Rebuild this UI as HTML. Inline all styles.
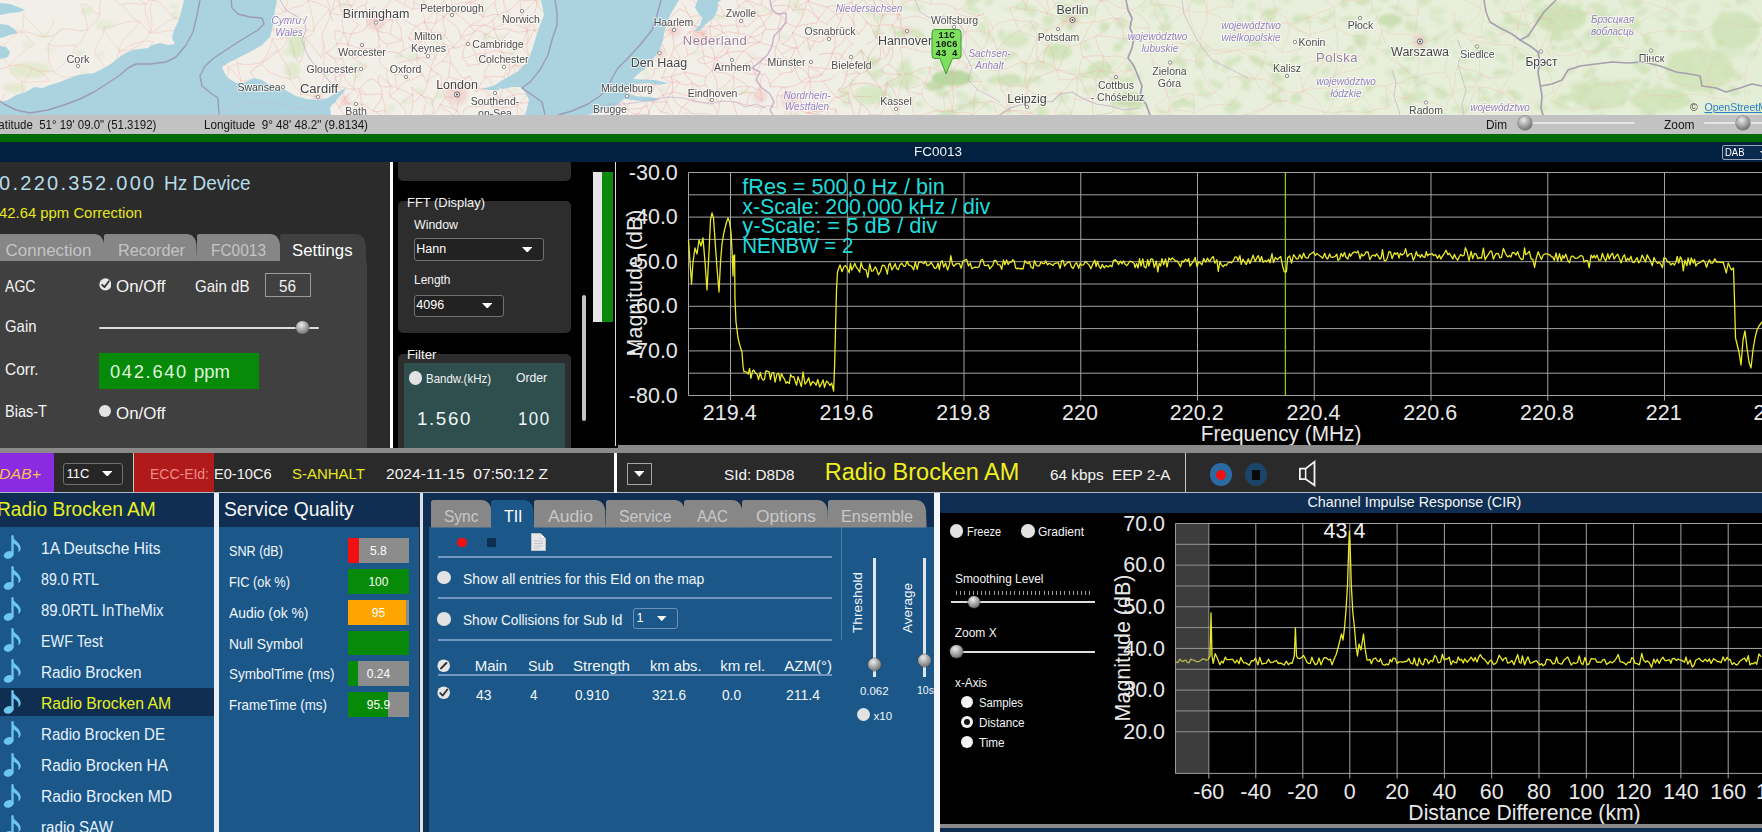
<!DOCTYPE html>
<html lang="en"><head><meta charset="utf-8"><title>DAB receiver</title>
<style>
html,body{margin:0;padding:0}
body{width:1762px;height:832px;overflow:hidden;background:#2b2b2b;position:relative;font-family:"Liberation Sans",sans-serif}
.b{position:absolute;display:block}
.t{position:absolute;white-space:pre;line-height:1;transform-origin:0 50%;font-family:"Liberation Sans",sans-serif}
svg text{white-space:pre}
</style></head>
<body>
<svg class="b" style="left:0;top:0" width="1762" height="115" viewBox="0 0 1762 115">
<defs><filter id="bl" x="-20%" y="-20%" width="140%" height="140%"><feGaussianBlur stdDeviation="5"/></filter><filter id="bl2" x="-20%" y="-20%" width="140%" height="140%"><feGaussianBlur stdDeviation="1.6"/></filter><linearGradient id="gr" x1="0" x2="1" y1="0" y2="0"><stop offset="0" stop-color="#e9efdc" stop-opacity="0"/><stop offset="0.44" stop-color="#e9efdc" stop-opacity="0.05"/><stop offset="0.56" stop-color="#e9efdc" stop-opacity="0.8"/><stop offset="1" stop-color="#e4eed6" stop-opacity="1"/></linearGradient></defs>
<rect width="1762" height="115" fill="#f2efe9"/>
<rect width="1762" height="115" fill="url(#gr)"/>
<g filter="url(#bl2)"><ellipse cx="907" cy="61" rx="2.9" ry="3.7" fill="#cfe2b9" opacity="0.37" transform="rotate(-5 907 61)"/><ellipse cx="904" cy="7" rx="7.9" ry="2.3" fill="#cfe2b9" opacity="0.46" transform="rotate(10 904 7)"/><ellipse cx="1714" cy="66" rx="8.8" ry="2.0" fill="#cfe2b9" opacity="0.78" transform="rotate(-17 1714 66)"/><ellipse cx="973" cy="10" rx="7.8" ry="2.5" fill="#cfe2b9" opacity="0.64" transform="rotate(11 973 10)"/><ellipse cx="1183" cy="63" rx="2.9" ry="2.6" fill="#cfe2b9" opacity="0.69" transform="rotate(-6 1183 63)"/><ellipse cx="1130" cy="67" rx="4.4" ry="4.7" fill="#cfe2b9" opacity="0.70" transform="rotate(-20 1130 67)"/><ellipse cx="980" cy="56" rx="6.8" ry="4.6" fill="#cfe2b9" opacity="0.64" transform="rotate(30 980 56)"/><ellipse cx="1129" cy="81" rx="6.3" ry="3.5" fill="#cfe2b9" opacity="0.77" transform="rotate(36 1129 81)"/><ellipse cx="1277" cy="77" rx="7.1" ry="4.2" fill="#cfe2b9" opacity="0.85" transform="rotate(26 1277 77)"/><ellipse cx="861" cy="52" rx="3.3" ry="2.0" fill="#cfe2b9" opacity="0.73" transform="rotate(-30 861 52)"/><ellipse cx="1654" cy="96" rx="4.3" ry="3.3" fill="#cfe2b9" opacity="0.53" transform="rotate(31 1654 96)"/><ellipse cx="1723" cy="14" rx="4.0" ry="2.7" fill="#cfe2b9" opacity="0.59" transform="rotate(7 1723 14)"/><ellipse cx="1082" cy="-4" rx="4.9" ry="3.9" fill="#cfe2b9" opacity="0.83" transform="rotate(15 1082 -4)"/><ellipse cx="1315" cy="71" rx="2.9" ry="5.1" fill="#cfe2b9" opacity="0.74" transform="rotate(30 1315 71)"/><ellipse cx="1576" cy="44" rx="3.2" ry="4.1" fill="#cfe2b9" opacity="0.38" transform="rotate(-35 1576 44)"/><ellipse cx="1032" cy="16" rx="2.8" ry="1.8" fill="#cfe2b9" opacity="0.43" transform="rotate(-32 1032 16)"/><ellipse cx="1406" cy="14" rx="4.8" ry="3.1" fill="#cfe2b9" opacity="0.41" transform="rotate(28 1406 14)"/><ellipse cx="1756" cy="53" rx="3.1" ry="2.2" fill="#cfe2b9" opacity="0.52" transform="rotate(-19 1756 53)"/><ellipse cx="1604" cy="16" rx="8.7" ry="3.8" fill="#cfe2b9" opacity="0.42" transform="rotate(3 1604 16)"/><ellipse cx="1636" cy="81" rx="4.9" ry="2.4" fill="#cfe2b9" opacity="0.74" transform="rotate(3 1636 81)"/><ellipse cx="1558" cy="36" rx="7.8" ry="5.4" fill="#cfe2b9" opacity="0.78" transform="rotate(24 1558 36)"/><ellipse cx="1595" cy="86" rx="5.9" ry="3.1" fill="#cfe2b9" opacity="0.36" transform="rotate(-38 1595 86)"/><ellipse cx="1722" cy="51" rx="8.9" ry="5.3" fill="#cfe2b9" opacity="0.53" transform="rotate(-22 1722 51)"/><ellipse cx="1049" cy="20" rx="6.6" ry="5.1" fill="#cfe2b9" opacity="0.77" transform="rotate(-2 1049 20)"/><ellipse cx="1442" cy="94" rx="6.8" ry="5.2" fill="#cfe2b9" opacity="0.74" transform="rotate(20 1442 94)"/><ellipse cx="1508" cy="17" rx="3.5" ry="5.1" fill="#cfe2b9" opacity="0.75" transform="rotate(-28 1508 17)"/><ellipse cx="1602" cy="116" rx="4.8" ry="3.8" fill="#cfe2b9" opacity="0.42" transform="rotate(-39 1602 116)"/><ellipse cx="1735" cy="75" rx="8.6" ry="3.4" fill="#cfe2b9" opacity="0.79" transform="rotate(26 1735 75)"/><ellipse cx="1035" cy="27" rx="4.1" ry="4.0" fill="#cfe2b9" opacity="0.48" transform="rotate(-6 1035 27)"/><ellipse cx="961" cy="107" rx="5.5" ry="4.0" fill="#cfe2b9" opacity="0.80" transform="rotate(-6 961 107)"/><ellipse cx="1686" cy="57" rx="5.9" ry="1.9" fill="#cfe2b9" opacity="0.57" transform="rotate(-25 1686 57)"/><ellipse cx="844" cy="93" rx="5.6" ry="4.5" fill="#cfe2b9" opacity="0.63" transform="rotate(-14 844 93)"/><ellipse cx="938" cy="64" rx="4.3" ry="4.7" fill="#cfe2b9" opacity="0.60" transform="rotate(5 938 64)"/><ellipse cx="1541" cy="107" rx="6.5" ry="3.7" fill="#cfe2b9" opacity="0.61" transform="rotate(15 1541 107)"/><ellipse cx="1257" cy="61" rx="8.6" ry="4.4" fill="#cfe2b9" opacity="0.79" transform="rotate(35 1257 61)"/><ellipse cx="1614" cy="13" rx="5.4" ry="2.1" fill="#cfe2b9" opacity="0.47" transform="rotate(-34 1614 13)"/><ellipse cx="1042" cy="112" rx="5.7" ry="5.5" fill="#cfe2b9" opacity="0.77" transform="rotate(-27 1042 112)"/><ellipse cx="1238" cy="59" rx="3.8" ry="3.0" fill="#cfe2b9" opacity="0.71" transform="rotate(-38 1238 59)"/><ellipse cx="1351" cy="50" rx="4.7" ry="4.1" fill="#cfe2b9" opacity="0.61" transform="rotate(-35 1351 50)"/><ellipse cx="1748" cy="92" rx="3.2" ry="2.8" fill="#cfe2b9" opacity="0.37" transform="rotate(22 1748 92)"/><ellipse cx="1089" cy="12" rx="8.4" ry="4.8" fill="#cfe2b9" opacity="0.48" transform="rotate(-28 1089 12)"/><ellipse cx="1687" cy="66" rx="3.1" ry="2.0" fill="#cfe2b9" opacity="0.69" transform="rotate(-6 1687 66)"/><ellipse cx="1579" cy="6" rx="2.9" ry="5.0" fill="#cfe2b9" opacity="0.58" transform="rotate(-13 1579 6)"/><ellipse cx="1350" cy="109" rx="3.3" ry="3.7" fill="#cfe2b9" opacity="0.47" transform="rotate(-31 1350 109)"/><ellipse cx="989" cy="2" rx="4.5" ry="2.9" fill="#cfe2b9" opacity="0.73" transform="rotate(-17 989 2)"/><ellipse cx="1301" cy="18" rx="2.6" ry="2.7" fill="#cfe2b9" opacity="0.36" transform="rotate(19 1301 18)"/><ellipse cx="1348" cy="19" rx="8.6" ry="2.2" fill="#cfe2b9" opacity="0.76" transform="rotate(-5 1348 19)"/><ellipse cx="1296" cy="98" rx="5.8" ry="4.3" fill="#cfe2b9" opacity="0.84" transform="rotate(-13 1296 98)"/><ellipse cx="1607" cy="82" rx="5.1" ry="3.1" fill="#cfe2b9" opacity="0.38" transform="rotate(-30 1607 82)"/><ellipse cx="905" cy="86" rx="3.6" ry="2.1" fill="#cfe2b9" opacity="0.77" transform="rotate(30 905 86)"/><ellipse cx="1458" cy="30" rx="4.4" ry="3.5" fill="#cfe2b9" opacity="0.43" transform="rotate(-4 1458 30)"/><ellipse cx="1125" cy="40" rx="5.0" ry="3.6" fill="#cfe2b9" opacity="0.60" transform="rotate(-24 1125 40)"/><ellipse cx="1305" cy="-3" rx="3.1" ry="3.3" fill="#cfe2b9" opacity="0.37" transform="rotate(-38 1305 -3)"/><ellipse cx="1121" cy="24" rx="5.9" ry="4.6" fill="#cfe2b9" opacity="0.68" transform="rotate(17 1121 24)"/><ellipse cx="1651" cy="44" rx="8.9" ry="2.4" fill="#cfe2b9" opacity="0.71" transform="rotate(11 1651 44)"/><ellipse cx="1418" cy="86" rx="3.4" ry="3.7" fill="#cfe2b9" opacity="0.60" transform="rotate(27 1418 86)"/><ellipse cx="1582" cy="97" rx="8.3" ry="4.3" fill="#cfe2b9" opacity="0.70" transform="rotate(-22 1582 97)"/><ellipse cx="869" cy="12" rx="3.2" ry="4.9" fill="#cfe2b9" opacity="0.63" transform="rotate(10 869 12)"/><ellipse cx="1417" cy="79" rx="2.5" ry="4.8" fill="#cfe2b9" opacity="0.72" transform="rotate(0 1417 79)"/><ellipse cx="1333" cy="76" rx="7.3" ry="2.7" fill="#cfe2b9" opacity="0.39" transform="rotate(-19 1333 76)"/><ellipse cx="1512" cy="21" rx="8.8" ry="3.6" fill="#cfe2b9" opacity="0.54" transform="rotate(-2 1512 21)"/><ellipse cx="1470" cy="90" rx="6.7" ry="2.1" fill="#cfe2b9" opacity="0.42" transform="rotate(-20 1470 90)"/><ellipse cx="1525" cy="33" rx="2.6" ry="2.0" fill="#cfe2b9" opacity="0.48" transform="rotate(14 1525 33)"/><ellipse cx="1478" cy="78" rx="5.9" ry="3.5" fill="#cfe2b9" opacity="0.58" transform="rotate(-31 1478 78)"/><ellipse cx="1664" cy="20" rx="8.6" ry="1.9" fill="#cfe2b9" opacity="0.58" transform="rotate(26 1664 20)"/><ellipse cx="1733" cy="51" rx="3.9" ry="5.3" fill="#cfe2b9" opacity="0.46" transform="rotate(7 1733 51)"/><ellipse cx="962" cy="96" rx="8.3" ry="4.4" fill="#cfe2b9" opacity="0.47" transform="rotate(32 962 96)"/><ellipse cx="1288" cy="-1" rx="5.7" ry="3.5" fill="#cfe2b9" opacity="0.50" transform="rotate(-29 1288 -1)"/><ellipse cx="1671" cy="31" rx="5.1" ry="5.5" fill="#cfe2b9" opacity="0.64" transform="rotate(-11 1671 31)"/><ellipse cx="1235" cy="30" rx="3.2" ry="4.9" fill="#cfe2b9" opacity="0.49" transform="rotate(35 1235 30)"/><ellipse cx="1070" cy="28" rx="3.7" ry="3.2" fill="#cfe2b9" opacity="0.83" transform="rotate(31 1070 28)"/><ellipse cx="1589" cy="73" rx="8.6" ry="3.8" fill="#cfe2b9" opacity="0.71" transform="rotate(-36 1589 73)"/><ellipse cx="1515" cy="51" rx="6.7" ry="2.9" fill="#cfe2b9" opacity="0.37" transform="rotate(34 1515 51)"/><ellipse cx="957" cy="54" rx="4.4" ry="4.5" fill="#cfe2b9" opacity="0.84" transform="rotate(-19 957 54)"/><ellipse cx="1445" cy="33" rx="5.1" ry="2.4" fill="#cfe2b9" opacity="0.43" transform="rotate(-23 1445 33)"/><ellipse cx="1675" cy="57" rx="8.4" ry="5.5" fill="#cfe2b9" opacity="0.57" transform="rotate(-29 1675 57)"/><ellipse cx="1017" cy="7" rx="3.1" ry="2.7" fill="#cfe2b9" opacity="0.48" transform="rotate(6 1017 7)"/><ellipse cx="1658" cy="87" rx="5.2" ry="3.7" fill="#cfe2b9" opacity="0.54" transform="rotate(-13 1658 87)"/><ellipse cx="1636" cy="22" rx="4.1" ry="3.3" fill="#cfe2b9" opacity="0.57" transform="rotate(36 1636 22)"/><ellipse cx="1622" cy="102" rx="2.7" ry="4.4" fill="#cfe2b9" opacity="0.80" transform="rotate(-2 1622 102)"/><ellipse cx="1381" cy="-4" rx="8.5" ry="4.9" fill="#cfe2b9" opacity="0.78" transform="rotate(38 1381 -4)"/><ellipse cx="1069" cy="9" rx="5.9" ry="4.3" fill="#cfe2b9" opacity="0.82" transform="rotate(18 1069 9)"/><ellipse cx="1437" cy="89" rx="6.1" ry="1.9" fill="#cfe2b9" opacity="0.74" transform="rotate(-21 1437 89)"/><ellipse cx="1688" cy="75" rx="3.3" ry="2.7" fill="#cfe2b9" opacity="0.67" transform="rotate(16 1688 75)"/><ellipse cx="1377" cy="43" rx="6.4" ry="1.8" fill="#cfe2b9" opacity="0.50" transform="rotate(-3 1377 43)"/><ellipse cx="1724" cy="75" rx="5.6" ry="2.7" fill="#cfe2b9" opacity="0.47" transform="rotate(37 1724 75)"/><ellipse cx="1490" cy="34" rx="5.7" ry="4.3" fill="#cfe2b9" opacity="0.56" transform="rotate(-19 1490 34)"/><ellipse cx="1455" cy="109" rx="2.7" ry="3.1" fill="#cfe2b9" opacity="0.56" transform="rotate(15 1455 109)"/><ellipse cx="1127" cy="96" rx="3.9" ry="4.6" fill="#cfe2b9" opacity="0.50" transform="rotate(36 1127 96)"/><ellipse cx="1297" cy="19" rx="5.2" ry="4.3" fill="#cfe2b9" opacity="0.82" transform="rotate(-28 1297 19)"/><ellipse cx="971" cy="2" rx="5.1" ry="5.1" fill="#cfe2b9" opacity="0.79" transform="rotate(19 971 2)"/><ellipse cx="1760" cy="110" rx="3.7" ry="5.3" fill="#cfe2b9" opacity="0.72" transform="rotate(-37 1760 110)"/><ellipse cx="1453" cy="42" rx="4.7" ry="2.4" fill="#cfe2b9" opacity="0.35" transform="rotate(-18 1453 42)"/><ellipse cx="1164" cy="113" rx="8.8" ry="2.6" fill="#cfe2b9" opacity="0.53" transform="rotate(26 1164 113)"/><ellipse cx="1598" cy="49" rx="5.6" ry="3.2" fill="#cfe2b9" opacity="0.81" transform="rotate(-25 1598 49)"/><ellipse cx="1176" cy="105" rx="5.2" ry="4.8" fill="#cfe2b9" opacity="0.73" transform="rotate(-37 1176 105)"/><ellipse cx="1409" cy="28" rx="4.6" ry="2.8" fill="#cfe2b9" opacity="0.35" transform="rotate(20 1409 28)"/><ellipse cx="1685" cy="73" rx="2.7" ry="2.7" fill="#cfe2b9" opacity="0.59" transform="rotate(37 1685 73)"/><ellipse cx="1720" cy="43" rx="5.3" ry="3.6" fill="#cfe2b9" opacity="0.81" transform="rotate(-25 1720 43)"/><ellipse cx="1580" cy="86" rx="7.5" ry="4.0" fill="#cfe2b9" opacity="0.51" transform="rotate(-14 1580 86)"/><ellipse cx="1174" cy="91" rx="3.8" ry="4.6" fill="#cfe2b9" opacity="0.47" transform="rotate(-35 1174 91)"/><ellipse cx="871" cy="63" rx="8.9" ry="5.1" fill="#cfe2b9" opacity="0.84" transform="rotate(-19 871 63)"/><ellipse cx="918" cy="8" rx="7.1" ry="3.5" fill="#cfe2b9" opacity="0.47" transform="rotate(-7 918 8)"/><ellipse cx="1412" cy="78" rx="8.0" ry="4.3" fill="#cfe2b9" opacity="0.41" transform="rotate(27 1412 78)"/><ellipse cx="1111" cy="65" rx="7.3" ry="2.5" fill="#cfe2b9" opacity="0.47" transform="rotate(-20 1111 65)"/><ellipse cx="1442" cy="117" rx="5.6" ry="4.8" fill="#cfe2b9" opacity="0.77" transform="rotate(33 1442 117)"/><ellipse cx="877" cy="32" rx="3.7" ry="5.4" fill="#cfe2b9" opacity="0.64" transform="rotate(34 877 32)"/><ellipse cx="1183" cy="102" rx="4.2" ry="4.7" fill="#cfe2b9" opacity="0.82" transform="rotate(-32 1183 102)"/><ellipse cx="1390" cy="72" rx="4.9" ry="2.3" fill="#cfe2b9" opacity="0.45" transform="rotate(-20 1390 72)"/><ellipse cx="1393" cy="76" rx="2.6" ry="3.0" fill="#cfe2b9" opacity="0.69" transform="rotate(-25 1393 76)"/><ellipse cx="1345" cy="4" rx="5.1" ry="3.8" fill="#cfe2b9" opacity="0.67" transform="rotate(-33 1345 4)"/><ellipse cx="991" cy="81" rx="4.3" ry="2.9" fill="#cfe2b9" opacity="0.83" transform="rotate(-15 991 81)"/><ellipse cx="1362" cy="40" rx="8.1" ry="5.5" fill="#cfe2b9" opacity="0.53" transform="rotate(-24 1362 40)"/><ellipse cx="1511" cy="21" rx="8.4" ry="3.4" fill="#cfe2b9" opacity="0.76" transform="rotate(-8 1511 21)"/><ellipse cx="1654" cy="52" rx="2.6" ry="3.8" fill="#cfe2b9" opacity="0.67" transform="rotate(33 1654 52)"/><ellipse cx="922" cy="72" rx="5.8" ry="2.3" fill="#cfe2b9" opacity="0.49" transform="rotate(2 922 72)"/><ellipse cx="1693" cy="9" rx="7.7" ry="5.4" fill="#cfe2b9" opacity="0.45" transform="rotate(-30 1693 9)"/><ellipse cx="1710" cy="115" rx="2.8" ry="5.2" fill="#cfe2b9" opacity="0.54" transform="rotate(32 1710 115)"/><ellipse cx="1412" cy="97" rx="7.6" ry="2.6" fill="#cfe2b9" opacity="0.55" transform="rotate(28 1412 97)"/><ellipse cx="1605" cy="18" rx="5.1" ry="3.7" fill="#cfe2b9" opacity="0.54" transform="rotate(-30 1605 18)"/><ellipse cx="875" cy="98" rx="6.4" ry="3.8" fill="#cfe2b9" opacity="0.66" transform="rotate(-16 875 98)"/><ellipse cx="1227" cy="67" rx="6.8" ry="3.5" fill="#cfe2b9" opacity="0.57" transform="rotate(-38 1227 67)"/><ellipse cx="1411" cy="56" rx="7.5" ry="4.7" fill="#cfe2b9" opacity="0.58" transform="rotate(-26 1411 56)"/><ellipse cx="1276" cy="9" rx="5.3" ry="2.1" fill="#cfe2b9" opacity="0.57" transform="rotate(1 1276 9)"/><ellipse cx="878" cy="74" rx="7.3" ry="4.7" fill="#cfe2b9" opacity="0.61" transform="rotate(-36 878 74)"/><ellipse cx="1515" cy="95" rx="8.9" ry="3.6" fill="#cfe2b9" opacity="0.83" transform="rotate(33 1515 95)"/><ellipse cx="986" cy="105" rx="7.8" ry="2.3" fill="#cfe2b9" opacity="0.60" transform="rotate(34 986 105)"/><ellipse cx="1032" cy="28" rx="4.6" ry="1.9" fill="#cfe2b9" opacity="0.44" transform="rotate(-27 1032 28)"/><ellipse cx="1703" cy="79" rx="3.6" ry="4.7" fill="#cfe2b9" opacity="0.41" transform="rotate(2 1703 79)"/><ellipse cx="1204" cy="93" rx="8.9" ry="3.9" fill="#cfe2b9" opacity="0.53" transform="rotate(21 1204 93)"/><ellipse cx="885" cy="96" rx="6.7" ry="5.4" fill="#cfe2b9" opacity="0.64" transform="rotate(13 885 96)"/><ellipse cx="1128" cy="-4" rx="3.5" ry="4.1" fill="#cfe2b9" opacity="0.57" transform="rotate(1 1128 -4)"/><ellipse cx="1666" cy="12" rx="6.7" ry="1.9" fill="#cfe2b9" opacity="0.35" transform="rotate(-12 1666 12)"/><ellipse cx="938" cy="40" rx="6.3" ry="4.0" fill="#cfe2b9" opacity="0.45" transform="rotate(10 938 40)"/><ellipse cx="1065" cy="14" rx="6.6" ry="5.0" fill="#cfe2b9" opacity="0.74" transform="rotate(-8 1065 14)"/><ellipse cx="1358" cy="39" rx="5.4" ry="5.3" fill="#cfe2b9" opacity="0.72" transform="rotate(-20 1358 39)"/><ellipse cx="1673" cy="1" rx="5.1" ry="2.7" fill="#cfe2b9" opacity="0.38" transform="rotate(22 1673 1)"/><ellipse cx="1001" cy="34" rx="2.8" ry="5.1" fill="#cfe2b9" opacity="0.74" transform="rotate(17 1001 34)"/><ellipse cx="1269" cy="86" rx="4.0" ry="2.2" fill="#cfe2b9" opacity="0.47" transform="rotate(-37 1269 86)"/><ellipse cx="1619" cy="83" rx="6.1" ry="3.4" fill="#cfe2b9" opacity="0.74" transform="rotate(2 1619 83)"/><ellipse cx="1040" cy="103" rx="4.2" ry="2.7" fill="#cfe2b9" opacity="0.72" transform="rotate(36 1040 103)"/><ellipse cx="1528" cy="36" rx="4.6" ry="2.7" fill="#cfe2b9" opacity="0.80" transform="rotate(10 1528 36)"/><ellipse cx="1273" cy="98" rx="8.1" ry="3.4" fill="#cfe2b9" opacity="0.71" transform="rotate(6 1273 98)"/><ellipse cx="1124" cy="22" rx="3.0" ry="5.2" fill="#cfe2b9" opacity="0.42" transform="rotate(-38 1124 22)"/><ellipse cx="938" cy="109" rx="3.4" ry="1.9" fill="#cfe2b9" opacity="0.37" transform="rotate(15 938 109)"/><ellipse cx="1424" cy="81" rx="2.9" ry="4.0" fill="#cfe2b9" opacity="0.53" transform="rotate(25 1424 81)"/><ellipse cx="1596" cy="105" rx="8.1" ry="5.2" fill="#cfe2b9" opacity="0.82" transform="rotate(-31 1596 105)"/><ellipse cx="1030" cy="10" rx="8.0" ry="4.8" fill="#cfe2b9" opacity="0.67" transform="rotate(26 1030 10)"/><ellipse cx="1422" cy="31" rx="3.1" ry="4.6" fill="#cfe2b9" opacity="0.45" transform="rotate(-14 1422 31)"/><ellipse cx="1231" cy="-1" rx="4.3" ry="4.4" fill="#cfe2b9" opacity="0.53" transform="rotate(-14 1231 -1)"/><ellipse cx="1729" cy="57" rx="6.5" ry="1.9" fill="#cfe2b9" opacity="0.56" transform="rotate(-5 1729 57)"/><ellipse cx="1553" cy="38" rx="6.0" ry="2.6" fill="#cfe2b9" opacity="0.78" transform="rotate(-33 1553 38)"/><ellipse cx="1596" cy="17" rx="3.8" ry="4.6" fill="#cfe2b9" opacity="0.84" transform="rotate(-40 1596 17)"/><ellipse cx="1010" cy="56" rx="7.9" ry="2.8" fill="#cfe2b9" opacity="0.82" transform="rotate(-17 1010 56)"/><ellipse cx="1038" cy="81" rx="3.2" ry="4.2" fill="#cfe2b9" opacity="0.39" transform="rotate(23 1038 81)"/><ellipse cx="1483" cy="92" rx="4.8" ry="3.3" fill="#cfe2b9" opacity="0.55" transform="rotate(31 1483 92)"/><ellipse cx="919" cy="104" rx="3.8" ry="2.8" fill="#cfe2b9" opacity="0.80" transform="rotate(0 919 104)"/><ellipse cx="1190" cy="104" rx="5.5" ry="3.8" fill="#cfe2b9" opacity="0.73" transform="rotate(20 1190 104)"/><ellipse cx="1436" cy="39" rx="3.5" ry="4.9" fill="#cfe2b9" opacity="0.68" transform="rotate(19 1436 39)"/><ellipse cx="1374" cy="11" rx="8.3" ry="2.7" fill="#cfe2b9" opacity="0.45" transform="rotate(-16 1374 11)"/><ellipse cx="1488" cy="99" rx="3.5" ry="2.7" fill="#cfe2b9" opacity="0.51" transform="rotate(2 1488 99)"/><ellipse cx="988" cy="36" rx="8.8" ry="4.5" fill="#cfe2b9" opacity="0.40" transform="rotate(37 988 36)"/><ellipse cx="1573" cy="85" rx="3.8" ry="4.2" fill="#cfe2b9" opacity="0.40" transform="rotate(-23 1573 85)"/><ellipse cx="1198" cy="0" rx="7.6" ry="4.4" fill="#cfe2b9" opacity="0.60" transform="rotate(11 1198 0)"/><ellipse cx="1267" cy="13" rx="5.1" ry="4.5" fill="#cfe2b9" opacity="0.80" transform="rotate(-6 1267 13)"/><ellipse cx="1369" cy="87" rx="4.0" ry="4.5" fill="#cfe2b9" opacity="0.79" transform="rotate(22 1369 87)"/><ellipse cx="1485" cy="100" rx="6.7" ry="3.5" fill="#cfe2b9" opacity="0.51" transform="rotate(10 1485 100)"/><ellipse cx="1498" cy="73" rx="5.3" ry="3.5" fill="#cfe2b9" opacity="0.66" transform="rotate(-7 1498 73)"/><ellipse cx="1463" cy="109" rx="6.8" ry="4.7" fill="#cfe2b9" opacity="0.54" transform="rotate(-1 1463 109)"/><ellipse cx="1739" cy="1" rx="3.5" ry="4.7" fill="#cfe2b9" opacity="0.82" transform="rotate(2 1739 1)"/><ellipse cx="1501" cy="58" rx="7.9" ry="3.7" fill="#cfe2b9" opacity="0.56" transform="rotate(36 1501 58)"/><ellipse cx="1034" cy="79" rx="7.5" ry="2.3" fill="#cfe2b9" opacity="0.84" transform="rotate(-12 1034 79)"/><ellipse cx="892" cy="29" rx="2.6" ry="3.3" fill="#cfe2b9" opacity="0.56" transform="rotate(16 892 29)"/><ellipse cx="1165" cy="28" rx="7.3" ry="5.3" fill="#cfe2b9" opacity="0.61" transform="rotate(-22 1165 28)"/><ellipse cx="1579" cy="44" rx="3.3" ry="4.7" fill="#cfe2b9" opacity="0.75" transform="rotate(11 1579 44)"/><ellipse cx="1273" cy="65" rx="8.8" ry="3.1" fill="#cfe2b9" opacity="0.67" transform="rotate(25 1273 65)"/><ellipse cx="1593" cy="53" rx="6.1" ry="2.3" fill="#cfe2b9" opacity="0.77" transform="rotate(-12 1593 53)"/><ellipse cx="1624" cy="29" rx="4.1" ry="3.4" fill="#cfe2b9" opacity="0.44" transform="rotate(-40 1624 29)"/><ellipse cx="1505" cy="30" rx="4.5" ry="3.6" fill="#cfe2b9" opacity="0.56" transform="rotate(11 1505 30)"/><ellipse cx="1628" cy="3" rx="8.4" ry="4.7" fill="#cfe2b9" opacity="0.42" transform="rotate(27 1628 3)"/><ellipse cx="1424" cy="-2" rx="8.7" ry="4.2" fill="#cfe2b9" opacity="0.48" transform="rotate(-32 1424 -2)"/><ellipse cx="1570" cy="16" rx="6.5" ry="4.7" fill="#cfe2b9" opacity="0.68" transform="rotate(32 1570 16)"/><ellipse cx="1567" cy="98" rx="7.0" ry="3.8" fill="#cfe2b9" opacity="0.72" transform="rotate(-5 1567 98)"/><ellipse cx="1654" cy="64" rx="4.0" ry="2.3" fill="#cfe2b9" opacity="0.60" transform="rotate(-35 1654 64)"/><ellipse cx="1271" cy="14" rx="5.7" ry="3.8" fill="#cfe2b9" opacity="0.78" transform="rotate(-39 1271 14)"/><ellipse cx="1615" cy="53" rx="6.8" ry="4.9" fill="#cfe2b9" opacity="0.54" transform="rotate(-6 1615 53)"/><ellipse cx="1726" cy="5" rx="6.6" ry="1.9" fill="#cfe2b9" opacity="0.65" transform="rotate(15 1726 5)"/><ellipse cx="1699" cy="36" rx="5.8" ry="3.6" fill="#cfe2b9" opacity="0.80" transform="rotate(-37 1699 36)"/><ellipse cx="1502" cy="72" rx="8.1" ry="3.2" fill="#cfe2b9" opacity="0.59" transform="rotate(2 1502 72)"/><ellipse cx="1550" cy="22" rx="5.2" ry="3.8" fill="#cfe2b9" opacity="0.76" transform="rotate(-17 1550 22)"/><ellipse cx="1603" cy="45" rx="4.3" ry="3.7" fill="#cfe2b9" opacity="0.84" transform="rotate(12 1603 45)"/><ellipse cx="1570" cy="36" rx="4.4" ry="4.0" fill="#cfe2b9" opacity="0.67" transform="rotate(23 1570 36)"/><ellipse cx="1343" cy="2" rx="2.5" ry="2.5" fill="#cfe2b9" opacity="0.81" transform="rotate(9 1343 2)"/><ellipse cx="1404" cy="71" rx="7.0" ry="4.0" fill="#cfe2b9" opacity="0.69" transform="rotate(-23 1404 71)"/><ellipse cx="1455" cy="52" rx="3.2" ry="2.5" fill="#cfe2b9" opacity="0.37" transform="rotate(22 1455 52)"/><ellipse cx="1683" cy="76" rx="7.8" ry="4.7" fill="#cfe2b9" opacity="0.63" transform="rotate(-19 1683 76)"/><ellipse cx="1118" cy="47" rx="5.3" ry="4.2" fill="#cfe2b9" opacity="0.82" transform="rotate(-36 1118 47)"/><ellipse cx="1363" cy="1" rx="7.8" ry="3.9" fill="#cfe2b9" opacity="0.81" transform="rotate(-4 1363 1)"/><ellipse cx="1705" cy="116" rx="5.2" ry="2.2" fill="#cfe2b9" opacity="0.67" transform="rotate(-23 1705 116)"/><ellipse cx="980" cy="-2" rx="6.9" ry="2.3" fill="#cfe2b9" opacity="0.83" transform="rotate(-33 980 -2)"/><ellipse cx="1642" cy="12" rx="7.2" ry="2.7" fill="#cfe2b9" opacity="0.72" transform="rotate(-25 1642 12)"/><ellipse cx="1629" cy="85" rx="6.6" ry="4.4" fill="#cfe2b9" opacity="0.58" transform="rotate(35 1629 85)"/><ellipse cx="1594" cy="6" rx="7.2" ry="2.4" fill="#cfe2b9" opacity="0.78" transform="rotate(-1 1594 6)"/><ellipse cx="1245" cy="79" rx="7.7" ry="3.1" fill="#cfe2b9" opacity="0.67" transform="rotate(10 1245 79)"/><ellipse cx="1711" cy="92" rx="4.4" ry="2.0" fill="#cfe2b9" opacity="0.84" transform="rotate(16 1711 92)"/><ellipse cx="1603" cy="37" rx="8.9" ry="4.9" fill="#cfe2b9" opacity="0.65" transform="rotate(-15 1603 37)"/><ellipse cx="1235" cy="104" rx="7.0" ry="4.0" fill="#cfe2b9" opacity="0.80" transform="rotate(25 1235 104)"/><ellipse cx="1101" cy="-4" rx="5.2" ry="4.0" fill="#cfe2b9" opacity="0.76" transform="rotate(31 1101 -4)"/><ellipse cx="1640" cy="66" rx="8.0" ry="4.8" fill="#cfe2b9" opacity="0.69" transform="rotate(33 1640 66)"/><ellipse cx="1160" cy="6" rx="7.7" ry="2.5" fill="#cfe2b9" opacity="0.73" transform="rotate(35 1160 6)"/><ellipse cx="1269" cy="21" rx="7.4" ry="4.7" fill="#cfe2b9" opacity="0.58" transform="rotate(-33 1269 21)"/><ellipse cx="1584" cy="90" rx="6.3" ry="5.1" fill="#cfe2b9" opacity="0.79" transform="rotate(2 1584 90)"/><ellipse cx="1279" cy="68" rx="3.8" ry="2.5" fill="#cfe2b9" opacity="0.70" transform="rotate(-11 1279 68)"/><ellipse cx="1360" cy="45" rx="3.5" ry="2.0" fill="#cfe2b9" opacity="0.85" transform="rotate(-10 1360 45)"/><ellipse cx="984" cy="69" rx="5.9" ry="1.9" fill="#cfe2b9" opacity="0.37" transform="rotate(39 984 69)"/><ellipse cx="1639" cy="55" rx="4.2" ry="4.7" fill="#cfe2b9" opacity="0.56" transform="rotate(36 1639 55)"/><ellipse cx="1074" cy="1" rx="3.7" ry="2.1" fill="#cfe2b9" opacity="0.38" transform="rotate(5 1074 1)"/><ellipse cx="1643" cy="52" rx="8.4" ry="2.0" fill="#cfe2b9" opacity="0.65" transform="rotate(-8 1643 52)"/><ellipse cx="951" cy="113" rx="6.2" ry="4.2" fill="#cfe2b9" opacity="0.83" transform="rotate(14 951 113)"/><ellipse cx="1202" cy="51" rx="8.8" ry="5.5" fill="#cfe2b9" opacity="0.46" transform="rotate(-37 1202 51)"/><ellipse cx="1674" cy="98" rx="7.6" ry="4.4" fill="#cfe2b9" opacity="0.67" transform="rotate(39 1674 98)"/><ellipse cx="1706" cy="79" rx="6.3" ry="4.6" fill="#cfe2b9" opacity="0.40" transform="rotate(-14 1706 79)"/><ellipse cx="1077" cy="11" rx="3.6" ry="2.7" fill="#cfe2b9" opacity="0.42" transform="rotate(14 1077 11)"/><ellipse cx="852" cy="84" rx="2.7" ry="5.2" fill="#cfe2b9" opacity="0.46" transform="rotate(35 852 84)"/><ellipse cx="1639" cy="104" rx="5.4" ry="2.2" fill="#cfe2b9" opacity="0.81" transform="rotate(27 1639 104)"/><ellipse cx="1419" cy="51" rx="7.8" ry="3.6" fill="#cfe2b9" opacity="0.66" transform="rotate(-29 1419 51)"/><ellipse cx="1086" cy="46" rx="4.3" ry="4.9" fill="#cfe2b9" opacity="0.52" transform="rotate(-27 1086 46)"/><ellipse cx="945" cy="115" rx="8.3" ry="4.3" fill="#cfe2b9" opacity="0.46" transform="rotate(-2 945 115)"/><ellipse cx="1104" cy="27" rx="4.9" ry="5.5" fill="#cfe2b9" opacity="0.85" transform="rotate(34 1104 27)"/><ellipse cx="893" cy="85" rx="8.9" ry="1.9" fill="#cfe2b9" opacity="0.75" transform="rotate(-13 893 85)"/><ellipse cx="1326" cy="19" rx="8.4" ry="2.6" fill="#cfe2b9" opacity="0.64" transform="rotate(-29 1326 19)"/><ellipse cx="1021" cy="6" rx="6.5" ry="3.6" fill="#cfe2b9" opacity="0.49" transform="rotate(-24 1021 6)"/><ellipse cx="1405" cy="82" rx="6.3" ry="2.5" fill="#cfe2b9" opacity="0.38" transform="rotate(19 1405 82)"/><ellipse cx="1216" cy="84" rx="7.8" ry="3.0" fill="#cfe2b9" opacity="0.77" transform="rotate(29 1216 84)"/><ellipse cx="1279" cy="102" rx="3.7" ry="4.9" fill="#cfe2b9" opacity="0.53" transform="rotate(-27 1279 102)"/><ellipse cx="1182" cy="69" rx="5.9" ry="3.4" fill="#cfe2b9" opacity="0.61" transform="rotate(-30 1182 69)"/><ellipse cx="1499" cy="96" rx="4.6" ry="4.4" fill="#cfe2b9" opacity="0.54" transform="rotate(20 1499 96)"/><ellipse cx="1296" cy="59" rx="6.0" ry="1.9" fill="#cfe2b9" opacity="0.83" transform="rotate(-22 1296 59)"/><ellipse cx="1008" cy="9" rx="7.8" ry="1.9" fill="#cfe2b9" opacity="0.40" transform="rotate(16 1008 9)"/><ellipse cx="1372" cy="60" rx="3.2" ry="5.0" fill="#cfe2b9" opacity="0.71" transform="rotate(-36 1372 60)"/><ellipse cx="953" cy="56" rx="4.3" ry="2.3" fill="#cfe2b9" opacity="0.55" transform="rotate(-29 953 56)"/><ellipse cx="1386" cy="101" rx="6.2" ry="4.6" fill="#cfe2b9" opacity="0.43" transform="rotate(26 1386 101)"/><ellipse cx="1704" cy="43" rx="8.0" ry="3.7" fill="#cfe2b9" opacity="0.55" transform="rotate(35 1704 43)"/><ellipse cx="1556" cy="37" rx="4.7" ry="3.4" fill="#cfe2b9" opacity="0.84" transform="rotate(24 1556 37)"/><ellipse cx="1682" cy="95" rx="2.8" ry="3.7" fill="#cfe2b9" opacity="0.83" transform="rotate(35 1682 95)"/><ellipse cx="1176" cy="61" rx="5.3" ry="3.7" fill="#cfe2b9" opacity="0.36" transform="rotate(-29 1176 61)"/><ellipse cx="1734" cy="91" rx="6.6" ry="4.8" fill="#cfe2b9" opacity="0.79" transform="rotate(31 1734 91)"/><ellipse cx="872" cy="74" rx="6.9" ry="2.8" fill="#cfe2b9" opacity="0.62" transform="rotate(34 872 74)"/><ellipse cx="1413" cy="27" rx="5.3" ry="5.3" fill="#cfe2b9" opacity="0.49" transform="rotate(-16 1413 27)"/><ellipse cx="1437" cy="11" rx="8.7" ry="3.7" fill="#cfe2b9" opacity="0.48" transform="rotate(-3 1437 11)"/><ellipse cx="1332" cy="14" rx="3.4" ry="2.9" fill="#cfe2b9" opacity="0.55" transform="rotate(-17 1332 14)"/><ellipse cx="1064" cy="7" rx="8.0" ry="4.1" fill="#cfe2b9" opacity="0.64" transform="rotate(12 1064 7)"/><ellipse cx="1025" cy="83" rx="6.1" ry="4.1" fill="#cfe2b9" opacity="0.58" transform="rotate(-15 1025 83)"/><ellipse cx="1063" cy="23" rx="5.0" ry="4.0" fill="#cfe2b9" opacity="0.36" transform="rotate(-12 1063 23)"/><ellipse cx="1635" cy="25" rx="5.7" ry="2.9" fill="#cfe2b9" opacity="0.84" transform="rotate(-16 1635 25)"/><ellipse cx="1552" cy="15" rx="8.2" ry="3.4" fill="#cfe2b9" opacity="0.38" transform="rotate(-9 1552 15)"/><ellipse cx="1246" cy="86" rx="4.0" ry="5.3" fill="#cfe2b9" opacity="0.72" transform="rotate(-28 1246 86)"/><ellipse cx="1408" cy="100" rx="5.9" ry="4.5" fill="#cfe2b9" opacity="0.72" transform="rotate(21 1408 100)"/><ellipse cx="1278" cy="92" rx="8.4" ry="2.3" fill="#cfe2b9" opacity="0.79" transform="rotate(-40 1278 92)"/><ellipse cx="1546" cy="67" rx="8.8" ry="3.9" fill="#cfe2b9" opacity="0.56" transform="rotate(23 1546 67)"/><ellipse cx="1645" cy="70" rx="5.4" ry="3.5" fill="#cfe2b9" opacity="0.71" transform="rotate(-17 1645 70)"/><ellipse cx="1200" cy="64" rx="4.6" ry="4.7" fill="#cfe2b9" opacity="0.77" transform="rotate(-0 1200 64)"/><ellipse cx="1249" cy="18" rx="3.4" ry="3.9" fill="#cfe2b9" opacity="0.64" transform="rotate(-33 1249 18)"/><ellipse cx="1688" cy="36" rx="7.9" ry="5.3" fill="#cfe2b9" opacity="0.45" transform="rotate(-6 1688 36)"/><ellipse cx="1680" cy="-3" rx="6.2" ry="3.6" fill="#cfe2b9" opacity="0.81" transform="rotate(22 1680 -3)"/><ellipse cx="1336" cy="118" rx="5.9" ry="4.3" fill="#cfe2b9" opacity="0.54" transform="rotate(-11 1336 118)"/><ellipse cx="1464" cy="60" rx="4.9" ry="3.3" fill="#cfe2b9" opacity="0.63" transform="rotate(6 1464 60)"/><ellipse cx="1651" cy="114" rx="5.4" ry="4.1" fill="#cfe2b9" opacity="0.85" transform="rotate(-13 1651 114)"/><ellipse cx="1329" cy="96" rx="4.6" ry="5.4" fill="#cfe2b9" opacity="0.76" transform="rotate(1 1329 96)"/><ellipse cx="1597" cy="117" rx="5.2" ry="2.4" fill="#cfe2b9" opacity="0.49" transform="rotate(1 1597 117)"/><ellipse cx="1306" cy="19" rx="6.6" ry="4.0" fill="#cfe2b9" opacity="0.53" transform="rotate(39 1306 19)"/><ellipse cx="1427" cy="1" rx="7.6" ry="2.9" fill="#cfe2b9" opacity="0.70" transform="rotate(-40 1427 1)"/><ellipse cx="1121" cy="99" rx="6.8" ry="2.5" fill="#cfe2b9" opacity="0.60" transform="rotate(4 1121 99)"/><ellipse cx="1085" cy="75" rx="9.0" ry="3.9" fill="#cfe2b9" opacity="0.56" transform="rotate(-30 1085 75)"/><ellipse cx="985" cy="89" rx="3.2" ry="2.4" fill="#cfe2b9" opacity="0.61" transform="rotate(26 985 89)"/><ellipse cx="1405" cy="94" rx="2.6" ry="4.7" fill="#cfe2b9" opacity="0.51" transform="rotate(17 1405 94)"/><ellipse cx="1166" cy="17" rx="3.1" ry="5.1" fill="#cfe2b9" opacity="0.64" transform="rotate(-12 1166 17)"/><ellipse cx="1255" cy="43" rx="8.3" ry="4.0" fill="#cfe2b9" opacity="0.83" transform="rotate(-5 1255 43)"/><ellipse cx="1412" cy="26" rx="8.6" ry="5.0" fill="#cfe2b9" opacity="0.51" transform="rotate(32 1412 26)"/><ellipse cx="1592" cy="33" rx="8.7" ry="3.6" fill="#cfe2b9" opacity="0.82" transform="rotate(-21 1592 33)"/><ellipse cx="1199" cy="84" rx="4.5" ry="5.0" fill="#cfe2b9" opacity="0.59" transform="rotate(23 1199 84)"/><ellipse cx="1064" cy="17" rx="3.7" ry="5.4" fill="#cfe2b9" opacity="0.50" transform="rotate(5 1064 17)"/><ellipse cx="946" cy="61" rx="5.1" ry="2.0" fill="#cfe2b9" opacity="0.41" transform="rotate(26 946 61)"/><ellipse cx="1164" cy="26" rx="4.3" ry="2.7" fill="#cfe2b9" opacity="0.37" transform="rotate(13 1164 26)"/><ellipse cx="1582" cy="15" rx="7.2" ry="3.2" fill="#cfe2b9" opacity="0.83" transform="rotate(-23 1582 15)"/><ellipse cx="1717" cy="58" rx="5.4" ry="2.3" fill="#cfe2b9" opacity="0.70" transform="rotate(-19 1717 58)"/><ellipse cx="1669" cy="68" rx="4.1" ry="4.1" fill="#cfe2b9" opacity="0.46" transform="rotate(30 1669 68)"/><ellipse cx="1089" cy="90" rx="6.8" ry="3.9" fill="#cfe2b9" opacity="0.51" transform="rotate(-9 1089 90)"/><ellipse cx="1136" cy="77" rx="6.2" ry="3.1" fill="#cfe2b9" opacity="0.60" transform="rotate(-16 1136 77)"/><ellipse cx="901" cy="34" rx="3.3" ry="4.5" fill="#cfe2b9" opacity="0.49" transform="rotate(-8 901 34)"/><ellipse cx="1678" cy="91" rx="8.1" ry="2.3" fill="#cfe2b9" opacity="0.49" transform="rotate(-38 1678 91)"/><ellipse cx="1467" cy="77" rx="5.2" ry="4.2" fill="#cfe2b9" opacity="0.70" transform="rotate(-20 1467 77)"/><ellipse cx="1621" cy="39" rx="3.7" ry="2.2" fill="#cfe2b9" opacity="0.81" transform="rotate(19 1621 39)"/><ellipse cx="1497" cy="1" rx="3.6" ry="2.5" fill="#cfe2b9" opacity="0.50" transform="rotate(-10 1497 1)"/><ellipse cx="1501" cy="27" rx="6.9" ry="3.1" fill="#cfe2b9" opacity="0.35" transform="rotate(27 1501 27)"/><ellipse cx="1556" cy="31" rx="8.1" ry="4.0" fill="#cfe2b9" opacity="0.37" transform="rotate(-20 1556 31)"/><ellipse cx="943" cy="93" rx="8.4" ry="4.6" fill="#cfe2b9" opacity="0.39" transform="rotate(16 943 93)"/><ellipse cx="1231" cy="109" rx="7.3" ry="4.9" fill="#cfe2b9" opacity="0.66" transform="rotate(-4 1231 109)"/><ellipse cx="890" cy="81" rx="5.8" ry="5.2" fill="#cfe2b9" opacity="0.41" transform="rotate(21 890 81)"/><ellipse cx="1428" cy="62" rx="2.9" ry="3.1" fill="#cfe2b9" opacity="0.56" transform="rotate(-24 1428 62)"/><ellipse cx="1458" cy="25" rx="5.8" ry="3.4" fill="#cfe2b9" opacity="0.82" transform="rotate(-12 1458 25)"/><ellipse cx="1116" cy="104" rx="6.2" ry="3.0" fill="#cfe2b9" opacity="0.76" transform="rotate(4 1116 104)"/><ellipse cx="1541" cy="17" rx="6.4" ry="3.5" fill="#cfe2b9" opacity="0.73" transform="rotate(26 1541 17)"/><ellipse cx="946" cy="31" rx="3.8" ry="2.0" fill="#cfe2b9" opacity="0.49" transform="rotate(-24 946 31)"/><ellipse cx="1487" cy="51" rx="4.6" ry="3.5" fill="#cfe2b9" opacity="0.53" transform="rotate(-27 1487 51)"/><ellipse cx="1532" cy="6" rx="8.9" ry="3.9" fill="#cfe2b9" opacity="0.40" transform="rotate(-1 1532 6)"/><ellipse cx="1240" cy="19" rx="2.6" ry="5.2" fill="#cfe2b9" opacity="0.67" transform="rotate(10 1240 19)"/><ellipse cx="1702" cy="76" rx="4.1" ry="2.3" fill="#cfe2b9" opacity="0.36" transform="rotate(22 1702 76)"/><ellipse cx="1614" cy="32" rx="6.6" ry="4.9" fill="#cfe2b9" opacity="0.81" transform="rotate(-27 1614 32)"/><ellipse cx="1563" cy="97" rx="4.6" ry="2.5" fill="#cfe2b9" opacity="0.76" transform="rotate(-14 1563 97)"/><ellipse cx="1180" cy="63" rx="7.9" ry="2.7" fill="#cfe2b9" opacity="0.37" transform="rotate(5 1180 63)"/><ellipse cx="1419" cy="96" rx="8.4" ry="5.3" fill="#cfe2b9" opacity="0.60" transform="rotate(-0 1419 96)"/><ellipse cx="914" cy="80" rx="5.4" ry="5.4" fill="#cfe2b9" opacity="0.39" transform="rotate(-37 914 80)"/><ellipse cx="1566" cy="48" rx="6.8" ry="3.7" fill="#cfe2b9" opacity="0.56" transform="rotate(-13 1566 48)"/><ellipse cx="1673" cy="16" rx="5.4" ry="3.9" fill="#cfe2b9" opacity="0.52" transform="rotate(-24 1673 16)"/><ellipse cx="918" cy="35" rx="8.8" ry="5.2" fill="#cfe2b9" opacity="0.78" transform="rotate(38 918 35)"/><ellipse cx="1727" cy="72" rx="2.9" ry="4.3" fill="#cfe2b9" opacity="0.65" transform="rotate(-16 1727 72)"/><ellipse cx="1367" cy="112" rx="6.7" ry="2.9" fill="#cfe2b9" opacity="0.52" transform="rotate(31 1367 112)"/><ellipse cx="1252" cy="6" rx="4.9" ry="3.9" fill="#cfe2b9" opacity="0.56" transform="rotate(2 1252 6)"/><ellipse cx="1361" cy="44" rx="3.7" ry="5.1" fill="#cfe2b9" opacity="0.62" transform="rotate(-31 1361 44)"/><ellipse cx="1635" cy="27" rx="6.0" ry="2.7" fill="#cfe2b9" opacity="0.59" transform="rotate(4 1635 27)"/><ellipse cx="1049" cy="66" rx="5.8" ry="4.0" fill="#cfe2b9" opacity="0.39" transform="rotate(-7 1049 66)"/><ellipse cx="1348" cy="83" rx="3.2" ry="5.5" fill="#cfe2b9" opacity="0.71" transform="rotate(-32 1348 83)"/><ellipse cx="1605" cy="44" rx="8.7" ry="3.9" fill="#cfe2b9" opacity="0.74" transform="rotate(-29 1605 44)"/><ellipse cx="1556" cy="3" rx="4.9" ry="1.9" fill="#cfe2b9" opacity="0.65" transform="rotate(-23 1556 3)"/><ellipse cx="1117" cy="82" rx="8.3" ry="4.1" fill="#cfe2b9" opacity="0.79" transform="rotate(5 1117 82)"/><ellipse cx="1686" cy="102" rx="7.3" ry="3.1" fill="#cfe2b9" opacity="0.73" transform="rotate(14 1686 102)"/><ellipse cx="1601" cy="11" rx="7.3" ry="5.3" fill="#cfe2b9" opacity="0.71" transform="rotate(-37 1601 11)"/><ellipse cx="1397" cy="8" rx="7.7" ry="2.2" fill="#cfe2b9" opacity="0.81" transform="rotate(14 1397 8)"/><ellipse cx="1075" cy="20" rx="7.9" ry="4.0" fill="#cfe2b9" opacity="0.41" transform="rotate(-38 1075 20)"/><ellipse cx="942" cy="94" rx="6.1" ry="2.9" fill="#cfe2b9" opacity="0.69" transform="rotate(-10 942 94)"/><ellipse cx="973" cy="103" rx="7.0" ry="4.8" fill="#cfe2b9" opacity="0.82" transform="rotate(-39 973 103)"/><ellipse cx="1156" cy="14" rx="8.2" ry="4.8" fill="#cfe2b9" opacity="0.37" transform="rotate(-25 1156 14)"/><ellipse cx="1594" cy="79" rx="5.6" ry="2.4" fill="#cfe2b9" opacity="0.77" transform="rotate(-9 1594 79)"/><ellipse cx="1645" cy="71" rx="4.6" ry="2.6" fill="#cfe2b9" opacity="0.80" transform="rotate(7 1645 71)"/><ellipse cx="880" cy="17" rx="5.5" ry="3.9" fill="#cfe2b9" opacity="0.54" transform="rotate(-12 880 17)"/><ellipse cx="846" cy="67" rx="2.6" ry="3.5" fill="#cfe2b9" opacity="0.84" transform="rotate(-36 846 67)"/><ellipse cx="974" cy="78" rx="4.3" ry="3.7" fill="#cfe2b9" opacity="0.48" transform="rotate(6 974 78)"/><ellipse cx="1644" cy="90" rx="6.6" ry="3.1" fill="#cfe2b9" opacity="0.49" transform="rotate(24 1644 90)"/><ellipse cx="1645" cy="111" rx="4.5" ry="4.6" fill="#cfe2b9" opacity="0.72" transform="rotate(1 1645 111)"/><ellipse cx="1426" cy="39" rx="5.1" ry="2.0" fill="#cfe2b9" opacity="0.52" transform="rotate(-14 1426 39)"/><ellipse cx="1751" cy="55" rx="4.1" ry="2.7" fill="#cfe2b9" opacity="0.52" transform="rotate(-29 1751 55)"/><ellipse cx="847" cy="102" rx="5.4" ry="3.9" fill="#cfe2b9" opacity="0.50" transform="rotate(-26 847 102)"/><ellipse cx="901" cy="33" rx="7.2" ry="3.8" fill="#cfe2b9" opacity="0.82" transform="rotate(-13 901 33)"/><ellipse cx="1689" cy="67" rx="3.7" ry="3.9" fill="#cfe2b9" opacity="0.84" transform="rotate(-11 1689 67)"/><ellipse cx="1554" cy="48" rx="2.9" ry="3.6" fill="#cfe2b9" opacity="0.80" transform="rotate(-18 1554 48)"/><ellipse cx="1077" cy="-1" rx="4.2" ry="4.4" fill="#cfe2b9" opacity="0.46" transform="rotate(-8 1077 -1)"/><ellipse cx="1438" cy="20" rx="8.8" ry="4.0" fill="#cfe2b9" opacity="0.39" transform="rotate(25 1438 20)"/><ellipse cx="1647" cy="38" rx="3.7" ry="3.8" fill="#cfe2b9" opacity="0.79" transform="rotate(11 1647 38)"/><ellipse cx="1691" cy="22" rx="7.4" ry="4.2" fill="#cfe2b9" opacity="0.55" transform="rotate(14 1691 22)"/><ellipse cx="1151" cy="3" rx="2.8" ry="4.1" fill="#cfe2b9" opacity="0.52" transform="rotate(-0 1151 3)"/><ellipse cx="1391" cy="27" rx="2.6" ry="5.2" fill="#cfe2b9" opacity="0.63" transform="rotate(39 1391 27)"/><ellipse cx="1143" cy="7" rx="3.4" ry="4.6" fill="#cfe2b9" opacity="0.39" transform="rotate(25 1143 7)"/><ellipse cx="1230" cy="62" rx="6.1" ry="4.2" fill="#cfe2b9" opacity="0.65" transform="rotate(-14 1230 62)"/><ellipse cx="1523" cy="27" rx="7.5" ry="4.7" fill="#cfe2b9" opacity="0.50" transform="rotate(22 1523 27)"/><ellipse cx="1741" cy="51" rx="5.9" ry="5.3" fill="#cfe2b9" opacity="0.42" transform="rotate(-39 1741 51)"/><ellipse cx="1174" cy="117" rx="7.4" ry="2.1" fill="#cfe2b9" opacity="0.36" transform="rotate(-29 1174 117)"/><ellipse cx="1008" cy="111" rx="3.5" ry="2.5" fill="#cfe2b9" opacity="0.72" transform="rotate(34 1008 111)"/><ellipse cx="1064" cy="116" rx="6.6" ry="3.1" fill="#cfe2b9" opacity="0.75" transform="rotate(-3 1064 116)"/><ellipse cx="1139" cy="106" rx="7.3" ry="2.0" fill="#cfe2b9" opacity="0.67" transform="rotate(-8 1139 106)"/><ellipse cx="1637" cy="3" rx="5.2" ry="5.2" fill="#cfe2b9" opacity="0.82" transform="rotate(10 1637 3)"/><ellipse cx="1047" cy="27" rx="5.3" ry="2.7" fill="#cfe2b9" opacity="0.45" transform="rotate(21 1047 27)"/><ellipse cx="1040" cy="65" rx="8.1" ry="5.0" fill="#cfe2b9" opacity="0.48" transform="rotate(20 1040 65)"/><ellipse cx="1599" cy="30" rx="5.7" ry="5.1" fill="#cfe2b9" opacity="0.43" transform="rotate(15 1599 30)"/><ellipse cx="1391" cy="51" rx="8.2" ry="2.6" fill="#cfe2b9" opacity="0.79" transform="rotate(-11 1391 51)"/><ellipse cx="1559" cy="101" rx="8.1" ry="5.5" fill="#cfe2b9" opacity="0.50" transform="rotate(-38 1559 101)"/><ellipse cx="943" cy="115" rx="8.4" ry="2.4" fill="#cfe2b9" opacity="0.72" transform="rotate(-32 943 115)"/><ellipse cx="996" cy="79" rx="4.7" ry="5.2" fill="#cfe2b9" opacity="0.71" transform="rotate(31 996 79)"/><ellipse cx="1743" cy="0" rx="7.6" ry="4.4" fill="#cfe2b9" opacity="0.37" transform="rotate(0 1743 0)"/><ellipse cx="1054" cy="49" rx="2.6" ry="5.5" fill="#cfe2b9" opacity="0.51" transform="rotate(30 1054 49)"/><ellipse cx="951" cy="55" rx="5.3" ry="2.5" fill="#cfe2b9" opacity="0.69" transform="rotate(-28 951 55)"/><ellipse cx="1521" cy="57" rx="4.8" ry="3.6" fill="#cfe2b9" opacity="0.81" transform="rotate(-12 1521 57)"/><ellipse cx="1514" cy="29" rx="4.2" ry="2.1" fill="#cfe2b9" opacity="0.37" transform="rotate(1 1514 29)"/><ellipse cx="1216" cy="64" rx="2.6" ry="4.3" fill="#cfe2b9" opacity="0.68" transform="rotate(4 1216 64)"/><ellipse cx="1646" cy="84" rx="4.6" ry="3.4" fill="#cfe2b9" opacity="0.84" transform="rotate(-9 1646 84)"/><ellipse cx="1195" cy="46" rx="9.0" ry="1.8" fill="#cfe2b9" opacity="0.65" transform="rotate(34 1195 46)"/><ellipse cx="1075" cy="71" rx="4.1" ry="2.5" fill="#cfe2b9" opacity="0.41" transform="rotate(27 1075 71)"/><ellipse cx="1563" cy="107" rx="7.0" ry="3.0" fill="#cfe2b9" opacity="0.67" transform="rotate(4 1563 107)"/><ellipse cx="1131" cy="115" rx="7.4" ry="5.0" fill="#cfe2b9" opacity="0.61" transform="rotate(7 1131 115)"/><ellipse cx="1757" cy="25" rx="7.3" ry="3.2" fill="#cfe2b9" opacity="0.71" transform="rotate(-9 1757 25)"/><ellipse cx="1325" cy="71" rx="4.6" ry="4.1" fill="#cfe2b9" opacity="0.62" transform="rotate(-22 1325 71)"/><ellipse cx="1276" cy="84" rx="5.6" ry="2.6" fill="#cfe2b9" opacity="0.42" transform="rotate(34 1276 84)"/><ellipse cx="1328" cy="60" rx="7.8" ry="2.7" fill="#cfe2b9" opacity="0.44" transform="rotate(26 1328 60)"/><ellipse cx="1664" cy="102" rx="5.0" ry="4.9" fill="#cfe2b9" opacity="0.76" transform="rotate(-30 1664 102)"/><ellipse cx="982" cy="27" rx="4.8" ry="4.8" fill="#cfe2b9" opacity="0.61" transform="rotate(-4 982 27)"/><ellipse cx="1481" cy="51" rx="7.7" ry="4.6" fill="#cfe2b9" opacity="0.42" transform="rotate(14 1481 51)"/><ellipse cx="1178" cy="60" rx="4.9" ry="3.1" fill="#cfe2b9" opacity="0.54" transform="rotate(-39 1178 60)"/><ellipse cx="1025" cy="66" rx="3.7" ry="4.5" fill="#cfe2b9" opacity="0.49" transform="rotate(-14 1025 66)"/><ellipse cx="1063" cy="98" rx="6.6" ry="5.0" fill="#cfe2b9" opacity="0.45" transform="rotate(-6 1063 98)"/><ellipse cx="1571" cy="71" rx="2.8" ry="3.4" fill="#cfe2b9" opacity="0.53" transform="rotate(17 1571 71)"/><ellipse cx="1588" cy="39" rx="6.3" ry="5.2" fill="#cfe2b9" opacity="0.45" transform="rotate(38 1588 39)"/><ellipse cx="1496" cy="41" rx="4.6" ry="2.1" fill="#cfe2b9" opacity="0.73" transform="rotate(-10 1496 41)"/><ellipse cx="1538" cy="-1" rx="5.5" ry="3.5" fill="#cfe2b9" opacity="0.77" transform="rotate(-7 1538 -1)"/><ellipse cx="407" cy="102" rx="4.5" ry="2.7" fill="#dbe8c6" opacity="0.6"/><ellipse cx="440" cy="95" rx="5.5" ry="3.4" fill="#dbe8c6" opacity="0.6"/><ellipse cx="345" cy="5" rx="5.6" ry="2.9" fill="#dbe8c6" opacity="0.6"/><ellipse cx="662" cy="89" rx="3.0" ry="2.1" fill="#dbe8c6" opacity="0.6"/><ellipse cx="66" cy="94" rx="3.0" ry="1.7" fill="#dbe8c6" opacity="0.6"/><ellipse cx="648" cy="65" rx="2.7" ry="3.2" fill="#dbe8c6" opacity="0.6"/><ellipse cx="612" cy="56" rx="2.7" ry="3.2" fill="#dbe8c6" opacity="0.6"/><ellipse cx="359" cy="67" rx="7.0" ry="3.5" fill="#dbe8c6" opacity="0.6"/><ellipse cx="750" cy="17" rx="4.0" ry="2.8" fill="#dbe8c6" opacity="0.6"/><ellipse cx="5" cy="114" rx="3.7" ry="2.2" fill="#dbe8c6" opacity="0.6"/><ellipse cx="269" cy="29" rx="6.4" ry="2.9" fill="#dbe8c6" opacity="0.6"/><ellipse cx="439" cy="48" rx="2.7" ry="2.3" fill="#dbe8c6" opacity="0.6"/><ellipse cx="745" cy="92" rx="6.4" ry="2.1" fill="#dbe8c6" opacity="0.6"/><ellipse cx="174" cy="6" rx="4.9" ry="2.4" fill="#dbe8c6" opacity="0.6"/><ellipse cx="399" cy="56" rx="5.1" ry="2.4" fill="#dbe8c6" opacity="0.6"/><ellipse cx="689" cy="23" rx="6.6" ry="2.9" fill="#dbe8c6" opacity="0.6"/><ellipse cx="44" cy="36" rx="4.9" ry="2.5" fill="#dbe8c6" opacity="0.6"/><ellipse cx="486" cy="37" rx="3.7" ry="3.5" fill="#dbe8c6" opacity="0.6"/><ellipse cx="251" cy="82" rx="6.1" ry="3.0" fill="#dbe8c6" opacity="0.6"/><ellipse cx="391" cy="108" rx="4.5" ry="3.7" fill="#dbe8c6" opacity="0.6"/><ellipse cx="50" cy="50" rx="5.4" ry="1.6" fill="#dbe8c6" opacity="0.6"/><ellipse cx="742" cy="8" rx="5.2" ry="2.0" fill="#dbe8c6" opacity="0.6"/><ellipse cx="793" cy="65" rx="6.1" ry="2.7" fill="#dbe8c6" opacity="0.6"/><ellipse cx="580" cy="78" rx="3.8" ry="2.0" fill="#dbe8c6" opacity="0.6"/><ellipse cx="721" cy="17" rx="6.6" ry="2.0" fill="#dbe8c6" opacity="0.6"/><ellipse cx="87" cy="11" rx="6.0" ry="3.9" fill="#dbe8c6" opacity="0.6"/><ellipse cx="357" cy="76" rx="3.7" ry="3.8" fill="#dbe8c6" opacity="0.6"/><ellipse cx="590" cy="18" rx="2.8" ry="3.2" fill="#dbe8c6" opacity="0.6"/><ellipse cx="36" cy="96" rx="3.8" ry="2.1" fill="#dbe8c6" opacity="0.6"/><ellipse cx="501" cy="37" rx="5.0" ry="1.9" fill="#dbe8c6" opacity="0.6"/><ellipse cx="784" cy="37" rx="6.3" ry="1.9" fill="#dbe8c6" opacity="0.6"/><ellipse cx="687" cy="113" rx="4.3" ry="1.6" fill="#dbe8c6" opacity="0.6"/><ellipse cx="327" cy="74" rx="3.5" ry="2.9" fill="#dbe8c6" opacity="0.6"/><ellipse cx="80" cy="53" rx="5.8" ry="2.6" fill="#dbe8c6" opacity="0.6"/><ellipse cx="584" cy="13" rx="6.2" ry="1.8" fill="#dbe8c6" opacity="0.6"/><ellipse cx="794" cy="115" rx="6.7" ry="2.8" fill="#dbe8c6" opacity="0.6"/><ellipse cx="250" cy="40" rx="5.9" ry="2.7" fill="#dbe8c6" opacity="0.6"/><ellipse cx="800" cy="11" rx="4.7" ry="3.7" fill="#dbe8c6" opacity="0.6"/><ellipse cx="514" cy="62" rx="2.9" ry="1.8" fill="#dbe8c6" opacity="0.6"/><ellipse cx="233" cy="103" rx="6.3" ry="2.1" fill="#dbe8c6" opacity="0.6"/><ellipse cx="795" cy="4" rx="5.2" ry="3.9" fill="#dbe8c6" opacity="0.6"/><ellipse cx="296" cy="109" rx="5.5" ry="1.6" fill="#dbe8c6" opacity="0.6"/><ellipse cx="286" cy="52" rx="3.6" ry="3.4" fill="#dbe8c6" opacity="0.6"/><ellipse cx="154" cy="91" rx="3.8" ry="1.7" fill="#dbe8c6" opacity="0.6"/><ellipse cx="481" cy="11" rx="5.0" ry="3.5" fill="#dbe8c6" opacity="0.6"/><ellipse cx="512" cy="53" rx="2.7" ry="2.8" fill="#dbe8c6" opacity="0.6"/><ellipse cx="84" cy="74" rx="3.1" ry="2.9" fill="#dbe8c6" opacity="0.6"/><ellipse cx="303" cy="43" rx="5.5" ry="1.9" fill="#dbe8c6" opacity="0.6"/><ellipse cx="146" cy="108" rx="4.0" ry="3.6" fill="#dbe8c6" opacity="0.6"/><ellipse cx="751" cy="55" rx="3.2" ry="1.7" fill="#dbe8c6" opacity="0.6"/><ellipse cx="756" cy="13" rx="4.7" ry="2.8" fill="#dbe8c6" opacity="0.6"/><ellipse cx="101" cy="54" rx="3.2" ry="2.8" fill="#dbe8c6" opacity="0.6"/><ellipse cx="436" cy="42" rx="3.4" ry="2.5" fill="#dbe8c6" opacity="0.6"/><ellipse cx="175" cy="15" rx="3.6" ry="3.7" fill="#dbe8c6" opacity="0.6"/><ellipse cx="432" cy="102" rx="2.6" ry="3.9" fill="#dbe8c6" opacity="0.6"/><ellipse cx="420" cy="91" rx="5.1" ry="3.2" fill="#dbe8c6" opacity="0.6"/><ellipse cx="197" cy="86" rx="3.2" ry="2.2" fill="#dbe8c6" opacity="0.6"/><ellipse cx="27" cy="45" rx="4.8" ry="2.2" fill="#dbe8c6" opacity="0.6"/><ellipse cx="766" cy="10" rx="5.1" ry="2.1" fill="#dbe8c6" opacity="0.6"/><ellipse cx="512" cy="90" rx="5.7" ry="1.7" fill="#dbe8c6" opacity="0.6"/><ellipse cx="211" cy="69" rx="6.9" ry="1.6" fill="#dbe8c6" opacity="0.6"/><ellipse cx="532" cy="80" rx="6.2" ry="2.4" fill="#dbe8c6" opacity="0.6"/><ellipse cx="697" cy="53" rx="6.6" ry="1.5" fill="#dbe8c6" opacity="0.6"/><ellipse cx="809" cy="47" rx="4.3" ry="1.7" fill="#dbe8c6" opacity="0.6"/><ellipse cx="211" cy="84" rx="5.6" ry="1.9" fill="#dbe8c6" opacity="0.6"/><ellipse cx="296" cy="16" rx="3.4" ry="2.0" fill="#dbe8c6" opacity="0.6"/><ellipse cx="285" cy="112" rx="7.0" ry="3.5" fill="#dbe8c6" opacity="0.6"/><ellipse cx="413" cy="57" rx="6.0" ry="3.8" fill="#dbe8c6" opacity="0.6"/><ellipse cx="646" cy="73" rx="3.4" ry="3.1" fill="#dbe8c6" opacity="0.6"/><ellipse cx="727" cy="90" rx="2.9" ry="3.3" fill="#dbe8c6" opacity="0.6"/><ellipse cx="952" cy="78" rx="20" ry="8" fill="#b4d59b" opacity="0.9"/><ellipse cx="935" cy="86" rx="10" ry="5" fill="#b9d8a0" opacity="0.8"/><ellipse cx="1010" cy="80" rx="12" ry="6" fill="#c4dcab" opacity="0.7"/><ellipse cx="1058" cy="52" rx="14" ry="8" fill="#c9dfb0" opacity="0.7"/><ellipse cx="1100" cy="70" rx="12" ry="9" fill="#c9dfb0" opacity="0.7"/><ellipse cx="1130" cy="100" rx="14" ry="8" fill="#c4dcab" opacity="0.8"/><ellipse cx="1700" cy="70" rx="34" ry="22" fill="#cfe3b6" opacity="0.75"/><ellipse cx="1735" cy="30" rx="24" ry="18" fill="#cbe0b0" opacity="0.7"/><ellipse cx="1560" cy="18" rx="26" ry="14" fill="#c8dfae" opacity="0.75"/><ellipse cx="1600" cy="95" rx="30" ry="14" fill="#cfe3b6" opacity="0.7"/><ellipse cx="1660" cy="100" rx="30" ry="12" fill="#cde2b4" opacity="0.7"/><ellipse cx="1390" cy="20" rx="12" ry="6" fill="#c2dba8" opacity="0.8"/><ellipse cx="296" cy="45" rx="8" ry="13" fill="#d5e5bd" opacity="0.8"/><ellipse cx="292" cy="70" rx="8" ry="8" fill="#d9e7c3" opacity="0.7"/><ellipse cx="30" cy="70" rx="20" ry="8" fill="#e0e9c9" opacity="0.8"/><ellipse cx="15" cy="88" rx="12" ry="5" fill="#e0e9c9" opacity="0.8"/><ellipse cx="105" cy="25" rx="10" ry="5" fill="#e3ebcf" opacity="0.8"/><ellipse cx="1015" cy="40" rx="14" ry="8" fill="#d2e4bb" opacity="0.7"/><ellipse cx="870" cy="95" rx="16" ry="10" fill="#d3e5bd" opacity="0.75"/><ellipse cx="905" cy="75" rx="8" ry="14" fill="#cfe2b7" opacity="0.7"/></g>
<path d="M335,-4C336,-6 336,-10 339,-12M335,-4C335,0 340,1 340,5M335,-4C335,3 333,8 330,13M339,-12C346,-12 353,-9 359,-6M339,-12C340,-6 338,-0 340,5M339,-12C346,-8 345,2 352,6M359,-6C364,-6 366,-10 371,-10M359,-6C355,-3 355,3 352,6M371,-10C375,-9 378,-5 383,-7M371,-10C368,-5 368,1 365,5M383,-7C387,-8 392,-10 396,-11M396,-11C400,-11 403,-10 407,-9M396,-11C393,-8 396,-4 393,-1M407,-9C402,-8 400,-1 393,-1M407,-9C407,-4 407,0 404,5M407,-9C409,-5 414,-2 414,3M423,-3C423,1 427,3 427,7M423,-3C423,1 425,5 423,8M438,-8C441,-10 443,-10 446,-10M446,-10C450,-10 453,-10 455,-13M446,-10C445,-5 445,1 441,6M446,-10C451,-6 452,-0 452,6M455,-13C462,-14 467,-12 473,-10M473,-10C474,-5 470,-2 470,2M485,-4C480,-1 476,1 470,2M485,-4C484,-0 482,3 480,7M499,-7C498,-4 497,-1 495,2M523,-12C524,-8 523,-4 520,-1M523,-12C527,-7 531,-3 536,0M538,-3C542,-4 545,1 549,1M340,5C344,3 348,5 352,6M340,5C336,7 333,10 330,13M340,5C340,9 341,12 344,14M352,6C350,10 348,12 344,14M365,5C361,5 358,8 354,10M365,5C367,9 367,14 369,17M374,7C372,10 372,15 369,17M374,7C372,11 376,15 374,19M393,-1C397,1 401,2 404,5M393,-1C388,0 388,7 383,9M404,5C407,6 410,7 412,10M414,3C414,5 414,8 412,10M414,3C418,3 420,6 423,8M427,7C432,5 436,4 441,6M427,7C426,7 425,8 423,8M427,7C430,8 432,11 436,11M441,6C439,8 436,8 436,11M441,6C444,8 441,14 444,17M452,6C458,3 464,2 470,2M452,6C448,9 448,14 444,17M452,6C454,8 454,11 456,13M470,2C474,4 478,3 480,7M470,2C465,5 461,10 456,13M470,2C472,5 473,9 476,10M480,7C478,7 477,8 476,10M480,7C482,10 480,14 483,17M495,2C490,6 485,10 483,17M495,2C495,7 497,11 498,15M503,1C508,-2 514,-4 520,-1M503,1C504,5 506,8 507,11M520,-1C525,3 531,-1 536,0M520,-1C517,4 513,9 507,11M520,-1C521,4 519,10 522,15M536,0C540,3 544,1 549,1M536,0C530,4 527,10 522,15M536,0C538,6 534,12 534,17M536,0C537,6 542,10 546,15M562,4C559,11 552,12 546,15M562,4C563,10 560,15 558,20M330,13C335,14 340,16 344,14M330,13C330,16 333,18 332,21M344,14C347,11 351,10 354,10M344,14C346,17 350,17 353,20M344,14C341,20 343,26 344,33M354,10C358,14 365,14 369,17M369,17C365,20 369,26 365,29M383,9C387,13 395,10 398,15M398,15C398,17 397,19 397,22M398,15C404,18 408,24 416,26M412,10C416,7 420,9 423,8M423,8C421,13 426,17 424,22M436,11C438,14 440,16 444,17M436,11C430,12 430,20 424,22M436,11C438,15 437,19 436,23M444,17C447,13 452,14 456,13M444,17C442,19 438,20 436,23M444,17C448,20 452,23 456,26M444,17C441,23 447,28 445,35M456,13C463,12 470,10 476,10M456,13C461,17 466,21 470,26M476,10C477,14 480,15 483,17M483,17C488,17 493,13 498,15M483,17C481,22 474,22 470,26M498,15C501,13 504,12 507,11M498,15C496,17 495,19 492,20M498,15C500,18 503,21 507,21M507,11C511,15 510,20 515,23M522,15C519,17 516,19 515,23M522,15C522,21 526,25 527,31M534,17C534,18 535,19 535,20M534,17C532,22 527,25 527,31M546,15C546,17 544,20 545,22M353,20C355,22 357,23 359,25M359,25C356,28 353,30 351,34M374,19C381,22 387,18 393,20M374,19C371,22 368,25 365,29M374,19C375,23 374,27 377,30M393,20C386,20 382,26 377,30M393,20C392,25 390,30 391,35M397,22C402,27 401,33 402,40M416,26C419,26 421,22 424,22M416,26C412,29 412,35 408,38M416,26C421,29 421,36 424,40M424,22C428,24 432,22 436,23M424,22C428,27 428,33 425,38M424,22C425,26 431,28 431,33M436,23C434,26 431,29 431,33M456,26C459,29 459,33 461,37M470,26C475,24 479,27 483,25M470,26C466,28 464,33 461,37M470,26C472,28 473,30 475,31M483,25C487,25 490,24 492,20M483,25C481,28 477,28 475,31M483,25C487,27 491,26 494,29M492,20C493,23 495,26 494,29M507,21C510,22 512,22 515,23M507,21C504,26 498,25 494,29M515,23C518,27 524,26 527,31M535,20C538,21 543,19 545,22M535,20C531,22 531,28 527,31M535,20C535,23 533,27 534,30M545,22C550,23 553,19 558,20M545,22C542,25 539,30 534,30M558,20C553,22 550,26 548,31M335,31C338,30 341,32 344,33M335,31C334,36 336,40 337,44M344,33C347,32 349,35 351,34M344,33C342,37 341,41 337,44M344,33C345,37 348,41 348,45M351,34C356,32 361,33 365,29M351,34C351,38 348,41 348,45M377,30C381,34 387,31 391,35M377,30C381,35 377,41 380,46M377,30C378,37 381,42 388,44M391,35C395,36 398,40 402,40M408,38C410,40 413,41 414,44M408,38C413,40 419,41 424,40M425,38C425,39 424,39 424,40M431,33C436,32 440,31 445,35M445,35C443,37 442,40 443,43M445,35C446,40 453,42 454,48M461,37C466,35 471,35 475,31M461,37C461,42 454,43 454,48M461,37C463,39 466,39 468,42M475,31C479,30 482,32 485,34M475,31C473,35 469,38 468,42M485,34C489,34 491,31 494,29M485,34C486,37 483,40 484,43M485,34C490,38 497,38 502,42M494,29C500,31 506,27 511,30M494,29C496,34 497,39 502,42M511,30C516,33 522,32 527,31M511,30C507,33 504,37 502,42M527,31C529,30 532,31 534,30M527,31C526,36 524,41 522,46M527,31C529,35 528,39 527,44M534,30C539,31 544,32 548,31M534,30C531,35 530,40 527,44M534,30C539,33 538,41 544,44M337,44C341,43 344,43 348,45M337,44C333,47 331,52 326,52M337,44C337,49 338,54 342,59M348,45C352,44 355,49 360,48M348,45C347,50 346,55 342,59M348,45C350,49 352,53 352,57M360,48C366,48 374,50 380,46M360,48C357,51 354,54 352,57M380,46C379,49 381,51 381,54M388,44C393,43 398,42 402,40M388,44C387,49 385,52 381,54M402,40C405,43 402,47 404,51M414,44C417,43 421,42 424,40M414,44C411,48 407,47 404,51M424,40C418,44 416,51 417,58M424,40C425,48 435,51 435,59M443,43C446,46 451,45 454,48M443,43C439,47 437,53 435,59M443,43C444,46 449,46 449,50M454,48C459,49 463,44 468,42M454,48C452,48 450,49 449,50M468,42C463,46 464,52 462,57M468,42C471,45 474,49 475,54M484,43C485,44 487,45 488,46M484,43C483,47 486,50 485,54M488,46C492,43 498,46 502,42M488,46C493,46 498,47 502,52M502,42C508,48 515,44 522,46M522,46C523,45 525,44 527,44M522,46C519,49 515,51 512,54M522,46C523,50 528,53 529,57M527,44C526,49 529,53 529,57M544,44C546,49 544,53 542,58M326,52C330,58 335,59 342,59M326,52C329,56 335,57 336,62M342,59C345,63 344,67 344,72M352,57C357,57 362,58 366,55M352,57C356,61 361,64 367,66M366,55C371,53 376,57 381,54M381,54C386,50 392,52 398,53M381,54C381,57 380,59 379,61M398,53C400,54 401,50 404,51M398,53C401,57 407,57 410,61M417,58C423,55 429,61 435,59M417,58C415,60 412,60 410,61M417,58C423,60 428,64 431,70M417,58C417,64 420,69 423,75M435,59C433,62 431,65 431,70M449,50C448,54 446,59 442,61M449,50C449,54 450,58 451,62M462,57C467,59 471,56 475,54M462,57C463,61 468,62 468,67M475,54C478,55 481,53 485,54M475,54C477,58 477,62 479,65M485,54C490,51 496,50 502,52M485,54C482,57 481,62 479,65M485,54C487,57 488,61 489,65M502,52C505,53 509,53 512,54M502,52C500,59 491,58 489,65M502,52C507,56 509,62 510,67M529,57C534,59 538,55 542,58M529,57C526,62 519,62 515,65M529,57C531,59 531,62 534,62M542,58C543,61 545,63 548,64M549,52C551,57 556,60 560,64M336,62C337,68 334,73 335,78M349,67C351,69 354,68 355,71M367,66C364,70 360,71 355,71M379,61C381,64 384,67 387,70M387,70C391,70 391,74 395,74M387,70C386,76 387,81 391,86M398,64C402,61 406,61 410,61M410,61C414,66 416,72 423,75M431,70C435,67 437,63 442,61M431,70C434,71 436,73 439,74M431,70C428,74 429,79 427,83M442,61C445,62 448,63 451,62M451,62C450,67 448,72 449,77M451,62C454,68 459,73 463,79M468,67C471,64 475,65 479,65M489,65C486,69 484,72 485,77M510,67C512,67 513,66 515,65M510,67C507,70 505,73 504,77M510,67C509,70 510,73 507,75M515,65C521,67 528,67 534,62M515,65C511,67 511,73 507,75M515,65C520,69 525,72 527,79M515,65C515,71 513,78 517,83M534,62C539,62 544,61 548,64M534,62C533,69 527,73 527,79M548,64C552,64 556,64 560,64M548,64C543,67 540,72 539,78M548,64C548,70 547,74 546,80M335,78C338,76 342,75 344,72M335,78C337,80 337,84 339,87M335,78C334,84 336,90 333,95M344,72C348,70 352,72 355,71M344,72C341,76 340,81 339,87M344,72C343,80 350,84 354,89M355,71C357,77 353,83 354,89M370,79C365,81 364,87 359,89M370,79C373,79 376,80 378,83M379,75C378,78 378,80 378,83M379,75C383,79 388,82 391,86M395,74C400,74 406,76 410,80M395,74C395,79 396,84 398,89M410,80C415,80 418,75 423,75M410,80C405,81 401,84 398,89M423,75C425,78 425,81 427,83M439,74C434,75 429,78 427,83M439,74C442,77 442,81 441,85M449,77C445,78 445,84 441,85M449,77C453,80 458,78 462,81M463,79C465,79 468,76 470,76M470,76C468,78 465,79 462,81M470,76C472,82 475,87 477,92M485,77C491,77 497,76 504,77M485,77C484,81 479,84 479,89M485,77C490,79 492,84 494,88M504,77C505,80 505,84 505,87M507,75C509,79 512,82 517,83M527,79C531,79 535,79 539,78M527,79C526,84 531,87 528,92M539,78C537,81 534,79 532,81M339,87C344,86 348,90 354,89M339,87C341,90 344,94 345,99M354,89C355,90 357,88 359,89M354,89C352,94 346,95 345,99M354,89C355,91 357,92 360,92M359,89C360,90 360,91 360,92M359,89C362,90 364,92 366,95M378,83C382,87 386,88 391,86M378,83C380,86 383,90 382,94M391,86C394,86 396,88 398,89M391,86C390,90 389,93 390,97M398,89C397,92 392,92 390,97M398,89C404,89 407,94 413,95M411,87C412,89 413,92 413,95M411,87C415,88 416,94 421,95M427,83C427,88 425,92 421,95M441,85C444,88 448,87 451,90M441,85C436,89 439,96 433,100M441,85C442,89 445,93 445,97M451,90C454,91 457,94 460,96M462,81C461,86 459,91 460,96M462,81C465,87 472,88 477,92M479,89C484,88 489,89 494,88M479,89C478,90 478,91 477,92M479,89C483,90 487,91 489,94M494,88C498,89 502,88 505,87M494,88C495,92 497,96 500,99M505,87C502,90 500,94 500,99M505,87C508,90 511,93 514,95M532,81C530,84 531,89 528,92M540,88C545,85 550,88 554,88M540,88C542,94 549,94 551,99M554,88C553,92 553,96 551,99M554,88C554,95 553,103 557,110M333,95C335,100 337,104 339,108M345,99C343,102 340,104 339,108M345,99C345,101 347,102 348,104M360,92C361,94 364,94 366,95M360,92C358,98 354,102 348,104M360,92C362,96 360,100 362,104M366,95C371,94 376,94 382,94M382,94C382,101 376,105 373,111M382,94C381,99 386,104 385,110M390,97C394,98 398,101 400,105M413,95C408,98 403,100 400,105M413,95C412,97 413,100 413,102M421,95C425,98 430,97 433,100M421,95C419,98 417,101 413,102M421,95C425,96 425,100 427,103M433,100C430,104 436,109 433,114M445,97C450,97 455,98 460,96M445,97C445,101 442,102 440,104M445,97C450,101 452,108 457,111M460,96C459,101 457,106 457,111M489,94C492,97 496,98 500,99M489,94C487,97 484,101 484,105M500,99C505,99 509,96 514,95M514,95C518,92 524,96 528,92M514,95C512,101 509,106 502,108M514,95C515,98 515,102 517,105M528,92C532,92 535,95 539,95M528,92C525,97 523,102 517,105M539,95C544,95 548,96 551,99M539,95C537,97 538,102 534,104M539,95C544,98 547,102 548,108M339,108C342,106 344,103 348,104M339,108C342,111 343,115 347,117M348,104C352,105 357,103 362,104M348,104C348,108 346,112 347,117M362,104C367,104 369,110 373,111M362,104C358,109 352,113 347,117M362,104C359,109 362,116 358,121M362,104C364,109 368,114 371,119M373,111C377,112 381,112 385,110M373,111C379,112 382,118 386,121M385,110C385,113 386,117 386,121M385,110C388,114 394,116 398,122M400,105C405,108 407,113 406,118M413,102C413,109 411,114 406,118M427,103C423,106 425,112 423,115M440,104C445,108 453,106 457,111M440,104C439,109 437,112 433,114M440,104C441,111 450,109 452,115M457,111C456,113 454,115 452,115M457,111C460,114 459,117 460,121M466,108C471,104 478,109 484,105M466,108C462,111 463,117 460,121M484,105C482,107 483,110 482,112M489,104C492,108 498,106 502,108M489,104C494,106 494,112 498,115M502,108C508,108 513,107 517,105M502,108C500,110 499,113 498,115M502,108C507,113 512,116 516,121M517,105C523,102 529,102 534,104M517,105C516,110 520,116 516,121M517,105C521,108 522,114 528,116M534,104C539,105 543,108 548,108M534,104C530,107 531,113 528,116M534,104C537,107 538,110 538,114M548,108C550,109 553,110 557,110M548,108C551,109 551,114 554,116M328,121C334,117 341,118 347,117M371,119C377,117 381,120 386,121M386,121C390,119 393,123 398,122M398,122C401,121 404,121 406,118M406,118C412,119 417,118 423,115M423,115C426,116 429,113 433,114M460,121C463,122 467,120 470,121M470,121C473,117 479,116 482,112M482,112C488,112 492,114 498,115M538,114C544,112 549,115 554,116" fill="none" stroke="#f0a8a0" stroke-width="0.65" opacity="0.62"/><path d="M211,-7C217,-2 223,4 230,8M211,-7C211,1 210,9 212,17M233,-6C241,-10 250,-10 257,-15M233,-6C233,-1 228,2 230,8M233,-6C238,-3 244,-3 247,3M257,-15C260,-10 267,-9 268,-3M257,-15C268,-12 280,-20 291,-12M268,-3C276,-4 283,-11 291,-12M268,-3C276,-1 278,8 285,12M291,-12C290,-4 286,4 285,12M291,-12C298,-9 303,-4 308,1M323,-8C317,-6 313,-1 308,1M323,-8C323,-2 331,2 329,9M230,8C236,8 241,3 247,3M230,8C223,8 219,16 212,17M230,8C234,13 236,19 241,24M230,8C232,16 232,25 231,34M247,3C242,9 246,18 241,24M267,14C273,14 280,15 285,12M267,14C259,20 251,25 241,24M267,14C266,20 259,23 258,30M285,12C292,6 302,8 308,1M308,1C316,1 323,5 329,9M308,1C312,11 313,21 314,31M329,9C325,17 315,21 314,31M329,9C334,21 319,29 323,41M212,17C215,26 221,32 231,34M241,24C241,28 241,32 239,36M258,30C265,26 272,31 278,30M258,30C251,29 247,37 239,36M293,29C301,25 307,32 314,31M293,29C292,32 288,34 287,37M293,29C298,31 299,37 305,38M314,31C312,34 309,37 305,38M231,34C233,36 237,35 239,36M231,34C226,43 217,51 216,62M231,34C229,44 230,54 238,63M272,39C277,39 282,40 287,37M272,39C271,48 267,57 260,63M272,39C274,43 276,47 278,51M287,37C287,43 283,48 278,51M287,37C296,43 291,57 300,63M305,38C304,47 304,55 300,63M305,38C312,43 315,52 321,57M323,41C323,47 324,52 321,57M323,41C327,50 323,58 324,67M216,62C221,62 225,64 228,68M216,62C213,72 210,82 212,92M238,63C245,66 253,64 260,63M238,63C235,65 231,66 228,68M238,63C237,69 240,75 241,81M260,63C266,60 273,57 278,51M260,63C257,67 254,70 250,73M278,51C270,53 265,59 262,65M278,51C282,60 291,68 290,79M228,68C235,70 236,77 241,81M228,68C231,79 221,87 222,98M250,73C253,68 256,66 262,65M250,73C254,74 253,79 257,81M262,65C269,74 280,77 290,79M290,79C294,80 295,76 299,77M290,79C292,86 300,88 301,95M299,77C301,83 300,89 301,95M324,67C325,78 321,87 315,96M241,81C246,80 251,80 257,81M241,81C235,87 231,95 222,98M241,81C239,88 245,91 247,97M257,81C252,85 248,90 247,97M278,85C272,91 265,96 260,103M301,95C306,93 310,97 315,96M301,95C300,100 298,105 298,110M315,96C311,102 306,107 298,110M315,96C319,100 322,105 322,111M260,103C270,105 278,101 287,99M287,99C293,100 294,106 298,110M298,110C306,107 314,109 322,111" fill="none" stroke="#f0b4a8" stroke-width="0.7" opacity="0.6"/><path d="M-15,-15C-6,-16 3,-20 12,-14M-15,-15C-11,-4 -3,2 7,6M-15,-15C-4,-2 -6,12 -9,27M12,-14C19,-15 23,-8 30,-10M30,-10C42,1 57,-7 70,-3M70,-3C75,-10 82,-12 91,-13M91,-13C103,-11 116,-10 128,-15M111,-12C117,-12 122,-13 128,-15M111,-12C102,-5 98,3 100,14M111,-12C111,-4 115,2 122,5M128,-15C130,-5 138,-1 146,4M153,-0C164,-6 176,0 188,-2M153,-0C150,0 147,1 146,4M153,-0C165,0 166,17 178,18M153,-0C146,10 156,22 150,33M7,6C0,11 -2,21 -9,27M23,14C22,20 26,26 21,32M23,14C29,22 38,29 45,37M54,18C54,25 49,31 45,37M81,4C90,3 92,14 100,14M81,4C83,12 87,20 88,29M100,14C98,21 92,24 88,29M122,5C130,1 138,5 146,4M122,5C128,10 131,19 140,22M146,4C142,14 152,22 150,33M178,18C166,19 160,29 150,33M-9,27C0,33 12,26 21,32M-9,27C-6,33 -1,39 1,47M-9,27C-16,42 -11,57 -5,71M21,32C30,31 37,36 45,37M21,32C13,35 8,42 1,47M21,32C27,34 29,42 35,44M45,37C52,36 58,35 62,29M62,29C71,27 79,34 88,29M62,29C55,31 54,40 48,44M88,29C84,35 83,42 76,46M104,27C116,28 127,18 140,22M104,27C105,37 94,44 95,54M104,27C105,37 115,42 119,51M140,22C144,25 146,30 150,33M140,22C134,33 120,37 119,51M150,33C159,34 168,29 178,31M150,33C143,45 133,51 119,51M1,47C-2,55 -3,63 -5,71M1,47C0,55 4,60 9,66M35,44C25,50 16,56 9,66M48,44C58,49 67,43 76,46M48,44C49,54 47,64 54,72M76,46C72,57 63,65 54,72M95,54C103,61 105,72 114,77M119,51C130,47 140,38 153,42M119,51C117,59 114,68 114,77M119,51C122,55 120,61 125,65M153,42C148,55 130,52 125,65M162,45C171,54 180,63 180,77M-5,71C-1,67 5,70 9,66M9,66C17,64 25,65 32,68M9,66C11,73 17,78 22,82M32,68C38,74 47,69 54,72M32,68C31,74 28,79 22,82M32,68C39,71 46,74 49,81M54,72C66,83 80,72 93,77M114,77C114,79 113,80 114,82M125,65C139,68 154,65 166,74M125,65C138,67 146,75 151,85M166,74C162,78 155,80 151,85M180,77C176,79 171,80 166,81M180,77C179,89 194,95 191,107M4,94C4,99 -1,101 -1,106M22,82C31,83 40,81 49,81M22,82C22,90 23,97 30,101M72,96C82,94 90,88 95,79M72,96C70,99 67,99 65,101M95,79C101,81 107,84 114,82M95,79C95,92 82,97 78,107M95,79C93,93 99,105 105,116M114,82C126,90 138,86 151,85M114,82C106,92 102,103 105,116M166,81C165,89 159,97 163,106M166,81C179,85 180,100 191,107M-1,106C2,104 6,102 9,99M-1,106C9,100 19,97 30,101M30,101C42,108 53,106 65,101M65,101C68,105 73,106 78,107M105,116C114,116 118,106 127,108M127,108C139,113 151,110 163,106" fill="none" stroke="#f2b9a8" stroke-width="0.7" opacity="0.6"/><path d="M586,-6C586,-3 588,-1 590,1M601,-4C605,-4 609,-6 613,-4M601,-4C598,-0 594,1 590,1M601,-4C603,-1 604,1 608,2M601,-4C599,2 603,7 603,13M619,-8C618,-5 616,-1 616,2M619,-8C624,-7 629,-5 633,-2M641,-7C645,-9 649,-11 654,-12M641,-7C638,-6 636,-3 633,-2M654,-12C652,-9 649,-6 648,-2M663,-11C668,-11 672,-11 676,-7M663,-11C670,-12 677,-10 684,-11M663,-11C660,-5 666,-0 665,5M676,-7C671,-4 668,0 665,5M700,-4C705,-9 712,-9 718,-11M700,-4C699,1 703,3 705,7M700,-4C708,-5 713,1 719,5M718,-11C722,-11 727,-9 731,-12M731,-12C735,-12 738,-14 742,-12M731,-12C732,-5 737,0 739,7M742,-12C750,-13 757,-13 764,-11M742,-12C743,-7 743,-3 746,1M749,-4C753,-9 759,-8 764,-11M764,-11C765,-5 761,-0 761,5M785,-4C787,-5 789,-5 791,-3M785,-4C792,-4 799,-9 806,-6M785,-4C779,-2 774,1 770,5M791,-3C790,-0 789,3 789,6M806,-6C809,-4 813,-4 816,-4M806,-6C801,-3 797,1 795,7M806,-6C808,-4 809,-2 808,1M816,-4C822,-7 828,-6 834,-3M816,-4C813,-3 811,-1 808,1M857,-11C860,-14 864,-14 867,-12M857,-11C856,-7 854,-3 852,1M867,-12C866,-9 865,-4 863,-1M867,-12C869,-8 872,-5 873,-1M882,-7C878,-7 875,-5 873,-1M882,-7C884,-1 888,4 892,7M892,-6C894,-2 892,3 892,7M892,-6C892,2 893,9 900,15M590,1C588,4 584,6 582,8M608,2C607,6 605,10 603,13M616,2C620,-3 627,-1 633,-2M616,2C613,4 613,9 610,10M616,2C621,5 622,11 625,16M633,-2C631,4 624,9 625,16M633,-2C635,2 633,8 637,12M648,-2C651,2 656,2 659,6M648,-2C646,4 641,7 637,12M648,-2C647,4 650,11 646,17M659,6C661,7 663,5 665,5M659,6C657,12 651,15 646,17M665,5C664,9 661,11 658,13M665,5C664,11 661,18 665,24M681,3C687,6 686,14 691,17M691,-2C694,3 699,6 705,7M705,7C710,9 714,7 719,5M705,7C704,10 704,13 703,16M719,5C716,8 714,10 711,12M719,5C722,8 722,13 725,16M739,7C740,4 743,3 746,1M739,7C735,11 728,11 725,16M746,1C752,-1 755,6 761,5M746,1C753,4 756,10 759,16M761,5C765,6 768,10 772,12M770,5C776,7 783,4 789,6M770,5C773,8 774,14 780,15M789,6C788,11 782,11 780,15M789,6C791,7 792,9 793,11M795,7C801,8 803,1 808,1M795,7C795,8 793,9 793,11M808,1C815,3 820,6 827,7M808,1C806,3 806,7 805,9M808,1C811,7 813,13 818,18M827,7C830,7 833,4 837,7M827,7C824,11 823,16 818,18M827,7C830,9 833,12 837,14M837,7C842,5 848,4 852,1M852,1C851,5 845,6 845,11M852,1C853,4 852,7 854,11M863,-1C866,-1 870,1 873,-1M863,-1C860,3 855,6 854,11M863,-1C868,4 870,11 874,16M873,-1C881,-1 886,4 892,7M873,-1C877,5 875,11 874,16M873,-1C873,6 881,9 883,16M892,7C888,9 885,12 883,16M892,7C894,11 897,13 900,15M582,8C588,11 596,9 603,13M582,8C583,16 590,20 593,26M603,13C605,11 607,10 610,10M603,13C606,17 605,21 603,25M610,10C614,15 621,11 625,16M610,10C614,14 612,19 615,23M625,16C629,15 632,12 637,12M625,16C629,17 630,23 633,25M625,16C628,20 625,25 625,29M646,17C641,19 636,20 633,25M646,17C643,20 644,24 641,28M646,17C651,17 653,23 658,24M646,17C643,21 646,26 646,30M658,13C660,17 659,20 658,24M679,9C685,10 688,14 691,17M679,9C675,14 669,18 665,24M691,17C695,15 699,16 703,16M691,17C692,20 692,24 695,26M703,16C706,14 708,13 711,12M703,16C699,18 698,23 695,26M711,12C715,15 719,17 725,16M711,12C713,17 712,22 710,26M711,12C712,18 718,20 720,25M739,12C745,16 753,14 759,16M739,12C737,17 735,21 737,26M739,12C744,16 741,23 746,27M759,16C763,16 768,15 772,12M759,16C755,20 751,24 746,27M759,16C762,18 762,23 764,25M772,12C774,15 778,13 780,15M772,12C771,18 764,19 764,25M780,15C782,20 779,24 778,28M780,15C784,16 784,21 787,23M793,11C797,8 801,10 805,9M805,9C811,10 813,16 818,18M805,9C802,15 802,22 796,27M818,18C818,19 818,21 817,23M818,18C819,22 824,22 827,25M837,14C839,13 843,14 845,11M837,14C833,17 828,20 827,25M837,14C837,17 839,18 841,20M845,11C848,9 851,12 854,11M845,11C844,14 841,16 841,20M845,11C848,15 852,19 854,24M854,11C854,15 853,20 854,24M854,11C860,13 864,17 866,22M874,16C873,21 879,22 879,26M883,16C888,12 894,15 900,15M883,16C880,18 882,23 879,26M900,15C897,18 896,23 892,25M900,15C903,19 899,24 901,29M593,26C597,27 600,25 603,25M593,26C589,26 585,29 580,30M603,25C602,29 598,31 597,35M603,25C605,28 607,32 608,35M615,23C618,26 621,28 625,29M633,25C630,25 628,28 625,29M641,28C642,29 644,30 646,30M658,24C660,25 662,24 665,24M658,24C658,27 661,28 661,30M665,24C670,21 675,26 680,25M680,25C685,26 690,26 695,26M680,25C678,27 674,26 673,29M695,26C700,28 705,27 710,26M695,26C693,28 692,31 689,32M695,26C700,27 700,32 703,34M710,26C713,27 717,25 720,25M710,26C708,30 705,31 703,34M710,26C710,30 710,34 712,38M710,26C714,29 720,28 723,33M720,25C725,28 732,23 737,26M720,25C723,27 721,30 723,33M737,26C740,26 743,26 746,27M737,26C737,29 739,30 739,33M764,25C758,28 753,31 750,37M764,25C766,26 765,28 766,29M778,28C774,31 770,29 766,29M778,28C779,28 780,28 781,30M778,28C782,35 778,41 776,47M787,23C790,25 793,25 796,27M787,23C784,24 782,27 781,30M796,27C803,24 810,24 817,23M796,27C796,29 794,30 793,32M841,20C838,25 836,30 835,35M854,24C852,27 848,29 844,30M854,24C855,28 856,31 859,34M866,22C870,24 874,27 879,26M866,22C866,28 861,30 859,34M866,22C872,26 874,32 876,38M879,26C883,24 887,25 892,25M879,26C880,31 876,34 876,38M892,25C894,28 898,26 901,29M892,25C896,31 896,36 893,42M580,30C585,34 592,33 597,35M580,30C578,39 583,46 585,53M597,35C601,37 605,34 608,35M597,35C593,37 593,43 588,45M597,35C601,36 603,39 606,40M608,35C613,30 620,33 625,29M608,35C608,37 606,38 606,40M625,29C629,31 633,28 637,31M625,29C627,37 620,41 619,48M637,31C634,35 632,39 629,43M637,31C640,34 641,38 641,42M646,30C651,27 656,31 661,30M646,30C645,34 645,39 641,42M646,30C648,37 657,37 661,43M661,30C665,29 669,32 673,29M661,30C662,35 663,39 661,43M673,29C671,36 663,36 661,43M673,29C672,35 674,42 674,48M689,32C694,31 698,32 703,34M689,32C686,35 685,39 683,42M689,32C692,36 695,42 700,44M703,34C706,35 709,37 712,38M703,34C703,38 702,41 700,44M703,34C705,37 705,40 708,42M712,38C716,35 720,35 723,33M712,38C711,40 709,41 708,42M723,33C728,30 734,34 739,33M723,33C728,35 729,41 732,44M739,33C742,35 747,33 750,37M739,33C738,37 735,41 732,44M750,37C757,37 762,34 766,29M750,37C747,39 747,43 744,45M750,37C754,38 756,41 760,42M766,29C762,32 763,38 760,42M781,30C779,35 778,40 782,44M793,32C797,36 802,37 807,38M793,32C791,37 787,42 782,44M793,32C792,38 797,43 797,48M807,38C812,37 817,34 822,33M807,38C804,42 801,46 797,48M807,38C809,40 812,41 815,41M807,38C808,42 809,47 810,51M822,33C826,36 831,36 835,35M822,33C820,36 817,38 815,41M822,33C821,36 824,38 823,41M835,35C837,32 841,32 844,30M835,35C832,38 826,36 823,41M835,35C834,41 837,47 832,53M844,30C849,29 853,36 859,34M844,30C845,34 846,38 843,42M844,30C844,37 848,40 853,44M876,38C878,35 881,33 885,32M876,38C873,42 868,42 866,45M876,38C877,38 879,39 880,40M588,45C593,42 600,42 606,40M588,45C589,48 587,50 585,53M588,45C592,47 595,50 596,55M606,40C610,42 613,48 619,48M606,40C600,44 598,49 596,55M606,40C608,44 610,49 611,53M619,48C623,47 626,46 629,43M619,48C622,49 625,51 626,55M619,48C621,52 623,57 621,62M629,43C633,41 637,41 641,42M629,43C631,46 630,49 632,52M641,42C647,46 655,39 661,43M641,42C637,45 634,48 632,52M641,42C641,49 646,53 650,59M661,43C659,50 654,53 650,59M661,43C665,46 664,51 667,55M674,48C677,46 680,44 683,42M674,48C673,51 672,54 671,57M674,48C678,52 679,57 682,61M683,42C689,43 695,40 700,44M683,42C685,46 688,50 688,55M700,44C703,45 705,41 708,42M700,44C697,49 695,54 688,55M700,44C703,47 703,52 704,56M708,42C714,42 720,45 726,44M708,42C712,47 714,52 715,58M726,44C724,50 719,54 715,58M726,44C728,47 726,50 727,53M732,44C730,47 728,49 727,53M744,45C749,41 755,43 760,42M760,42C765,45 771,45 776,47M760,42C754,44 749,47 744,51M776,47C778,50 780,52 782,54M776,47C774,53 777,59 774,65M782,44C787,46 792,48 797,48M797,48C791,47 787,52 782,54M797,48C793,50 794,55 791,57M797,48C799,56 804,61 809,66M815,41C818,42 821,42 823,41M815,41C814,45 811,47 810,51M843,42C840,46 834,47 832,53M853,44C848,46 845,51 842,55M880,40C876,46 871,51 868,58M880,40C885,44 881,52 887,56M880,40C879,47 883,55 878,61M893,42C888,46 890,52 887,56M893,42C891,47 894,52 892,57M585,53C583,60 587,66 587,72M596,55C601,53 606,53 611,53M596,55C599,60 598,65 596,70M596,55C599,58 602,61 606,60M596,55C595,61 592,67 587,72M611,53C616,54 617,59 621,62M626,55C628,53 631,54 632,52M626,55C625,58 622,59 621,62M626,55C626,61 631,64 632,69M632,52C629,58 633,64 632,69M632,52C638,54 639,61 646,61M650,59C656,60 661,63 666,66M671,57C668,59 668,63 666,66M671,57C675,57 678,60 682,61M688,55C686,57 684,60 682,61M704,56C708,56 711,59 715,58M704,56C702,57 700,60 697,60M704,56C703,58 704,61 705,64M715,58C719,58 723,56 727,53M715,58C712,61 709,63 705,64M715,58C716,59 717,60 717,60M715,58C713,63 714,67 712,71M727,53C733,51 739,52 744,51M727,53C723,54 721,58 717,60M727,53C732,56 730,64 735,67M744,51C748,53 749,56 752,58M744,51C739,55 735,60 735,67M752,58C756,57 759,59 763,58M752,58C752,59 752,60 751,61M752,58C755,60 758,60 760,63M763,58C761,59 760,61 760,63M763,58C766,62 772,60 774,65M782,54C783,59 789,59 791,64M791,57C791,61 792,64 795,67M819,55C823,53 828,54 832,53M832,53C835,53 839,54 842,55M832,53C832,59 828,63 826,69M832,53C836,56 837,61 839,66M842,55C840,59 838,62 839,66M842,55C842,60 848,61 849,65M861,50C863,53 865,56 868,58M861,50C857,55 852,59 849,65M861,50C864,56 864,61 862,67M868,58C868,62 862,63 862,67M868,58C868,62 869,66 867,71M887,56C885,59 880,58 878,61M892,57C891,59 890,62 888,64M596,70C599,66 602,63 606,60M596,70C593,70 590,71 587,72M596,70C598,74 604,74 607,77M606,60C610,66 614,69 620,71M621,62C625,64 629,65 632,69M621,62C620,65 621,68 620,71M632,69C635,64 639,61 646,61M632,69C634,70 636,72 638,73M646,61C641,63 642,70 638,73M654,69C659,69 662,66 666,66M654,69C654,71 655,73 654,75M666,66C671,65 677,65 682,61M666,66C666,70 664,74 661,78M682,61C678,66 674,71 671,77M682,61C685,64 685,68 685,72M697,60C699,62 701,64 705,64M705,64C707,66 710,69 712,71M717,60C722,65 729,66 735,67M717,60C713,63 714,68 712,71M735,67C741,66 746,64 751,61M735,67C736,71 733,73 733,77M735,67C739,67 741,71 744,72M751,61C755,65 752,70 755,74M760,63C765,65 769,65 774,65M760,63C761,68 756,70 755,74M774,65C780,68 785,62 791,64M774,65C776,68 780,70 781,74M791,64C792,65 794,66 795,67M791,64C791,66 791,69 792,72M795,67C795,69 793,70 792,72M795,67C802,67 806,71 809,77M795,67C796,72 798,78 802,82M809,66C814,69 820,67 826,69M809,66C808,70 808,73 809,77M809,66C812,71 819,69 822,75M826,69C831,70 835,69 839,66M826,69C824,70 823,73 822,75M839,66C842,66 846,66 849,65M839,66C842,69 845,71 846,76M849,65C846,68 849,73 846,76M849,65C851,70 857,71 860,74M862,67C864,68 866,69 867,71M878,61C872,62 869,66 867,71M888,64C885,65 882,67 881,71M888,64C894,66 896,72 901,75M600,77C602,76 605,77 607,77M600,77C599,79 596,80 594,81M600,77C602,81 605,84 604,89M607,77C612,76 615,72 620,71M607,77C606,81 604,85 604,89M607,77C610,80 615,83 619,85M620,71C625,73 625,80 630,82M638,73C634,74 632,78 630,82M654,75C650,80 644,78 640,82M661,78C665,77 668,77 671,77M661,78C666,78 668,83 673,82M671,77C675,74 681,75 685,72M671,77C672,79 672,81 673,82M671,77C674,80 678,80 680,83M685,72C692,74 699,75 706,77M685,72C685,77 691,79 692,83M706,77C707,74 710,73 712,71M706,77C705,80 704,82 706,85M712,71C719,73 727,72 733,77M712,71C715,77 718,83 717,90M733,77C729,83 724,87 717,90M733,77C735,81 733,86 733,90M733,77C738,80 745,82 749,87M744,72C748,74 751,75 755,74M755,74C758,75 761,74 764,74M755,74C757,79 760,84 760,90M764,74C760,78 760,84 760,90M764,74C769,77 769,82 770,87M781,74C785,72 788,73 792,72M781,74C778,78 771,81 770,87M809,77C814,79 818,77 822,75M809,77C807,79 803,79 802,82M809,77C809,78 810,79 810,81M822,75C817,74 812,76 810,81M835,75C832,80 827,80 823,81M846,76C851,74 855,72 860,74M846,76C845,82 843,87 838,90M860,74C862,72 865,72 867,71M860,74C856,76 853,80 850,84M867,71C872,76 876,81 880,88M881,71C887,76 894,73 901,75M901,75C897,79 891,80 887,83M594,81C598,82 601,86 604,89M594,81C592,87 585,92 587,100M594,81C597,85 599,90 599,95M604,89C608,86 614,86 619,85M604,89C602,91 600,93 599,95M604,89C606,94 606,99 608,104M619,85C622,82 626,83 630,82M619,85C619,87 617,89 616,91M630,82C634,81 637,83 640,82M630,82C633,84 634,88 636,92M640,82C645,84 650,86 655,84M640,82C639,85 637,88 636,92M655,84C655,90 649,94 650,101M655,84C657,88 662,90 663,95M673,82C676,82 678,82 680,83M673,82C667,84 669,92 663,95M673,82C672,85 673,89 672,92M680,83C684,85 688,86 692,83M680,83C677,85 675,89 672,92M692,83C696,87 701,86 706,85M692,83C693,88 692,92 693,96M692,83C698,84 700,92 706,92M706,85C708,88 709,91 712,92M717,90C717,95 715,100 719,104M733,90C738,86 744,86 749,87M749,87C753,86 756,90 760,90M749,87C746,90 743,94 739,95M760,90C761,94 762,97 762,101M770,87C775,86 780,87 784,87M784,87C791,87 797,86 802,82M784,87C780,89 778,92 777,96M784,87C786,91 790,93 792,96M802,82C804,82 807,83 810,81M810,81C814,83 818,81 823,81M810,81C805,84 804,89 802,94M810,81C809,87 813,91 815,96M823,81C827,87 831,92 836,97M838,90C842,88 847,89 850,84M838,90C841,92 845,93 849,93M850,84C855,85 859,83 864,83M850,84C849,88 853,92 853,96M864,83C870,84 875,84 880,88M880,88C882,85 886,86 887,83M880,88C882,91 882,94 883,97M887,83C888,88 885,93 883,97M887,83C894,87 894,95 899,100M887,83C884,90 884,96 888,102M587,100C587,103 589,104 590,106M599,95C595,98 592,101 590,106M616,91C615,97 611,100 608,104M620,99C624,95 630,93 636,92M620,99C617,100 617,103 614,105M620,99C624,101 625,105 626,109M636,92C632,97 630,103 626,109M636,92C640,95 646,98 647,105M650,101C651,101 652,102 653,102M663,95C666,95 669,94 672,92M663,95C659,96 657,101 653,102M663,95C664,98 665,100 667,102M672,92C679,92 686,97 693,96M672,92C671,95 666,98 667,102M672,92C672,99 676,104 682,107M693,96C691,101 686,104 682,107M693,96C692,98 693,100 693,102M706,92C702,95 695,96 693,102M706,92C709,95 707,99 710,102M712,92C711,95 709,98 710,102M727,92C723,95 721,100 719,104M727,92C730,95 729,100 733,102M739,95C742,91 748,94 752,92M752,92C756,94 758,98 762,101M752,92C750,96 746,99 747,105M777,96C782,96 787,95 792,96M777,96C775,100 779,104 777,108M792,96C793,101 792,104 789,107M802,94C800,99 802,105 799,110M815,96C819,101 826,102 828,108M815,96C813,102 813,109 807,113M836,97C841,98 845,95 849,93M836,97C832,100 829,103 828,108M836,97C841,98 844,104 850,103M849,93C848,97 849,100 850,103M853,96C859,98 865,95 871,97M853,96C855,99 859,100 860,103M883,97C879,100 880,106 875,108M883,97C885,98 887,100 888,102M899,100C896,103 892,102 888,102M899,100C901,105 899,110 898,115M590,106C595,101 602,108 608,104M590,106C587,109 589,114 588,117M590,106C591,108 592,110 593,112M608,104C610,104 612,103 614,105M608,104C602,105 597,107 593,112M608,104C608,108 605,111 607,115M614,105C619,104 623,106 626,109M626,109C633,109 641,110 647,105M626,109C627,113 628,117 628,121M626,109C630,111 633,115 638,114M647,105C642,107 641,111 638,114M647,105C647,108 650,112 649,115M653,102C658,102 662,102 667,102M653,102C652,107 648,110 649,115M653,102C656,105 659,109 661,112M667,102C665,106 663,109 661,112M667,102C669,109 674,114 677,120M682,107C679,111 680,116 677,120M682,107C685,109 689,109 691,113M693,102C699,102 705,104 710,102M710,102C715,106 717,110 717,116M719,104C719,108 719,113 717,116M733,102C738,102 742,104 747,105M733,102C734,107 736,111 737,115M747,105C752,105 757,108 763,107M763,107C768,104 773,107 777,108M763,107C761,110 760,113 758,116M789,107C792,109 795,109 799,110M789,107C785,111 785,117 783,121M789,107C792,111 790,117 793,121M799,110C796,113 793,117 793,121M799,110C801,111 804,112 807,113M814,111C819,112 824,112 828,108M814,111C812,113 809,112 807,113M814,111C817,112 820,114 822,116M828,108C830,110 833,109 836,109M828,108C828,113 827,117 828,122M836,109C835,115 831,118 828,122M836,109C836,113 838,115 840,118M850,103C853,109 853,116 858,121M860,103C862,109 857,115 858,121M860,103C865,106 868,109 870,114M888,102C886,106 882,109 882,114M888,102C891,107 892,113 898,115M588,117C589,115 591,113 593,112M588,117C594,119 601,115 607,115M607,115C615,116 621,117 628,121M628,121C630,117 634,115 638,114M628,121C635,119 642,118 649,115M638,114C642,115 646,114 649,115M661,112C668,112 672,116 677,120M691,113C695,115 699,113 702,114M702,114C708,112 712,117 717,116M717,116C722,117 727,120 732,120M732,120C733,117 736,117 737,115M737,115C744,119 751,116 758,116M758,116C761,115 764,116 766,116M807,113C812,113 817,114 822,116M807,113C815,112 819,122 828,122M828,122C831,118 837,122 840,118M840,118C847,116 852,117 858,121M858,121C862,118 867,118 870,114M870,114C874,115 878,116 882,114" fill="none" stroke="#f0a4a0" stroke-width="0.65" opacity="0.66"/><path d="M904,-3C908,-9 912,-12 919,-11M904,-3C900,3 903,12 897,18M919,-11C924,-12 927,-7 931,-6M919,-11C914,-6 907,-3 904,3M931,-6C939,-3 948,-9 957,-4M931,-6C929,-2 933,1 930,4M974,-4C972,2 964,3 962,9M992,-4C1000,-4 1008,-10 1017,-9M1017,-9C1019,-2 1027,2 1026,10M1034,-5C1038,-8 1043,-4 1048,-7M1034,-5C1028,-2 1025,3 1026,10M1034,-5C1035,3 1046,5 1047,14M1048,-7C1056,-15 1065,-15 1075,-11M1048,-7C1044,-0 1051,7 1047,14M1048,-7C1051,-4 1054,-0 1055,5M1075,-11C1083,-12 1087,-3 1094,-5M1075,-11C1068,-6 1061,-1 1055,5M1075,-11C1079,-7 1082,-2 1082,4M1094,-5C1090,-2 1085,-1 1082,4M1094,-5C1095,-2 1098,-0 1101,1M1114,-10C1118,-10 1119,-6 1122,-4M1122,-4C1132,-3 1142,-3 1151,-9M1122,-4C1114,-5 1107,-4 1101,1M1122,-4C1121,0 1122,4 1124,8M1151,-9C1147,-1 1141,7 1132,10M904,3C913,-3 922,1 930,4M904,3C901,8 898,12 897,18M930,4C939,4 947,3 954,8M954,8C957,10 959,9 962,9M954,8C956,10 956,14 960,15M962,9C967,14 974,15 980,15M983,13C983,15 982,15 980,15M983,13C985,19 992,22 993,28M1010,7C1016,6 1020,10 1026,10M1010,7C1010,13 1013,16 1016,20M1026,10C1033,10 1040,10 1047,14M1047,14C1048,10 1053,9 1055,5M1047,14C1054,13 1058,20 1065,21M1055,5C1064,9 1073,6 1082,4M1101,1C1110,-2 1115,9 1124,8M1101,1C1094,6 1096,15 1094,21M1101,1C1108,6 1109,14 1116,19M1124,8C1127,9 1130,7 1132,10M1132,10C1125,10 1123,18 1116,19M1132,10C1139,15 1148,18 1149,28M897,18C905,21 911,14 919,17M897,18C906,24 900,37 909,42M919,17C926,18 931,22 934,28M934,28C940,31 942,37 947,41M960,15C967,16 973,19 980,15M960,15C950,21 949,31 947,41M960,15C960,21 962,27 965,32M980,15C972,18 970,26 965,32M980,15C986,20 990,26 989,34M993,28C999,22 1007,20 1016,20M993,28C993,31 990,32 989,34M1016,20C1021,22 1026,21 1031,21M1016,20C1015,24 1018,27 1019,31M1031,21C1038,22 1040,30 1047,30M1031,21C1028,25 1023,27 1019,31M1031,21C1032,27 1038,32 1037,39M1047,30C1053,28 1059,25 1065,21M1047,30C1044,34 1040,35 1037,39M1047,30C1046,35 1046,41 1049,46M1065,21C1074,18 1084,27 1094,21M1065,21C1063,26 1062,30 1059,34M1094,21C1101,24 1108,16 1116,19M1094,21C1087,28 1086,37 1080,44M1116,19C1124,18 1130,22 1135,28M1116,19C1109,24 1105,33 1096,36M1116,19C1123,24 1123,32 1124,39M1135,28C1140,27 1145,29 1149,28M1149,28C1150,34 1149,41 1152,46M909,42C907,46 904,48 900,48M909,42C910,46 916,46 917,50M947,41C944,43 946,48 942,50M947,41C952,46 955,53 959,60M965,32C973,30 981,30 989,34M965,32C968,42 967,52 959,60M965,32C972,37 977,44 982,51M989,34C987,40 986,46 982,51M989,34C994,39 996,44 996,50M1004,42C1010,39 1012,32 1019,31M1004,42C1002,45 999,47 996,50M1019,31C1025,34 1032,34 1037,39M1037,39C1038,46 1036,52 1037,59M1037,39C1041,42 1044,46 1049,46M1037,39C1033,47 1032,56 1025,63M1059,34C1057,39 1051,41 1049,46M1059,34C1061,40 1067,42 1070,46M1080,44C1085,40 1091,39 1096,36M1080,44C1077,46 1073,44 1070,46M1080,44C1081,48 1081,53 1083,57M1096,36C1106,35 1115,38 1124,39M1096,36C1095,44 1100,50 1103,56M1124,39C1127,39 1131,39 1134,37M1134,37C1133,45 1130,52 1126,59M900,48C906,45 911,50 917,50M900,48C903,56 901,66 905,74M917,50C926,54 934,51 942,50M942,50C947,55 954,55 959,60M942,50C946,57 952,64 952,73M959,60C959,66 952,67 952,73M959,60C963,61 966,63 966,68M982,51C977,57 968,59 966,68M982,51C983,56 977,60 980,66M996,50C1002,48 1007,50 1013,53M996,50C999,57 1000,63 999,70M1013,53C1006,57 1003,63 999,70M1013,53C1018,54 1019,61 1025,63M1037,59C1041,55 1043,49 1049,46M1037,59C1039,61 1042,62 1044,62M1049,46C1044,50 1043,56 1044,62M1049,46C1056,53 1052,62 1056,70M1070,46C1060,51 1065,65 1056,70M1083,57C1090,56 1097,55 1103,56M1083,57C1080,62 1079,68 1080,74M1083,57C1090,60 1095,67 1101,71M1103,56C1111,58 1119,53 1126,59M1103,56C1103,61 1104,66 1101,71M1103,56C1107,61 1109,68 1113,73M1126,59C1122,64 1118,69 1113,73M905,74C914,74 921,67 930,67M905,74C906,79 909,84 906,89M905,74C913,75 919,78 925,83M905,74C899,85 898,97 898,110M930,67C937,71 945,70 952,73M930,67C929,72 928,78 925,83M930,67C929,76 936,81 941,87M952,73C948,77 944,82 941,87M952,73C955,78 951,84 952,90M966,68C970,64 975,65 980,66M966,68C957,72 953,80 952,90M966,68C972,72 978,76 982,82M980,66C987,65 992,73 999,70M999,70C1009,71 1015,61 1025,63M999,70C998,74 999,78 999,82M1025,63C1032,66 1038,60 1044,62M1025,63C1030,71 1021,80 1027,88M1044,62C1049,64 1053,67 1056,70M1044,62C1034,68 1030,77 1027,88M1056,70C1064,72 1071,76 1080,74M1056,70C1045,74 1034,77 1027,88M1056,70C1057,73 1059,76 1059,80M1056,70C1064,69 1071,73 1077,77M1080,74C1087,75 1094,69 1101,71M1080,74C1079,75 1078,76 1077,77M1080,74C1084,78 1091,75 1095,80M1101,71C1105,71 1109,72 1113,73M1101,71C1098,73 1097,77 1095,80M1101,71C1105,76 1112,78 1116,82M1113,73C1119,73 1125,69 1131,70M1131,70C1124,71 1121,79 1116,82M1131,70C1134,71 1133,74 1134,76M906,89C913,88 919,86 925,83M906,89C910,91 908,97 912,99M906,89C911,92 916,94 922,94M925,83C930,85 935,88 941,87M925,83C926,87 921,89 922,94M952,90C961,83 971,80 982,82M952,90C950,90 948,91 946,92M952,90C955,97 953,104 952,111M982,82C976,88 975,95 974,102M999,82C1002,85 1007,84 1011,86M999,82C1001,85 1001,89 1002,92M1011,86C1016,87 1022,84 1027,88M1011,86C1008,88 1006,91 1002,92M1011,86C1012,95 1011,103 1009,111M1027,88C1026,89 1027,91 1027,93M1027,88C1031,94 1039,93 1043,98M1059,80C1065,79 1072,81 1077,77M1077,77C1069,79 1069,90 1061,92M1077,77C1076,84 1080,92 1074,99M1077,77C1085,82 1083,95 1093,99M1095,80C1102,84 1108,85 1116,82M1095,80C1098,87 1096,93 1093,99M1116,82C1113,86 1117,91 1113,95M1116,82C1122,87 1126,95 1132,99M912,99C915,97 917,93 922,94M912,99C905,100 901,104 898,110M912,99C912,104 912,110 915,115M922,94C925,104 933,111 944,112M946,92C941,98 946,106 944,112M946,92C949,98 953,104 952,111M974,102C980,104 986,101 992,101M974,102C966,103 960,111 952,111M974,102C974,106 974,111 972,115M992,101C984,103 979,111 972,115M992,101C995,105 994,111 999,115M992,101C998,104 1005,106 1009,111M1002,92C1009,97 1006,105 1009,111M1027,93C1022,99 1013,103 1009,111M1027,93C1030,99 1028,107 1031,113M1043,98C1049,94 1055,94 1061,92M1043,98C1041,105 1038,110 1031,113M1061,92C1063,104 1054,111 1051,121M1061,92C1060,102 1070,108 1072,116M1074,99C1080,102 1087,96 1093,99M1074,99C1076,105 1070,110 1072,116M1093,99C1100,99 1107,98 1113,95M1093,99C1091,104 1094,110 1093,116M1113,95C1120,94 1127,95 1132,99M1113,95C1110,101 1115,106 1113,112M1132,99C1128,106 1129,113 1130,120M915,115C925,117 934,108 944,112M944,112C947,112 949,111 952,111M952,111C958,116 966,109 972,115M999,115C1002,111 1005,111 1009,111M999,115C1010,109 1020,109 1031,113M1009,111C1017,109 1024,117 1031,113M1031,113C1038,116 1043,121 1051,121M1051,121C1058,123 1065,121 1072,116M1093,116C1100,113 1107,115 1113,112" fill="none" stroke="#f0aea4" stroke-width="0.7" opacity="0.5"/><path d="M1147,-14C1157,-14 1167,-18 1177,-16M1147,-14C1152,-9 1148,0 1154,6M1177,-16C1184,-13 1190,-8 1199,-10M1177,-16C1169,-9 1161,-2 1154,6M1177,-16C1182,-8 1189,-0 1189,10M1199,-10C1203,-8 1209,-11 1214,-8M1199,-10C1212,-6 1225,-9 1238,-9M1199,-10C1195,-4 1190,2 1189,10M1199,-10C1201,-3 1207,4 1207,13M1214,-8C1222,-5 1230,-9 1238,-9M1214,-8C1209,-2 1205,5 1207,13M1214,-8C1220,-2 1227,2 1233,8M1238,-9C1246,-9 1254,-14 1262,-15M1238,-9C1236,-4 1231,1 1233,8M1262,-15C1257,-5 1258,5 1263,15M1262,-15C1272,-9 1273,3 1277,13M1293,-2C1298,-8 1303,-13 1311,-13M1311,-13C1321,-5 1332,-2 1344,0M1311,-13C1315,-2 1327,-0 1334,7M1344,0C1354,2 1361,-3 1367,-10M1344,0C1341,3 1338,5 1334,7M1344,0C1351,-1 1357,1 1363,4M1367,-10C1378,-11 1388,-15 1399,-16M1367,-10C1367,-5 1364,-1 1363,4M1367,-10C1375,-3 1368,9 1377,16M1399,-16C1410,-19 1421,-22 1432,-15M1399,-16C1402,-7 1398,2 1396,11M1421,-12C1424,-3 1414,5 1418,14M1432,-15C1439,-8 1452,-11 1459,-2M1432,-15C1421,-8 1421,4 1418,14M1459,-2C1466,-0 1472,-9 1480,-7M1459,-2C1467,-0 1473,5 1481,8M1480,-7C1483,-2 1480,3 1481,8M1480,-7C1491,-4 1497,3 1502,13M1513,-10C1519,-15 1527,-16 1535,-16M1513,-10C1506,-4 1507,6 1502,13M1513,-10C1519,-5 1521,3 1523,10M1535,-16C1534,-6 1533,4 1523,10M1154,6C1166,2 1178,8 1189,10M1154,6C1154,17 1163,24 1166,34M1189,10C1195,13 1201,11 1207,13M1189,10C1180,16 1169,21 1166,34M1189,10C1189,21 1194,31 1201,39M1207,13C1215,9 1223,4 1233,8M1207,13C1210,23 1200,30 1201,39M1207,13C1216,14 1223,18 1228,26M1263,15C1268,12 1272,12 1277,13M1263,15C1260,24 1251,28 1244,33M1263,15C1260,19 1259,24 1261,30M1277,13C1274,20 1263,21 1261,30M1277,13C1282,16 1287,17 1288,23M1306,18C1316,14 1325,11 1334,7M1306,18C1300,20 1295,26 1288,23M1306,18C1311,23 1310,29 1310,35M1306,18C1318,15 1326,21 1335,26M1334,7C1334,14 1335,20 1335,26M1377,16C1374,24 1364,27 1364,37M1377,16C1377,21 1380,25 1382,29M1396,11C1402,15 1410,17 1418,14M1418,14C1416,22 1416,30 1415,37M1455,13C1453,19 1456,24 1458,29M1481,8C1478,20 1469,26 1458,29M1481,8C1487,17 1478,28 1483,37M1502,13C1509,13 1516,12 1523,10M1502,13C1510,13 1511,23 1518,24M1523,10C1533,14 1542,18 1552,19M1523,10C1520,14 1522,20 1518,24M1523,10C1527,15 1525,21 1528,26M1552,19C1544,19 1535,18 1528,26M1552,19C1549,32 1543,44 1537,56M1150,33C1151,39 1158,43 1157,49M1150,33C1154,43 1148,53 1152,62M1166,34C1166,41 1163,46 1157,49M1166,34C1172,39 1179,43 1188,45M1201,39C1196,41 1192,44 1188,45M1201,39C1202,42 1199,45 1201,48M1201,39C1209,50 1219,53 1232,51M1228,26C1233,29 1238,33 1244,33M1244,33C1249,30 1255,29 1261,30M1244,33C1251,41 1262,43 1266,53M1261,30C1271,33 1278,21 1288,23M1261,30C1265,41 1273,46 1282,52M1288,23C1293,31 1303,31 1310,35M1288,23C1292,34 1284,42 1282,52M1288,23C1297,28 1305,32 1309,41M1310,35C1318,30 1328,33 1335,26M1310,35C1309,37 1309,39 1309,41M1335,26C1343,35 1353,36 1364,37M1335,26C1338,35 1338,45 1337,55M1364,37C1356,45 1347,50 1337,55M1364,37C1367,44 1365,50 1361,55M1382,29C1392,38 1405,31 1415,37M1382,29C1380,36 1381,43 1376,48M1382,29C1382,39 1387,47 1395,52M1444,37C1435,36 1428,45 1418,42M1458,29C1465,35 1474,36 1483,37M1458,29C1456,36 1446,36 1445,43M1458,29C1462,33 1468,36 1471,41M1483,37C1479,37 1474,38 1471,41M1483,37C1485,40 1488,41 1489,43M1518,24C1522,24 1525,24 1528,26M1518,24C1511,34 1495,32 1489,43M1518,24C1520,32 1512,39 1515,47M1528,26C1536,34 1538,45 1537,56M1157,49C1167,46 1177,41 1188,45M1157,49C1157,54 1153,58 1152,62M1188,45C1182,53 1175,59 1169,66M1188,45C1191,50 1196,55 1196,62M1201,48C1211,55 1222,45 1232,51M1201,48C1198,52 1195,56 1196,62M1232,51C1243,48 1255,48 1266,53M1232,51C1220,55 1205,51 1196,62M1232,51C1244,48 1251,61 1262,62M1266,53C1265,56 1266,60 1262,62M1282,52C1293,53 1302,49 1309,41M1309,41C1321,41 1330,46 1337,55M1309,41C1301,48 1293,53 1291,65M1337,55C1335,62 1339,70 1333,77M1361,55C1348,57 1341,68 1333,77M1361,55C1364,57 1365,59 1367,62M1376,48C1383,49 1386,56 1391,60M1395,52C1402,47 1409,42 1418,42M1395,52C1395,56 1393,58 1391,60M1395,52C1396,65 1406,70 1415,78M1418,42C1421,54 1420,66 1415,78M1445,43C1451,53 1445,63 1445,72M1471,41C1477,40 1483,44 1489,43M1471,41C1481,50 1479,62 1480,74M1489,43C1497,47 1507,42 1515,47M1515,47C1523,47 1528,58 1537,56M1515,47C1510,55 1515,65 1511,74M1515,47C1518,55 1527,57 1531,64M1537,56C1548,66 1553,79 1553,93M1152,62C1158,65 1163,68 1169,66M1152,62C1159,73 1167,83 1168,97M1169,66C1177,60 1186,58 1196,62M1169,66C1163,76 1163,86 1168,97M1196,62C1206,69 1203,86 1216,92M1228,78C1223,82 1221,88 1216,92M1228,78C1229,81 1230,85 1229,88M1228,78C1238,76 1246,77 1255,79M1245,69C1246,74 1253,74 1255,79M1262,62C1272,67 1281,68 1291,65M1262,62C1264,69 1258,74 1255,79M1262,62C1262,71 1273,75 1273,84M1291,65C1302,70 1313,56 1324,63M1291,65C1283,69 1277,75 1273,84M1291,65C1300,71 1303,80 1302,92M1324,63C1313,70 1304,78 1302,92M1333,77C1343,69 1358,74 1367,62M1333,77C1324,85 1311,84 1302,92M1333,77C1336,80 1339,83 1338,87M1391,60C1401,63 1407,71 1415,78M1415,78C1424,73 1434,73 1445,72M1415,78C1408,76 1404,84 1397,83M1445,72C1449,79 1452,87 1452,95M1458,66C1464,72 1474,67 1480,74M1458,66C1453,75 1457,86 1452,95M1458,66C1470,69 1472,81 1480,88M1480,74C1490,80 1500,79 1511,74M1480,74C1490,77 1497,83 1501,93M1511,74C1518,72 1524,67 1531,64M1511,74C1508,81 1503,86 1501,93M1168,97C1176,99 1184,92 1192,94M1168,97C1164,101 1158,102 1155,107M1168,97C1170,102 1170,107 1168,112M1192,94C1200,97 1208,94 1216,92M1192,94C1185,101 1172,101 1168,112M1192,94C1196,100 1192,107 1195,113M1216,92C1221,97 1224,103 1231,105M1255,79C1262,79 1268,79 1273,84M1255,79C1242,83 1238,96 1231,105M1255,79C1258,90 1268,94 1274,101M1273,84C1282,90 1291,95 1302,92M1273,84C1273,90 1273,95 1274,101M1273,84C1279,89 1285,93 1287,101M1302,92C1313,86 1326,90 1338,87M1302,92C1314,93 1319,104 1325,113M1338,87C1336,97 1333,106 1325,113M1362,97C1368,88 1376,85 1386,86M1362,97C1353,102 1343,106 1336,113M1362,97C1368,99 1369,107 1375,110M1386,86C1390,84 1393,83 1397,83M1386,86C1386,93 1388,101 1387,108M1386,86C1391,93 1397,99 1407,98M1397,83C1402,87 1402,94 1407,98M1420,83C1434,80 1439,97 1452,95M1420,83C1414,86 1412,94 1407,98M1452,95C1460,89 1469,84 1480,88M1452,95C1449,100 1446,104 1447,110M1452,95C1455,102 1460,108 1462,115M1480,88C1488,86 1494,90 1501,93M1480,88C1469,93 1473,109 1462,115M1480,88C1478,97 1478,106 1485,114M1501,93C1505,90 1510,94 1514,91M1501,93C1508,93 1509,102 1516,102M1514,91C1513,95 1515,98 1516,102M1553,93C1544,94 1539,103 1529,103M1155,107C1158,111 1163,113 1168,112M1168,112C1177,109 1186,111 1195,113M1195,113C1206,104 1218,104 1231,105M1244,115C1255,111 1266,109 1274,101M1244,115C1261,117 1270,98 1287,101M1274,101C1278,101 1283,101 1287,101M1287,101C1299,107 1313,108 1325,113M1325,113C1329,111 1332,114 1336,113M1336,113C1348,108 1362,116 1375,110M1375,110C1379,108 1383,109 1387,108M1387,108C1394,104 1399,98 1407,98M1407,98C1420,105 1436,99 1447,110M1485,114C1493,104 1506,106 1516,102" fill="none" stroke="#f2b8a8" stroke-width="0.7" opacity="0.45"/><path d="M1543,4C1549,5 1551,11 1556,12M1574,-3C1587,-3 1595,-13 1607,-15M1574,-3C1567,0 1563,9 1556,12M1574,-3C1580,2 1586,6 1589,13M1607,-15C1626,-16 1646,-17 1665,-16M1607,-15C1604,-4 1600,7 1589,13M1607,-15C1623,-4 1624,15 1633,30M1607,-15C1624,1 1646,1 1666,9M1665,-16C1670,-7 1669,1 1666,9M1690,-9C1699,-8 1709,-5 1719,-8M1690,-9C1678,-8 1678,8 1666,9M1719,-8C1726,-1 1739,-8 1746,1M1746,1C1757,5 1756,20 1768,23M1556,12C1567,7 1578,14 1589,13M1556,12C1553,25 1555,40 1546,51M1556,12C1564,26 1576,37 1584,50M1589,13C1604,17 1616,28 1633,30M1589,13C1604,23 1617,34 1628,49M1633,30C1641,18 1654,15 1666,9M1633,30C1629,35 1628,42 1628,49M1633,30C1637,29 1640,33 1643,35M1666,9C1680,11 1682,31 1697,32M1697,32C1707,31 1715,22 1726,22M1697,32C1679,32 1660,28 1643,35M1726,22C1740,25 1754,31 1768,23M1768,23C1766,34 1759,42 1756,52M1546,51C1559,58 1571,57 1584,50M1546,51C1555,59 1563,69 1577,68M1584,50C1599,56 1613,43 1628,49M1584,50C1578,55 1576,61 1577,68M1584,50C1591,60 1591,73 1597,83M1643,35C1651,49 1655,64 1659,79M1698,46C1702,50 1705,56 1712,58M1698,46C1691,64 1668,64 1659,79M1698,46C1702,59 1711,70 1708,85M1712,58C1713,67 1706,76 1708,85M1712,58C1725,60 1732,74 1746,74M1756,52C1754,60 1745,64 1746,74M1577,68C1564,75 1558,89 1551,101M1597,83C1607,86 1617,85 1626,80M1597,83C1587,91 1578,99 1573,111M1626,80C1631,86 1637,91 1645,94M1659,79C1675,80 1691,91 1708,85M1708,85C1721,83 1735,84 1746,74M1708,85C1713,89 1710,95 1714,99M1746,74C1742,86 1744,98 1751,109M1551,101C1559,103 1566,106 1573,111M1573,111C1588,106 1603,108 1618,106M1618,106C1635,95 1654,94 1673,97M1645,94C1654,99 1664,91 1673,97M1673,97C1687,94 1701,92 1714,99M1714,99C1728,95 1738,107 1751,109" fill="none" stroke="#f3c0ad" stroke-width="0.7" opacity="0.45"/><circle cx="376" cy="22" r="9" fill="#ef8f8f" opacity="0.22" filter="url(#bl2)"/><circle cx="457" cy="94" r="11" fill="#ef8f8f" opacity="0.22" filter="url(#bl2)"/><circle cx="674" cy="30" r="7" fill="#ef8f8f" opacity="0.22" filter="url(#bl2)"/><circle cx="700" cy="36" r="8" fill="#ef8f8f" opacity="0.22" filter="url(#bl2)"/><circle cx="659" cy="53" r="6" fill="#ef8f8f" opacity="0.22" filter="url(#bl2)"/><circle cx="790" cy="100" r="9" fill="#ef8f8f" opacity="0.22" filter="url(#bl2)"/><circle cx="760" cy="96" r="7" fill="#ef8f8f" opacity="0.22" filter="url(#bl2)"/><circle cx="907" cy="31" r="5" fill="#ef8f8f" opacity="0.22" filter="url(#bl2)"/><circle cx="1072" cy="20" r="7" fill="#ef8f8f" opacity="0.22" filter="url(#bl2)"/><circle cx="1420" cy="41" r="7" fill="#ef8f8f" opacity="0.22" filter="url(#bl2)"/><circle cx="318" cy="97" r="5" fill="#ef8f8f" opacity="0.22" filter="url(#bl2)"/><circle cx="345" cy="100" r="5" fill="#ef8f8f" opacity="0.22" filter="url(#bl2)"/>
<path d="M184.0,0.0 L181.0,12.0 L178.0,22.0 L174.0,30.0 L172.0,38.0 L175.0,44.0 L168.0,45.0 L160.0,43.0 L152.0,45.0 L148.0,48.0 L140.0,49.0 L132.0,50.0 L124.0,54.0 L118.0,58.0 L112.0,63.0 L106.0,67.0 L100.0,70.0 L94.0,73.0 L86.0,74.0 L78.0,75.0 L70.0,78.0 L60.0,82.0 L50.0,85.0 L42.0,88.0 L34.0,87.0 L26.0,92.0 L16.0,95.0 L8.0,100.0 L0.0,102.0 L0.0,115.0 L331.0,115.0 L330.0,108.0 L334.0,102.0 L338.0,96.0 L343.0,90.0 L337.0,93.0 L328.0,98.0 L318.0,100.0 L306.0,99.0 L296.0,96.0 L287.0,91.0 L278.0,86.0 L268.0,84.0 L262.0,80.0 L254.0,78.0 L246.0,82.0 L236.0,83.0 L228.0,78.0 L224.0,72.0 L222.0,67.0 L228.0,63.0 L238.0,58.0 L250.0,52.0 L262.0,45.0 L270.0,37.0 L273.0,25.0 L275.0,10.0 L277.0,0.0Z" fill="#aad3df" />
<path d="M0.0,3.0 L10.0,4.0 L18.0,7.0 L25.0,10.0 L20.0,12.0 L10.0,13.0 L0.0,15.0Z" fill="#aad3df" />
<path d="M0.0,24.0 L8.0,25.0 L14.0,29.0 L18.0,33.0 L10.0,35.0 L4.0,37.0 L0.0,38.0Z" fill="#aad3df" />
<path d="M0.0,46.0 L6.0,47.0 L10.0,52.0 L8.0,57.0 L0.0,59.0Z" fill="#aad3df" />
<path d="M541.0,0.0 L544.0,15.0 L540.0,25.0 L536.0,37.0 L532.0,50.0 L527.0,62.0 L517.0,72.0 L506.0,78.0 L498.0,83.0 L494.0,86.0 L503.0,89.0 L512.0,87.0 L520.0,87.0 L525.0,92.0 L529.0,100.0 L527.0,108.0 L525.0,115.0 L587.0,115.0 L592.4,113.6 L602.4,110.0 L615.0,106.0 L620.0,102.4 L623.6,99.0 L630.0,99.5 L640.0,101.0 L652.0,101.5 L660.0,99.0 L650.0,97.0 L638.0,96.5 L627.0,93.5 L629.0,87.0 L636.0,84.0 L648.0,83.0 L660.0,85.0 L668.0,83.0 L655.0,80.0 L642.0,79.5 L633.0,79.0 L636.0,76.0 L640.0,72.4 L645.0,68.7 L650.0,62.5 L656.0,55.0 L660.0,48.7 L663.0,40.0 L664.8,30.0 L670.0,15.0 L679.0,0.0Z" fill="#aad3df" />
<path d="M496.0,85.0 L489.0,87.0 L481.0,89.0 L489.0,90.0 L500.0,90.0Z" fill="#aad3df" />
<path d="M697.5,0.0 L695.0,7.5 L699.0,14.0 L702.5,17.5 L700.0,25.0 L694.0,31.0 L699.0,31.0 L706.0,24.0 L714.0,17.5 L717.5,10.0 L718.0,2.5 L721.0,0.0Z" fill="#aad3df" />
<path d="M328.0,98.0 L336.0,93.0 L346.0,88.0 L344.0,92.0 L338.0,98.0 L334.0,104.0Z" fill="#aad3df" />
<path d="M200.0,0.0 L197.0,15.0 L193.0,32.0 L186.0,45.0 L176.0,57.0 L166.0,62.0 L150.0,64.0 L136.0,64.0 L128.0,68.0 L120.0,75.0 L108.0,83.0 L94.0,92.0 L80.0,99.0 L64.0,105.0 L48.0,110.0 L30.0,113.0 L16.0,110.0 L4.0,104.0 L0.0,101.0" fill="none" stroke="#9a90ad" stroke-width="1.4" stroke-linejoin="round" opacity="0.85"/>
<path d="M231.0,0.0 L232.0,8.0 L238.0,14.0 L250.0,17.0 L262.0,18.0 L264.0,24.0 L258.0,30.0 L248.0,36.0 L238.0,42.0 L226.0,50.0 L214.0,58.0 L205.0,66.0 L200.0,76.0 L202.0,86.0 L212.0,94.0 L218.0,98.0 L219.0,115.0" fill="none" stroke="#9a90ad" stroke-width="1.4" stroke-linejoin="round" opacity="0.85"/>
<path d="M219.0,113.0 L232.0,108.0 L248.0,103.0 L262.0,102.0 L280.0,104.0 L300.0,108.0 L318.0,110.0 L330.0,104.0" fill="none" stroke="#b9c4d6" stroke-width="0.8" stroke-linejoin="round" />
<path d="M555.0,0.0 L557.0,12.0 L557.0,25.0 L552.0,40.0 L548.0,55.0 L540.0,70.0 L530.0,82.0 L522.0,88.0 L532.0,95.0 L542.0,102.0 L545.0,115.0" fill="none" stroke="#9a90ad" stroke-width="1.4" stroke-linejoin="round" opacity="0.85"/>
<path d="M661.0,0.0 L657.0,15.0 L652.0,30.0 L640.0,45.0 L628.0,58.0 L618.0,68.0 L612.0,78.0 L608.0,88.0 L600.0,96.0 L588.0,104.0 L572.0,111.0 L558.0,115.0" fill="none" stroke="#9a90ad" stroke-width="1.4" stroke-linejoin="round" opacity="0.85"/>
<path d="M770.0,0.0 L772.0,10.0 L778.0,14.0 L786.0,13.0 L786.0,22.0 L780.0,30.0 L774.0,36.0 L772.0,46.0 L768.0,54.0 L760.0,62.0 L752.0,68.0 L760.0,72.0 L756.0,80.0 L762.0,88.0 L770.0,94.0 L774.0,102.0 L770.0,110.0 L773.0,115.0" fill="none" stroke="#bfa9c6" stroke-width="1.4" stroke-linejoin="round" opacity=".85"/>
<path d="M600.0,106.0 L612.0,104.0 L626.0,104.0 L640.0,102.0 L655.0,99.0 L668.0,97.0 L682.0,98.0 L696.0,101.0 L710.0,104.0 L722.0,101.0 L736.0,102.0 L746.0,107.0 L756.0,104.0 L766.0,108.0" fill="none" stroke="#bfa9c6" stroke-width="1.2" stroke-linejoin="round" opacity=".6"/>
<path d="M1126.0,0.0 L1128.0,10.0 L1132.0,18.0 L1130.0,28.0 L1134.0,38.0 L1132.0,48.0 L1128.0,58.0 L1134.0,66.0 L1138.0,76.0 L1142.0,86.0 L1140.0,96.0 L1146.0,104.0 L1150.0,115.0" fill="none" stroke="#a89eb2" stroke-width="1.7" stroke-linejoin="round" />
<path d="M1000.0,115.0 L1010.0,108.0 L1024.0,104.0 L1040.0,100.0 L1052.0,102.0 L1060.0,94.0 L1072.0,92.0 L1082.0,98.0 L1096.0,104.0 L1110.0,106.0 L1124.0,110.0 L1140.0,108.0" fill="none" stroke="#bfa9c6" stroke-width="1.2" stroke-linejoin="round" opacity=".7"/>
<path d="M1484.0,0.0 L1486.0,12.0 L1490.0,22.0 L1500.0,28.0 L1512.0,34.0 L1520.0,40.0 L1528.0,36.0 L1536.0,24.0 L1544.0,12.0 L1554.0,2.0 L1556.0,0.0" fill="none" stroke="#a9a0ad" stroke-width="1.6" stroke-linejoin="round" />
<path d="M1520.0,40.0 L1530.0,46.0 L1538.0,52.0 L1540.0,62.0 L1538.0,72.0 L1540.0,84.0 L1542.0,96.0 L1541.0,108.0 L1543.0,115.0" fill="none" stroke="#a89eb2" stroke-width="1.7" stroke-linejoin="round" />
<path d="M1541.0,86.0 L1552.0,84.0 L1562.0,80.0 L1568.0,70.0 L1580.0,66.0 L1596.0,64.0 L1612.0,62.0 L1628.0,63.0 L1644.0,62.0 L1660.0,66.0 L1676.0,72.0 L1690.0,74.0 L1700.0,76.0 L1702.0,86.0 L1716.0,88.0 L1726.0,92.0 L1740.0,88.0 L1752.0,84.0 L1762.0,86.0" fill="none" stroke="#a79fac" stroke-width="1.6" stroke-linejoin="round" />
<path d="M1182.0,0.0 L1184.0,14.0 L1190.0,26.0 L1196.0,38.0 L1204.0,50.0 L1212.0,60.0 L1224.0,66.0 L1236.0,72.0 L1248.0,78.0" fill="none" stroke="#bfa9c6" stroke-width="1" stroke-linejoin="round" opacity=".6"/>
<path d="M1392.0,70.0 L1396.0,82.0 L1394.0,96.0 L1398.0,108.0 L1400.0,115.0" fill="none" stroke="#bfa9c6" stroke-width="1" stroke-linejoin="round" opacity=".6"/>
<path d="M1458.0,40.0 L1462.0,52.0 L1458.0,64.0 L1462.0,78.0 L1466.0,90.0 L1462.0,104.0 L1464.0,115.0" fill="none" stroke="#bfa9c6" stroke-width="1" stroke-linejoin="round" opacity=".6"/>
<path d="M915.0,0.0 L920.0,12.0 L930.0,18.0 L944.0,16.0 L958.0,22.0 L964.0,32.0 L960.0,44.0 L966.0,56.0 L972.0,68.0 L968.0,80.0 L978.0,90.0 L990.0,96.0 L1000.0,102.0" fill="none" stroke="#bfa9c6" stroke-width="1" stroke-linejoin="round" opacity=".6"/>
<path d="M280.0,0.0 L286.0,10.0 L296.0,16.0 L304.0,20.0 L306.0,30.0 L302.0,40.0 L306.0,52.0 L312.0,62.0 L322.0,72.0 L330.0,82.0 L338.0,90.0" fill="none" stroke="#bfa9c6" stroke-width="1" stroke-linejoin="round" opacity=".7"/>
<g font-family="'Liberation Sans',sans-serif">
<text x="78" y="62.9" font-size="11" text-anchor="middle" fill="#4c4c4c" stroke="#fff" stroke-opacity=".75" stroke-width="1.8" paint-order="stroke" opacity="1">Cork</text>
<text x="376" y="18.4" font-size="12.5" text-anchor="middle" fill="#444" stroke="#fff" stroke-opacity=".75" stroke-width="1.8" paint-order="stroke" opacity="1">Birmingham</text>
<text x="362" y="56.2" font-size="10.5" text-anchor="middle" fill="#4c4c4c" stroke="#fff" stroke-opacity=".75" stroke-width="1.8" paint-order="stroke" opacity="1">Worcester</text>
<text x="332" y="72.7" font-size="10.5" text-anchor="middle" fill="#4c4c4c" stroke="#fff" stroke-opacity=".75" stroke-width="1.8" paint-order="stroke" opacity="1">Gloucester</text>
<text x="259" y="91.2" font-size="10.5" text-anchor="middle" fill="#4c4c4c" stroke="#fff" stroke-opacity=".75" stroke-width="1.8" paint-order="stroke" opacity="1">Swansea</text>
<text x="319" y="92.5" font-size="13" text-anchor="middle" fill="#444" stroke="#fff" stroke-opacity=".75" stroke-width="1.8" paint-order="stroke" opacity="1">Cardiff</text>
<text x="356" y="114.7" font-size="10.5" text-anchor="middle" fill="#4c4c4c" stroke="#fff" stroke-opacity=".75" stroke-width="1.8" paint-order="stroke" opacity="1">Bath</text>
<text x="405.5" y="73.2" font-size="10.5" text-anchor="middle" fill="#4c4c4c" stroke="#fff" stroke-opacity=".75" stroke-width="1.8" paint-order="stroke" opacity="1">Oxford</text>
<text x="452" y="12.2" font-size="10.5" text-anchor="middle" fill="#4c4c4c" stroke="#fff" stroke-opacity=".75" stroke-width="1.8" paint-order="stroke" opacity="1">Peterborough</text>
<text x="521" y="23.2" font-size="10.5" text-anchor="middle" fill="#4c4c4c" stroke="#fff" stroke-opacity=".75" stroke-width="1.8" paint-order="stroke" opacity="1">Norwich</text>
<text x="428" y="40.2" font-size="10.5" text-anchor="middle" fill="#4c4c4c" stroke="#fff" stroke-opacity=".75" stroke-width="1.8" paint-order="stroke" opacity="1">Milton</text>
<text x="428.5" y="52.2" font-size="10.5" text-anchor="middle" fill="#4c4c4c" stroke="#fff" stroke-opacity=".75" stroke-width="1.8" paint-order="stroke" opacity="1">Keynes</text>
<text x="498" y="47.7" font-size="10.5" text-anchor="middle" fill="#4c4c4c" stroke="#fff" stroke-opacity=".75" stroke-width="1.8" paint-order="stroke" opacity="1">Cambridge</text>
<text x="503.5" y="63.2" font-size="10.5" text-anchor="middle" fill="#4c4c4c" stroke="#fff" stroke-opacity=".75" stroke-width="1.8" paint-order="stroke" opacity="1">Colchester</text>
<text x="457" y="89.4" font-size="12.5" text-anchor="middle" fill="#444" stroke="#fff" stroke-opacity=".75" stroke-width="1.8" paint-order="stroke" opacity="1">London</text>
<text x="495" y="105.2" font-size="10.5" text-anchor="middle" fill="#4c4c4c" stroke="#fff" stroke-opacity=".75" stroke-width="1.8" paint-order="stroke" opacity="1">Southend-</text>
<text x="495" y="116.7" font-size="10.5" text-anchor="middle" fill="#4c4c4c" stroke="#fff" stroke-opacity=".75" stroke-width="1.8" paint-order="stroke" opacity="1">on-Sea</text>
<text x="673.5" y="26.2" font-size="10.5" text-anchor="middle" fill="#4c4c4c" stroke="#fff" stroke-opacity=".75" stroke-width="1.8" paint-order="stroke" opacity="1">Haarlem</text>
<text x="741" y="17.2" font-size="10.5" text-anchor="middle" fill="#4c4c4c" stroke="#fff" stroke-opacity=".75" stroke-width="1.8" paint-order="stroke" opacity="1">Zwolle</text>
<text x="830" y="34.7" font-size="10.5" text-anchor="middle" fill="#4c4c4c" stroke="#fff" stroke-opacity=".75" stroke-width="1.8" paint-order="stroke" opacity="1">Osnabrück</text>
<text x="659" y="67.4" font-size="12.5" text-anchor="middle" fill="#444" stroke="#fff" stroke-opacity=".75" stroke-width="1.8" paint-order="stroke" opacity="1">Den Haag</text>
<text x="732.5" y="71.2" font-size="10.5" text-anchor="middle" fill="#4c4c4c" stroke="#fff" stroke-opacity=".75" stroke-width="1.8" paint-order="stroke" opacity="1">Arnhem</text>
<text x="786.5" y="65.7" font-size="10.5" text-anchor="middle" fill="#4c4c4c" stroke="#fff" stroke-opacity=".75" stroke-width="1.8" paint-order="stroke" opacity="1">Münster</text>
<text x="851.5" y="68.7" font-size="10.5" text-anchor="middle" fill="#4c4c4c" stroke="#fff" stroke-opacity=".75" stroke-width="1.8" paint-order="stroke" opacity="1">Bielefeld</text>
<text x="627" y="92.2" font-size="10.5" text-anchor="middle" fill="#4c4c4c" stroke="#fff" stroke-opacity=".75" stroke-width="1.8" paint-order="stroke" opacity="1">Middelburg</text>
<text x="712.5" y="96.7" font-size="10.5" text-anchor="middle" fill="#4c4c4c" stroke="#fff" stroke-opacity=".75" stroke-width="1.8" paint-order="stroke" opacity="1">Eindhoven</text>
<text x="610" y="112.7" font-size="10.5" text-anchor="middle" fill="#4c4c4c" stroke="#fff" stroke-opacity=".75" stroke-width="1.8" paint-order="stroke" opacity="1">Brugge</text>
<text x="954.5" y="24.2" font-size="10.5" text-anchor="middle" fill="#4c4c4c" stroke="#fff" stroke-opacity=".75" stroke-width="1.8" paint-order="stroke" opacity="1">Wolfsburg</text>
<text x="905" y="44.9" font-size="12.5" text-anchor="middle" fill="#444" stroke="#fff" stroke-opacity=".75" stroke-width="1.8" paint-order="stroke" opacity="1">Hannover</text>
<text x="1072.5" y="14.4" font-size="12.5" text-anchor="middle" fill="#444" stroke="#fff" stroke-opacity=".75" stroke-width="1.8" paint-order="stroke" opacity="1">Berlin</text>
<text x="1058.5" y="41.2" font-size="10.5" text-anchor="middle" fill="#4c4c4c" stroke="#fff" stroke-opacity=".75" stroke-width="1.8" paint-order="stroke" opacity="1">Potsdam</text>
<text x="896" y="105.2" font-size="10.5" text-anchor="middle" fill="#4c4c4c" stroke="#fff" stroke-opacity=".75" stroke-width="1.8" paint-order="stroke" opacity="1">Kassel</text>
<text x="1027" y="102.9" font-size="12.5" text-anchor="middle" fill="#444" stroke="#fff" stroke-opacity=".75" stroke-width="1.8" paint-order="stroke" opacity="1">Leipzig</text>
<text x="1116" y="89.2" font-size="10.5" text-anchor="middle" fill="#4c4c4c" stroke="#fff" stroke-opacity=".75" stroke-width="1.8" paint-order="stroke" opacity="1">Cottbus</text>
<text x="1117.5" y="100.7" font-size="10.5" text-anchor="middle" fill="#4c4c4c" stroke="#fff" stroke-opacity=".75" stroke-width="1.8" paint-order="stroke" opacity="1">- Chóśebuz</text>
<text x="1169.5" y="74.7" font-size="10.5" text-anchor="middle" fill="#4c4c4c" stroke="#fff" stroke-opacity=".75" stroke-width="1.8" paint-order="stroke" opacity="1">Zielona</text>
<text x="1169.5" y="86.7" font-size="10.5" text-anchor="middle" fill="#4c4c4c" stroke="#fff" stroke-opacity=".75" stroke-width="1.8" paint-order="stroke" opacity="1">Góra</text>
<text x="1312" y="45.7" font-size="10.5" text-anchor="middle" fill="#4c4c4c" stroke="#fff" stroke-opacity=".75" stroke-width="1.8" paint-order="stroke" opacity="1">Konin</text>
<text x="1287" y="72.2" font-size="10.5" text-anchor="middle" fill="#4c4c4c" stroke="#fff" stroke-opacity=".75" stroke-width="1.8" paint-order="stroke" opacity="1">Kalisz</text>
<text x="1360.5" y="29.2" font-size="10.5" text-anchor="middle" fill="#4c4c4c" stroke="#fff" stroke-opacity=".75" stroke-width="1.8" paint-order="stroke" opacity="1">Płock</text>
<text x="1420" y="56.4" font-size="12.5" text-anchor="middle" fill="#444" stroke="#fff" stroke-opacity=".75" stroke-width="1.8" paint-order="stroke" opacity="1">Warszawa</text>
<text x="1477.5" y="58.2" font-size="10.5" text-anchor="middle" fill="#4c4c4c" stroke="#fff" stroke-opacity=".75" stroke-width="1.8" paint-order="stroke" opacity="1">Siedlce</text>
<text x="1426" y="114.2" font-size="10.5" text-anchor="middle" fill="#4c4c4c" stroke="#fff" stroke-opacity=".75" stroke-width="1.8" paint-order="stroke" opacity="1">Radom</text>
<text x="1541.5" y="66.2" font-size="12" text-anchor="middle" fill="#444" stroke="#fff" stroke-opacity=".75" stroke-width="1.8" paint-order="stroke" opacity="1">Брэст</text>
<text x="1651.5" y="62.2" font-size="10.5" text-anchor="middle" fill="#4c4c4c" stroke="#fff" stroke-opacity=".75" stroke-width="1.8" paint-order="stroke" opacity="1">Пінск</text>
<text x="289" y="24.0" font-size="10" text-anchor="middle" font-style="italic" fill="#8a74b5" stroke="#fff" stroke-opacity=".75" stroke-width="1.8" paint-order="stroke" opacity="0.9">Cymru /</text>
<text x="289" y="35.5" font-size="10" text-anchor="middle" font-style="italic" fill="#8a74b5" stroke="#fff" stroke-opacity=".75" stroke-width="1.8" paint-order="stroke" opacity="0.9">Wales</text>
<text x="807" y="98.5" font-size="10" text-anchor="middle" font-style="italic" fill="#8a74b5" stroke="#fff" stroke-opacity=".75" stroke-width="1.8" paint-order="stroke" opacity="0.9">Nordrhein-</text>
<text x="807" y="110.0" font-size="10" text-anchor="middle" font-style="italic" fill="#8a74b5" stroke="#fff" stroke-opacity=".75" stroke-width="1.8" paint-order="stroke" opacity="0.9">Westfalen</text>
<text x="869" y="12.0" font-size="10" text-anchor="middle" font-style="italic" fill="#8a74b5" stroke="#fff" stroke-opacity=".75" stroke-width="1.8" paint-order="stroke" opacity="0.9">Niedersachsen</text>
<text x="989.5" y="56.5" font-size="10" text-anchor="middle" font-style="italic" fill="#8a74b5" stroke="#fff" stroke-opacity=".75" stroke-width="1.8" paint-order="stroke" opacity="0.9">Sachsen-</text>
<text x="989.5" y="68.5" font-size="10" text-anchor="middle" font-style="italic" fill="#8a74b5" stroke="#fff" stroke-opacity=".75" stroke-width="1.8" paint-order="stroke" opacity="0.9">Anhalt</text>
<text x="1157.5" y="39.5" font-size="10" text-anchor="middle" font-style="italic" fill="#8a74b5" stroke="#fff" stroke-opacity=".75" stroke-width="1.8" paint-order="stroke" opacity="0.9">województwo</text>
<text x="1160" y="51.5" font-size="10" text-anchor="middle" font-style="italic" fill="#8a74b5" stroke="#fff" stroke-opacity=".75" stroke-width="1.8" paint-order="stroke" opacity="0.9">lubuskie</text>
<text x="1251" y="28.5" font-size="10" text-anchor="middle" font-style="italic" fill="#8a74b5" stroke="#fff" stroke-opacity=".75" stroke-width="1.8" paint-order="stroke" opacity="0.9">województwo</text>
<text x="1251" y="40.5" font-size="10" text-anchor="middle" font-style="italic" fill="#8a74b5" stroke="#fff" stroke-opacity=".75" stroke-width="1.8" paint-order="stroke" opacity="0.9">wielkopolskie</text>
<text x="1346" y="85.0" font-size="10" text-anchor="middle" font-style="italic" fill="#8a74b5" stroke="#fff" stroke-opacity=".75" stroke-width="1.8" paint-order="stroke" opacity="0.9">województwo</text>
<text x="1346" y="97.0" font-size="10" text-anchor="middle" font-style="italic" fill="#8a74b5" stroke="#fff" stroke-opacity=".75" stroke-width="1.8" paint-order="stroke" opacity="0.9">łódzkie</text>
<text x="1500" y="110.5" font-size="10" text-anchor="middle" font-style="italic" fill="#8a74b5" stroke="#fff" stroke-opacity=".75" stroke-width="1.8" paint-order="stroke" opacity="0.9">województwo</text>
<text x="1612.5" y="22.5" font-size="10" text-anchor="middle" font-style="italic" fill="#8a74b5" stroke="#fff" stroke-opacity=".75" stroke-width="1.8" paint-order="stroke" opacity="0.9">Брэсцкая</text>
<text x="1612.5" y="34.5" font-size="10" text-anchor="middle" font-style="italic" fill="#8a74b5" stroke="#fff" stroke-opacity=".75" stroke-width="1.8" paint-order="stroke" opacity="0.9">вобласць</text>
<text x="715" y="45.0" font-size="13" text-anchor="middle" fill="#8a6d90" letter-spacing="0.5" stroke="#fff" stroke-opacity=".75" stroke-width="1.8" paint-order="stroke" opacity="0.85">Nederland</text>
<text x="1337" y="62.0" font-size="13" text-anchor="middle" fill="#8a6d90" letter-spacing="0.5" stroke="#fff" stroke-opacity=".75" stroke-width="1.8" paint-order="stroke" opacity="0.85">Polska</text>
<circle cx="78" cy="66" r="1.7" fill="#fff" stroke="#777" stroke-width=".8"/>
<circle cx="376" cy="22.5" r="1.7" fill="#fff" stroke="#777" stroke-width=".8"/>
<circle cx="362" cy="45" r="1.7" fill="#fff" stroke="#777" stroke-width=".8"/>
<circle cx="361" cy="69" r="1.7" fill="#fff" stroke="#777" stroke-width=".8"/>
<circle cx="283" cy="87" r="1.7" fill="#fff" stroke="#777" stroke-width=".8"/>
<circle cx="318" cy="97" r="1.7" fill="#fff" stroke="#777" stroke-width=".8"/>
<circle cx="356" cy="104" r="1.7" fill="#fff" stroke="#777" stroke-width=".8"/>
<circle cx="406" cy="77" r="1.7" fill="#fff" stroke="#777" stroke-width=".8"/>
<circle cx="452" cy="15" r="1.7" fill="#fff" stroke="#777" stroke-width=".8"/>
<circle cx="522" cy="11" r="1.7" fill="#fff" stroke="#777" stroke-width=".8"/>
<circle cx="428" cy="56" r="1.7" fill="#fff" stroke="#777" stroke-width=".8"/>
<circle cx="468" cy="44" r="1.7" fill="#fff" stroke="#777" stroke-width=".8"/>
<circle cx="504" cy="67" r="1.7" fill="#fff" stroke="#777" stroke-width=".8"/>
<circle cx="495" cy="93" r="1.7" fill="#fff" stroke="#777" stroke-width=".8"/>
<circle cx="674" cy="30" r="1.7" fill="#fff" stroke="#777" stroke-width=".8"/>
<circle cx="741" cy="21" r="1.7" fill="#fff" stroke="#777" stroke-width=".8"/>
<circle cx="659.5" cy="53" r="1.7" fill="#fff" stroke="#777" stroke-width=".8"/>
<circle cx="732" cy="60" r="1.7" fill="#fff" stroke="#777" stroke-width=".8"/>
<circle cx="811" cy="62" r="1.7" fill="#fff" stroke="#777" stroke-width=".8"/>
<circle cx="851" cy="57" r="1.7" fill="#fff" stroke="#777" stroke-width=".8"/>
<circle cx="627" cy="96" r="1.7" fill="#fff" stroke="#777" stroke-width=".8"/>
<circle cx="712" cy="100" r="1.7" fill="#fff" stroke="#777" stroke-width=".8"/>
<circle cx="829" cy="39" r="1.7" fill="#fff" stroke="#777" stroke-width=".8"/>
<circle cx="954" cy="27" r="1.7" fill="#fff" stroke="#777" stroke-width=".8"/>
<circle cx="907" cy="31" r="1.7" fill="#fff" stroke="#777" stroke-width=".8"/>
<circle cx="1058" cy="29" r="1.7" fill="#fff" stroke="#777" stroke-width=".8"/>
<circle cx="1027" cy="107" r="1.7" fill="#fff" stroke="#777" stroke-width=".8"/>
<circle cx="1116" cy="77" r="1.7" fill="#fff" stroke="#777" stroke-width=".8"/>
<circle cx="1170" cy="62.5" r="1.7" fill="#fff" stroke="#777" stroke-width=".8"/>
<circle cx="1295" cy="42" r="1.7" fill="#fff" stroke="#777" stroke-width=".8"/>
<circle cx="1287" cy="76" r="1.7" fill="#fff" stroke="#777" stroke-width=".8"/>
<circle cx="1360" cy="18" r="1.7" fill="#fff" stroke="#777" stroke-width=".8"/>
<circle cx="1477" cy="46.5" r="1.7" fill="#fff" stroke="#777" stroke-width=".8"/>
<circle cx="1426" cy="102.5" r="1.7" fill="#fff" stroke="#777" stroke-width=".8"/>
<circle cx="1541" cy="51.5" r="1.7" fill="#fff" stroke="#777" stroke-width=".8"/>
<circle cx="1651" cy="50.5" r="1.7" fill="#fff" stroke="#777" stroke-width=".8"/>
<circle cx="896" cy="109" r="1.7" fill="#fff" stroke="#777" stroke-width=".8"/>
<circle cx="457" cy="94.5" r="2.6" fill="#fff" stroke="#555" stroke-width=".9"/><circle cx="457" cy="94.5" r="1.1" fill="#444"/>
<circle cx="1072.5" cy="20" r="2.6" fill="#fff" stroke="#555" stroke-width=".9"/><circle cx="1072.5" cy="20" r="1.1" fill="#444"/>
<circle cx="1420" cy="41.5" r="2.6" fill="#fff" stroke="#555" stroke-width=".9"/><circle cx="1420" cy="41.5" r="1.1" fill="#444"/>
<text x="1690" y="111" font-size="10.5" fill="#444">©</text>
<text x="1704.5" y="111" font-size="10.5" fill="#2a7fc9" text-decoration="underline">OpenStreetMap</text>
</g>
<path d="M935,29.5 h23 a3,3 0 0 1 3,3 v23 a3,3 0 0 1 -3,3 h-5.5 L946,73.8 L940,58.5 h-5 a3,3 0 0 1 -3,-3 v-23 a3,3 0 0 1 3,-3z" fill="#7fe05f" stroke="#3f9a30" stroke-width="1"/>
<g font-family="'Liberation Mono',monospace" font-weight="bold" font-size="9.2" fill="#0a1a08" text-anchor="middle"><text x="946.5" y="38.2">11C</text><text x="946.5" y="47">10C6</text><text x="946.5" y="55.8" xml:space="preserve">43 4</text></g>
</svg>
<div class="b" style="left:0.00px;top:115.00px;width:1762.00px;height:19.00px;background:#c3c2c3;"></div>
<div class="t" style="left:-7.60px;top:119.22px;font-size:12.5px;color:#161616;transform:scaleX(0.9168);">Latitude  51° 19' 09.0" (51.3192)</div>
<div class="t" style="left:204.00px;top:119.22px;font-size:12.5px;color:#161616;transform:scaleX(0.9326);">Longitude  9° 48' 48.2" (9.8134)</div>
<div class="t" style="left:1486.00px;top:119.22px;font-size:12.5px;color:#161616;transform:scaleX(0.9452);">Dim</div>
<div class="b" style="left:1530.00px;top:122.00px;width:105.00px;height:2.00px;background:#e4e4e4;border-radius:1px;"></div>
<div class="b" style="left:1517.50px;top:116.00px;width:14.00px;height:14.00px;border-radius:50%;background:radial-gradient(circle at 40% 30%,#ececec 0%,#b0b0b0 38%,#707070 78%,#505050 100%);box-shadow:0 0 0 .6px rgba(60,60,60,.7);"></div>
<div class="t" style="left:1663.50px;top:119.22px;font-size:12.5px;color:#161616;transform:scaleX(0.9545);">Zoom</div>
<div class="b" style="left:1704.00px;top:122.00px;width:60.00px;height:2.00px;background:#e4e4e4;border-radius:1px;"></div>
<div class="b" style="left:1736.00px;top:116.00px;width:14.00px;height:14.00px;border-radius:50%;background:radial-gradient(circle at 40% 30%,#ececec 0%,#b0b0b0 38%,#707070 78%,#505050 100%);box-shadow:0 0 0 .6px rgba(60,60,60,.7);"></div>
<div class="b" style="left:0.00px;top:134.00px;width:1762.00px;height:8.00px;background:#006a00;"></div>
<div class="b" style="left:0.00px;top:142.00px;width:1762.00px;height:20.00px;background:#02203f;"></div>
<div class="t" style="left:914.00px;top:145.48px;font-size:13px;color:#f2f2f2;transform:scaleX(1.0378);">FC0013</div>
<div class="b" style="left:1722.00px;top:144.50px;width:50.00px;height:15.00px;background:#0b2a50;border:1px solid #9aa6b6;border-radius:2px;box-sizing:border-box;"></div>
<div class="t" style="left:1724.70px;top:146.61px;font-size:11.5px;color:#fff;transform:scaleX(0.8246);">DAB</div>
<svg class="b" style="left:1759.5px;top:150.5px" width="7" height="4" viewBox="0 0 7 4"><path d="M0,0 H7 L3.5,4Z" fill="#fff"/></svg>
<div class="b" style="left:0.00px;top:162.00px;width:390.00px;height:286.00px;background:#2b2b2b;"></div>
<div class="t" style="left:-1.50px;top:174.01px;font-size:19.5px;color:#b4dce8;transform:scaleX(1.0274);letter-spacing:2.2px;">0.220.352.000</div>
<div class="t" style="left:163.50px;top:174.01px;font-size:19.5px;color:#b4dce8;transform:scaleX(0.9735);">Hz Device</div>
<div class="t" style="left:-1.00px;top:206.00px;font-size:14.8px;color:#e6e620;transform:scaleX(1.0047);">42.64 ppm Correction</div>
<svg class="b" style="left:-8px;top:233.6px;overflow:visible" width="115.2" height="27.9" viewBox="0 0 115.2 27.9"><path d="M0,27.9 V2.5 Q0,0 2.5,0 H102.2 C107.7,0 111.4,4 112.2,10.5 L112.8,27.9 Z" fill="#868686"/></svg>
<div class="t" style="left:5.50px;top:241.53px;font-size:17px;color:#c4c4c4;">Connection</div>
<svg class="b" style="left:104.2px;top:233.6px;overflow:visible" width="95.5" height="27.9" viewBox="0 0 95.5 27.9"><path d="M0,27.9 V2.5 Q0,0 2.5,0 H82.5 C88.0,0 91.7,4 92.5,10.5 L93.1,27.9 Z" fill="#868686"/></svg>
<div class="t" style="left:117.50px;top:241.53px;font-size:17px;color:#c4c4c4;transform:scaleX(0.9582);">Recorder</div>
<svg class="b" style="left:196.7px;top:233.6px;overflow:visible" width="86" height="27.9" viewBox="0 0 86 27.9"><path d="M0,27.9 V2.5 Q0,0 2.5,0 H73 C78.5,0 82.2,4 83,10.5 L83.6,27.9 Z" fill="#868686"/></svg>
<div class="t" style="left:211.00px;top:241.53px;font-size:17px;color:#c4c4c4;transform:scaleX(0.9094);">FC0013</div>
<div class="b" style="left:0.00px;top:261.00px;width:366.80px;height:187.00px;background:#404040;border-radius:0 4px 0 0;"></div>
<svg class="b" style="left:279.7px;top:233.6px;overflow:visible" width="88.6" height="28.4" viewBox="0 0 88.6 28.4"><path d="M0,28.4 V2.5 Q0,0 2.5,0 H75.6 C81.1,0 84.8,4 85.6,10.5 L86.19999999999999,28.4 Z" fill="#404040"/></svg>
<div class="t" style="left:291.70px;top:241.53px;font-size:17px;color:#fff;transform:scaleX(0.9849);">Settings</div>
<div class="t" style="left:5.00px;top:277.57px;font-size:16.5px;color:#f4f4f4;transform:scaleX(0.8530);">AGC</div>
<svg class="b" style="left:98.6px;top:278.1px" width="12.8" height="12.8" viewBox="0 0 14 14"><circle cx="7" cy="7" r="6.6" fill="#e6e6e6"/><path d="M3.4,7.4 L6,10 L10.8,3.6" stroke="#333" stroke-width="1.9" fill="none" stroke-linecap="round" stroke-linejoin="round"/></svg>
<div class="t" style="left:115.70px;top:277.57px;font-size:16.5px;color:#f4f4f4;transform:scaleX(1.0249);">On/Off</div>
<div class="t" style="left:195.00px;top:277.57px;font-size:16.5px;color:#f4f4f4;transform:scaleX(0.9141);">Gain dB</div>
<div class="b" style="left:265.00px;top:273.30px;width:45.50px;height:23.30px;border:1px solid #9a9a9a;box-sizing:border-box;"></div>
<div class="t" style="left:279.00px;top:277.57px;font-size:16.5px;color:#f4f4f4;transform:scaleX(0.9262);">56</div>
<div class="t" style="left:5.00px;top:317.77px;font-size:16.5px;color:#f4f4f4;transform:scaleX(0.9038);">Gain</div>
<div class="b" style="left:99.00px;top:326.60px;width:220.00px;height:2.00px;background:#dcdcdc;border-radius:1px;"></div>
<div class="b" style="left:296.25px;top:321.25px;width:12.50px;height:12.50px;border-radius:50%;background:radial-gradient(circle at 40% 30%,#ececec 0%,#b0b0b0 38%,#707070 78%,#505050 100%);box-shadow:0 0 0 .6px rgba(60,60,60,.7);"></div>
<div class="t" style="left:5.00px;top:360.97px;font-size:16.5px;color:#f4f4f4;transform:scaleX(0.9369);">Corr.</div>
<div class="b" style="left:98.80px;top:352.50px;width:160.30px;height:36.30px;background:#078a07;"></div>
<div class="t" style="left:109.50px;top:364.29px;font-size:17.5px;color:#dff5df;transform:scaleX(1.0475);letter-spacing:1.6px;">042.640</div>
<div class="t" style="left:194.00px;top:364.29px;font-size:17.5px;color:#dff5df;transform:scaleX(1.0574);">ppm</div>
<div class="t" style="left:5.00px;top:403.27px;font-size:16.5px;color:#f4f4f4;transform:scaleX(0.8810);">Bias-T</div>
<div class="b" style="left:98.60px;top:404.60px;width:12.80px;height:12.80px;background:#e2e2e2;border-radius:50%;"></div>
<div class="t" style="left:115.70px;top:404.97px;font-size:16.5px;color:#f4f4f4;transform:scaleX(1.0249);">On/Off</div>
<div class="b" style="left:389.80px;top:162.00px;width:3.40px;height:286.00px;background:#fdfdfd;"></div>
<div class="b" style="left:393.20px;top:162.00px;width:223.80px;height:286.00px;background:#000;"></div>
<div class="b" style="left:398.00px;top:162.00px;width:173.00px;height:18.50px;background:#2d2d2d;border-radius:0 0 5px 5px;"></div>
<div class="b" style="left:398.00px;top:201.00px;width:173.00px;height:132.00px;background:#2d2d2d;border-radius:5px;"></div>
<div class="t" style="left:406.80px;top:195.73px;font-size:13.5px;color:#f4f4f4;transform:scaleX(0.9570);">FFT (Display)</div>
<div class="t" style="left:414.00px;top:218.52px;font-size:12.5px;color:#f4f4f4;transform:scaleX(0.9897);">Window</div>
<div class="b" style="left:413.50px;top:238.30px;width:130.50px;height:22.30px;background:#222222;border:1px solid #707070;border-radius:3px;box-sizing:border-box;"></div><div class="t" style="left:416.30px;top:242.97px;font-size:12.5px;color:#fff;">Hann</div><svg class="b" style="left:521.8px;top:246.5px" width="10.5" height="5.6" viewBox="0 0 10.5 5.6"><path d="M0,0 H10.5 L5.25,5.6Z" fill="#fff"/></svg>
<div class="t" style="left:414.00px;top:274.42px;font-size:12.5px;color:#f4f4f4;transform:scaleX(0.9547);">Length</div>
<div class="b" style="left:413.50px;top:294.50px;width:90.30px;height:22.00px;background:#222222;border:1px solid #707070;border-radius:3px;box-sizing:border-box;"></div><div class="t" style="left:416.30px;top:299.02px;font-size:12.5px;color:#fff;">4096</div><svg class="b" style="left:481.8px;top:302.5px" width="10.5" height="5.6" viewBox="0 0 10.5 5.6"><path d="M0,0 H10.5 L5.25,5.6Z" fill="#fff"/></svg>
<div class="b" style="left:398.00px;top:354.00px;width:173.00px;height:94.00px;background:#2d2d2d;border-radius:5px 5px 0 0;"></div>
<div class="t" style="left:406.80px;top:347.83px;font-size:13.5px;color:#f4f4f4;transform:scaleX(0.9833);">Filter</div>
<div class="b" style="left:404.20px;top:363.00px;width:161.00px;height:85.00px;background:#2f4f4f;"></div>
<div class="b" style="left:408.80px;top:371.40px;width:13.20px;height:13.20px;background:#e2e2e2;border-radius:50%;"></div>
<div class="t" style="left:425.80px;top:372.96px;font-size:12px;color:#f4f4f4;transform:scaleX(0.9555);">Bandw.(kHz)</div>
<div class="t" style="left:516.40px;top:371.66px;font-size:12px;color:#f4f4f4;transform:scaleX(1.0106);">Order</div>
<div class="t" style="left:417.00px;top:410.69px;font-size:17.5px;color:#eef6f6;transform:scaleX(1.0723);letter-spacing:1.5px;">1.560</div>
<div class="t" style="left:518.00px;top:410.69px;font-size:17.5px;color:#eef6f6;transform:scaleX(0.9644);letter-spacing:1.5px;">100</div>
<div class="b" style="left:582.20px;top:294.50px;width:4.20px;height:126.50px;background:#c4c4c4;border-radius:2px;"></div>
<div class="b" style="left:592.70px;top:171.60px;width:9.80px;height:150.60px;background:#e6e6ea;"></div>
<div class="b" style="left:602.40px;top:171.60px;width:10.80px;height:150.60px;background:#0a8a0a;"></div>
<svg class="b" style="left:617px;top:162px" width="1145" height="286" viewBox="617 162 1145 286" font-family="'Liberation Sans',sans-serif">
<rect x="617" y="162" width="1145" height="286" fill="#000"/>
<path d="M688.5,172.5 H1762 M688.5,194.8 H1762 M688.5,217.1 H1762 M688.5,239.4 H1762 M688.5,261.7 H1762 M688.5,284.0 H1762 M688.5,306.3 H1762 M688.5,328.6 H1762 M688.5,350.9 H1762 M688.5,373.2 H1762 M688.5,395.5 H1762 M730.5,172.5 V400.5 M847.25,172.5 V400.5 M964.0,172.5 V400.5 M1080.75,172.5 V400.5 M1197.5,172.5 V400.5 M1314.25,172.5 V400.5 M1431.0,172.5 V400.5 M1547.75,172.5 V400.5 M1664.5,172.5 V400.5 M688.5,172.5 V395.5" stroke="#a4a4a2" stroke-width="1" fill="none"/>
<text transform="translate(677.80,179.55) scale(0.955,1)" font-size="22.5" fill="#e8e8e8" text-anchor="end" >-30.0</text>
<text transform="translate(677.80,224.15) scale(0.955,1)" font-size="22.5" fill="#e8e8e8" text-anchor="end" >-40.0</text>
<text transform="translate(677.80,268.75) scale(0.955,1)" font-size="22.5" fill="#e8e8e8" text-anchor="end" >-50.0</text>
<text transform="translate(677.80,313.35) scale(0.955,1)" font-size="22.5" fill="#e8e8e8" text-anchor="end" >-60.0</text>
<text transform="translate(677.80,357.95) scale(0.955,1)" font-size="22.5" fill="#e8e8e8" text-anchor="end" >-70.0</text>
<text transform="translate(677.80,402.55) scale(0.955,1)" font-size="22.5" fill="#e8e8e8" text-anchor="end" >-80.0</text>
<text transform="translate(729.70,420.30) scale(0.955,1)" font-size="22.5" fill="#e8e8e8" text-anchor="middle" >219.4</text>
<text transform="translate(846.45,420.30) scale(0.955,1)" font-size="22.5" fill="#e8e8e8" text-anchor="middle" >219.6</text>
<text transform="translate(963.20,420.30) scale(0.955,1)" font-size="22.5" fill="#e8e8e8" text-anchor="middle" >219.8</text>
<text transform="translate(1079.95,420.30) scale(0.955,1)" font-size="22.5" fill="#e8e8e8" text-anchor="middle" >220</text>
<text transform="translate(1196.70,420.30) scale(0.955,1)" font-size="22.5" fill="#e8e8e8" text-anchor="middle" >220.2</text>
<text transform="translate(1313.45,420.30) scale(0.955,1)" font-size="22.5" fill="#e8e8e8" text-anchor="middle" >220.4</text>
<text transform="translate(1430.20,420.30) scale(0.955,1)" font-size="22.5" fill="#e8e8e8" text-anchor="middle" >220.6</text>
<text transform="translate(1546.95,420.30) scale(0.955,1)" font-size="22.5" fill="#e8e8e8" text-anchor="middle" >220.8</text>
<text transform="translate(1663.70,420.30) scale(0.955,1)" font-size="22.5" fill="#e8e8e8" text-anchor="middle" >221</text>
<text transform="translate(1753.50,420.30) scale(0.955,1)" font-size="22.5" fill="#e8e8e8" text-anchor="start" >221.2</text>
<text transform="translate(1281.00,441.40) scale(0.925,1)" font-size="22.5" fill="#e8e8e8" text-anchor="middle" >Frequency (MHz)</text>
<text transform="translate(642.3,283) rotate(-90) scale(0.955,1)" font-size="22.5" fill="#e8e8e8" text-anchor="middle">Magnitude (dB)</text>
<path d="M1285.4,172.5 V395.5" stroke="#86c81e" stroke-width="1.3"/>
<path d="M688.5,240.0 L690.0,262.0 L691.5,284.0 L693.0,262.0 L695.0,248.0 L697.0,254.0 L699.0,240.0 L701.0,246.0 L703.0,238.0 L705.0,262.0 L707.0,290.0 L709.0,252.0 L710.5,220.0 L712.0,213.0 L713.5,218.0 L715.0,240.0 L717.0,268.0 L719.0,292.0 L720.5,262.0 L722.0,244.0 L724.0,232.0 L726.0,224.0 L728.0,218.0 L729.5,222.0 L731.0,232.0 L732.0,250.0 L733.0,276.0 L733.6,256.0 L734.6,255.0 L735.0,300.0 L736.0,322.0 L738.0,338.0 L740.0,346.0 L742.0,352.0 L743.0,366.0 L744.0,372.0 L745.0,371.5 L746.6,372.3 L748.2,374.0 L749.6,368.3 L750.9,378.3 L752.6,370.9 L753.8,370.1 L755.4,373.1 L757.1,374.0 L758.5,379.7 L760.3,372.5 L761.5,377.7 L763.0,380.0 L764.4,379.7 L765.9,370.8 L767.3,371.2 L769.1,371.8 L770.4,379.5 L771.9,373.1 L773.7,372.6 L775.1,382.2 L777.0,374.1 L778.7,373.2 L780.1,380.9 L781.4,373.6 L783.0,376.9 L784.6,379.4 L786.0,383.3 L787.3,381.7 L789.3,383.6 L790.6,374.5 L792.3,377.2 L793.8,376.6 L795.1,381.0 L796.6,385.2 L798.0,376.7 L799.5,380.9 L801.4,386.7 L803.0,372.0 L805.0,384.2 L806.7,382.1 L808.7,377.9 L810.6,385.5 L812.5,381.6 L814.4,382.7 L816.1,385.2 L817.8,379.5 L819.7,387.0 L821.3,384.1 L823.1,379.9 L824.5,387.4 L826.5,381.1 L828.2,382.6 L829.9,385.5 L831.7,383.1 L833.6,391.0 L834.6,366.0 L835.5,330.0 L836.5,290.0 L837.5,272.0 L838.5,269.0 L840.0,264.9 L842.0,271.7 L844.0,266.5 L845.5,265.5 L847.2,268.1 L849.2,272.7 L850.4,263.5 L851.7,270.0 L853.2,267.4 L854.8,263.3 L856.2,266.9 L857.8,269.0 L859.7,272.1 L861.1,262.5 L862.7,267.9 L864.2,269.4 L866.0,269.9 L867.9,277.5 L869.7,263.8 L871.5,271.2 L873.2,270.8 L875.3,266.8 L876.6,269.2 L878.4,274.9 L880.5,271.5 L882.4,265.1 L884.4,265.6 L886.1,269.3 L887.3,274.2 L888.7,265.0 L890.0,263.2 L891.8,269.8 L893.9,266.4 L895.2,263.7 L896.6,268.5 L898.3,269.6 L899.8,265.1 L901.8,263.3 L903.9,266.3 L905.2,266.4 L907.0,261.4 L908.7,264.9 L910.4,265.7 L911.6,266.2 L913.7,269.8 L915.3,262.1 L917.2,269.4 L918.7,262.6 L920.8,261.9 L922.0,262.5 L923.8,263.6 L925.6,261.5 L926.9,265.3 L928.2,265.5 L929.8,264.3 L931.1,262.2 L932.9,265.3 L934.7,268.4 L936.5,267.8 L938.0,263.0 L939.4,269.5 L940.7,262.2 L942.2,260.8 L943.7,267.2 L945.6,263.1 L947.6,270.0 L949.5,264.4 L950.8,255.7 L952.5,264.4 L953.9,266.3 L955.9,264.0 L958.0,263.7 L959.5,263.7 L961.1,268.4 L963.0,261.0 L964.9,260.1 L966.6,259.4 L968.5,266.0 L970.3,263.1 L971.9,268.7 L973.3,268.0 L975.2,267.1 L977.3,267.7 L979.1,266.6 L981.0,260.0 L982.6,259.4 L984.4,265.3 L986.4,265.7 L988.2,264.8 L989.8,268.9 L991.6,266.6 L992.8,265.2 L994.3,260.5 L995.8,260.3 L997.8,264.6 L999.9,264.8 L1001.7,269.3 L1003.5,259.8 L1004.9,264.9 L1006.6,260.0 L1008.2,264.5 L1009.7,262.2 L1011.5,262.1 L1012.9,259.6 L1014.2,260.9 L1015.7,268.0 L1017.0,268.9 L1018.2,268.1 L1019.9,268.8 L1021.5,268.5 L1023.1,268.9 L1024.9,260.6 L1026.5,262.8 L1027.8,263.7 L1029.4,262.0 L1031.0,267.0 L1033.1,268.6 L1034.5,260.6 L1036.4,265.5 L1037.9,266.1 L1039.6,265.6 L1041.0,261.9 L1043.0,263.7 L1044.4,263.6 L1045.7,260.8 L1047.5,264.9 L1049.1,263.3 L1050.9,264.1 L1052.9,265.6 L1054.3,263.7 L1056.2,263.1 L1058.3,262.7 L1060.1,268.5 L1061.7,260.6 L1063.0,260.4 L1064.6,266.2 L1066.5,263.3 L1067.8,262.6 L1069.6,261.7 L1071.4,266.7 L1073.1,268.5 L1075.2,263.9 L1076.6,262.7 L1078.7,268.3 L1080.2,263.2 L1081.8,265.1 L1083.7,264.8 L1085.4,261.3 L1087.4,263.4 L1089.1,265.0 L1090.9,268.8 L1092.8,264.1 L1094.8,260.2 L1096.1,266.5 L1097.5,261.5 L1099.2,266.6 L1100.7,268.6 L1102.3,264.4 L1104.2,268.0 L1106.1,265.6 L1108.1,267.1 L1110.1,265.2 L1112.0,266.7 L1113.5,260.4 L1115.6,260.0 L1117.2,261.7 L1118.5,264.6 L1120.4,261.1 L1122.1,263.9 L1123.5,260.9 L1125.3,264.5 L1126.7,265.5 L1128.1,264.0 L1129.8,261.2 L1131.8,261.9 L1133.9,263.2 L1135.1,267.6 L1136.6,263.6 L1138.1,268.0 L1139.5,258.6 L1141.0,266.1 L1142.8,258.8 L1144.2,266.7 L1146.0,267.9 L1147.7,259.7 L1148.9,266.2 L1150.8,259.0 L1152.7,259.1 L1154.3,267.3 L1156.3,261.0 L1157.8,271.8 L1159.2,263.3 L1160.6,266.0 L1162.0,258.7 L1163.7,264.8 L1165.5,258.9 L1167.1,267.2 L1168.9,258.0 L1170.7,260.1 L1172.3,257.9 L1174.3,259.7 L1175.7,261.3 L1177.2,260.9 L1179.0,263.9 L1180.5,266.7 L1182.3,260.8 L1183.6,262.0 L1185.5,259.2 L1187.4,260.9 L1188.7,258.6 L1190.0,266.2 L1191.7,263.6 L1193.6,261.0 L1195.2,257.4 L1197.0,266.7 L1198.8,262.0 L1200.3,263.0 L1202.0,264.7 L1203.7,258.5 L1205.7,262.2 L1207.4,258.2 L1209.5,261.7 L1211.4,258.5 L1213.2,256.4 L1214.9,263.2 L1216.9,259.8 L1218.3,271.5 L1219.9,261.6 L1221.4,264.9 L1223.3,266.7 L1224.8,264.6 L1226.5,265.5 L1227.8,263.0 L1229.8,262.1 L1231.6,262.8 L1233.3,260.7 L1235.0,256.9 L1236.7,257.1 L1238.1,260.8 L1239.9,255.6 L1241.2,264.4 L1242.9,259.1 L1244.7,262.3 L1246.3,264.5 L1248.3,258.8 L1250.0,263.5 L1251.7,258.9 L1253.1,255.2 L1255.2,261.6 L1257.0,257.4 L1258.3,255.6 L1260.0,261.5 L1261.6,256.5 L1263.2,262.4 L1265.2,260.4 L1266.8,261.7 L1268.7,259.3 L1270.0,262.9 L1272.0,253.7 L1273.5,262.5 L1275.4,257.4 L1277.2,259.7 L1278.7,258.2 L1280.7,256.4 L1282.8,266.9 L1284.3,271.9 L1286.4,271.8 L1287.7,257.7 L1289.6,255.9 L1291.6,263.0 L1293.6,254.6 L1295.1,256.6 L1296.5,258.9 L1298.1,258.8 L1299.8,254.6 L1301.8,258.7 L1303.6,253.1 L1305.2,257.2 L1306.4,257.8 L1307.9,258.1 L1309.7,254.3 L1311.4,253.6 L1313.5,252.0 L1315.4,255.4 L1317.0,253.4 L1318.8,255.1 L1320.7,256.6 L1322.7,258.2 L1324.7,253.3 L1326.1,257.5 L1327.7,259.0 L1329.6,253.9 L1331.0,257.2 L1332.2,257.3 L1334.0,256.8 L1335.2,256.3 L1336.8,254.1 L1338.0,260.3 L1339.7,259.2 L1341.1,253.3 L1342.8,256.6 L1344.5,252.4 L1345.9,257.3 L1347.8,259.0 L1349.4,253.6 L1350.6,256.2 L1352.7,252.9 L1354.6,251.9 L1356.6,252.8 L1358.0,250.9 L1360.1,258.8 L1361.5,253.9 L1363.0,255.9 L1364.5,254.7 L1366.2,251.8 L1368.0,252.0 L1369.8,259.7 L1371.8,255.8 L1373.8,255.0 L1375.2,256.3 L1376.5,253.9 L1378.0,255.6 L1379.8,259.2 L1381.1,258.0 L1382.5,249.7 L1384.1,260.2 L1385.5,261.0 L1387.1,258.7 L1389.1,251.5 L1390.6,252.1 L1392.1,258.7 L1393.4,255.1 L1394.6,252.7 L1395.8,254.3 L1397.5,252.6 L1399.0,258.2 L1400.3,253.2 L1402.1,255.1 L1404.1,253.4 L1405.6,248.6 L1407.4,256.6 L1409.5,254.0 L1411.5,253.3 L1413.3,260.3 L1414.7,257.4 L1416.3,251.7 L1417.8,255.9 L1419.1,255.0 L1420.4,257.5 L1421.7,254.4 L1423.1,256.7 L1424.8,257.5 L1426.3,251.7 L1427.5,255.8 L1429.2,254.2 L1430.4,254.4 L1432.1,253.6 L1433.5,255.6 L1435.5,254.5 L1437.6,258.4 L1439.3,255.0 L1440.8,259.0 L1442.3,256.4 L1444.0,254.0 L1446.1,250.2 L1447.9,254.8 L1449.4,253.3 L1451.2,256.2 L1452.9,258.9 L1454.4,254.3 L1455.9,257.8 L1457.7,260.2 L1459.1,256.9 L1460.8,254.5 L1462.6,256.0 L1464.1,255.2 L1465.4,247.7 L1467.2,252.0 L1469.1,260.9 L1471.1,251.4 L1472.7,258.5 L1474.6,253.3 L1476.1,254.0 L1478.0,258.8 L1479.6,257.6 L1481.6,258.0 L1483.4,248.2 L1485.1,259.8 L1486.4,257.4 L1488.2,254.6 L1490.3,251.2 L1491.6,251.2 L1493.4,259.2 L1494.7,255.9 L1496.2,253.7 L1498.2,253.4 L1499.9,258.0 L1501.5,257.4 L1503.4,248.5 L1505.4,253.2 L1506.7,255.7 L1508.1,256.9 L1509.5,255.5 L1510.9,257.1 L1512.4,252.5 L1514.5,253.0 L1516.1,255.0 L1517.7,251.6 L1519.5,257.1 L1521.5,259.5 L1523.1,259.2 L1524.5,247.9 L1525.7,254.7 L1527.2,253.8 L1529.3,251.4 L1531.2,259.0 L1532.8,259.1 L1534.6,267.3 L1536.2,258.3 L1538.2,251.8 L1539.6,255.3 L1541.4,259.4 L1543.2,255.0 L1545.2,253.8 L1547.1,253.8 L1548.8,254.6 L1550.1,255.2 L1551.3,256.6 L1552.8,257.0 L1554.2,260.3 L1556.1,253.0 L1557.6,261.1 L1559.5,253.7 L1561.3,261.1 L1562.7,255.5 L1564.0,258.2 L1565.8,254.2 L1567.8,260.4 L1569.4,262.7 L1571.2,256.6 L1572.8,256.0 L1574.6,257.8 L1575.8,258.4 L1577.5,258.1 L1578.9,256.9 L1580.7,255.5 L1582.8,256.4 L1584.1,262.0 L1585.5,260.6 L1587.6,260.6 L1589.2,267.6 L1591.1,255.1 L1592.7,257.9 L1594.1,255.4 L1595.3,258.1 L1597.0,255.1 L1598.9,260.3 L1601.0,259.9 L1602.3,253.3 L1604.2,258.2 L1605.8,261.2 L1607.8,253.7 L1609.2,259.1 L1611.0,255.0 L1612.6,253.3 L1614.1,259.2 L1615.8,256.4 L1617.7,254.1 L1619.7,259.2 L1621.1,262.9 L1623.0,256.8 L1624.5,254.8 L1626.1,261.3 L1627.7,258.4 L1629.2,260.3 L1631.0,256.3 L1632.4,261.8 L1634.0,262.6 L1635.9,259.4 L1637.1,257.7 L1638.7,262.9 L1640.6,260.2 L1642.1,255.1 L1643.6,257.9 L1645.5,262.0 L1647.2,254.9 L1648.5,257.4 L1650.3,260.4 L1652.3,265.7 L1654.0,257.5 L1655.4,260.5 L1657.5,263.5 L1659.1,262.1 L1660.9,264.4 L1662.5,267.6 L1663.8,257.8 L1665.7,258.3 L1667.5,261.9 L1669.4,262.0 L1670.7,264.9 L1672.8,263.1 L1674.4,265.0 L1675.9,262.2 L1677.2,256.5 L1678.7,263.2 L1680.3,256.8 L1682.0,260.4 L1683.3,270.9 L1684.9,260.2 L1686.9,265.7 L1688.1,258.0 L1690.0,264.9 L1691.2,257.8 L1693.3,263.1 L1694.5,259.2 L1695.8,266.0 L1697.5,263.6 L1699.5,262.9 L1701.5,261.4 L1703.4,260.2 L1705.0,262.5 L1706.6,267.4 L1707.8,263.2 L1709.4,259.9 L1710.9,263.0 L1712.7,263.1 L1714.8,258.8 L1716.9,262.4 L1718.4,261.9 L1720.1,262.2 L1721.8,262.6 L1723.2,262.0 L1724.8,267.8 L1726.3,273.0 L1728.2,263.0 L1730.2,267.5 L1731.4,269.9 L1733.5,268.0 L1734.5,300.0 L1735.5,338.0 L1737.0,344.0 L1739.0,352.0 L1741.0,365.0 L1743.0,340.0 L1745.0,331.0 L1747.0,348.0 L1749.0,362.0 L1751.0,368.0 L1753.0,350.0 L1755.0,338.0 L1757.0,330.0 L1759.0,326.0 L1762.0,322.0" stroke="#e9e92a" stroke-width="1.3" fill="none" stroke-linejoin="round"/>
<text x="742.3" y="193.7" font-size="22" fill="#22dcdc" textLength="202.5" lengthAdjust="spacingAndGlyphs">fRes = 500,0 Hz / bin</text>
<text x="742.3" y="213.5" font-size="22" fill="#22dcdc" textLength="248" lengthAdjust="spacingAndGlyphs">x-Scale: 200,000 kHz / div</text>
<text x="742.3" y="233.4" font-size="22" fill="#22dcdc" textLength="195" lengthAdjust="spacingAndGlyphs">y-Scale: = 5 dB / div</text>
<text x="742.3" y="253.2" font-size="22" fill="#22dcdc" textLength="111" lengthAdjust="spacingAndGlyphs">NENBW = 2</text>
</svg>
<div class="b" style="left:614.80px;top:162.00px;width:1.30px;height:284.00px;background:#dcdcdc;"></div>
<div class="b" style="left:0.00px;top:447.80px;width:1762.00px;height:5.20px;background:#8a8a8a;"></div>
<div class="b" style="left:617.60px;top:445.20px;width:1145.00px;height:7.80px;background:#8a8a8a;"></div>
<div class="b" style="left:0.00px;top:453.00px;width:1762.00px;height:39.50px;background:#2a2a2a;"></div>
<div class="b" style="left:0.00px;top:491.50px;width:1762.00px;height:1.50px;background:#aab6c6;"></div>
<div class="b" style="left:0.00px;top:453.00px;width:53.50px;height:39.00px;background:#8a2be2;"></div>
<div class="t" style="left:-1.50px;top:466.06px;font-size:15.5px;color:#f2c24e;transform:scaleX(1.0263);font-style:italic;">DAB+</div>
<div class="b" style="left:63.30px;top:462.90px;width:59.80px;height:22.10px;background:#262626;border:1px solid #707070;border-radius:3px;box-sizing:border-box;"></div><div class="t" style="left:66.50px;top:467.23px;font-size:13px;color:#fff;">11C</div><svg class="b" style="left:101.8px;top:470.9px" width="10.5" height="5.6" viewBox="0 0 10.5 5.6"><path d="M0,0 H10.5 L5.25,5.6Z" fill="#fff"/></svg>
<div class="b" style="left:133.30px;top:453.00px;width:1.00px;height:39.00px;background:#c8c8c8;"></div>
<div class="b" style="left:134.30px;top:453.00px;width:79.70px;height:39.00px;background:#b11a1a;"></div>
<div class="t" style="left:149.50px;top:465.86px;font-size:15.5px;color:#f08a8a;transform:scaleX(0.9013);">ECC-EId:</div>
<div class="t" style="left:214.00px;top:465.86px;font-size:15.5px;color:#f4f4f4;transform:scaleX(0.9399);">E0-10C6</div>
<div class="t" style="left:292.00px;top:465.86px;font-size:15.5px;color:#e6e620;transform:scaleX(0.9668);">S-ANHALT</div>
<div class="t" style="left:386.00px;top:465.86px;font-size:15.5px;color:#f4f4f4;transform:scaleX(1.0071);">2024-11-15  07:50:12 Z</div>
<div class="b" style="left:613.60px;top:453.00px;width:3.40px;height:39.80px;background:#fdfdfd;"></div>
<div class="b" style="left:627.30px;top:463.30px;width:24.50px;height:21.60px;background:#2a2a2a;border:1px solid #a5a5a5;box-sizing:border-box;"></div>
<svg class="b" style="left:633.6px;top:471.0px" width="10.5" height="5.7" viewBox="0 0 10.5 5.7"><path d="M0,0 H10.5 L5.25,5.7Z" fill="#fff"/></svg>
<div class="t" style="left:723.50px;top:466.90px;font-size:15px;color:#f4f4f4;transform:scaleX(1.0188);">SId: D8D8</div>
<div class="t" style="left:824.70px;top:460.57px;font-size:23.5px;color:#f0f020;">Radio Brocken AM</div>
<div class="t" style="left:1049.50px;top:466.90px;font-size:15px;color:#f4f4f4;transform:scaleX(1.0201);">64 kbps  EEP 2-A</div>
<div class="b" style="left:1185.30px;top:453.00px;width:1.00px;height:39.00px;background:#c8c8c8;"></div>
<div class="b" style="left:1209.60px;top:463.40px;width:22.60px;height:22.60px;background:#2a6ba4;border-radius:50%;"></div>
<div class="b" style="left:1215.90px;top:469.60px;width:10.00px;height:10.00px;background:#f01010;border-radius:50%;"></div>
<div class="b" style="left:1244.50px;top:463.40px;width:22.60px;height:22.60px;background:#1c4468;border-radius:50%;"></div>
<div class="b" style="left:1251.50px;top:469.60px;width:8.80px;height:10.00px;background:#0a0a0a;"></div>
<svg class="b" style="left:1297px;top:459px" width="22" height="29" viewBox="0 0 22 29"><path d="M2.9,9.6 H8.6 L17.5,2.9 V26.3 L8.6,20.1 H2.9Z" fill="none" stroke="#f2f2f2" stroke-width="1.8" stroke-linejoin="miter"/><path d="M8.6,9.6 V20.1" stroke="#f2f2f2" stroke-width="1.5"/></svg>
<div class="b" style="left:0.00px;top:493.00px;width:213.50px;height:339.00px;background:#1b5889;"></div>
<div class="b" style="left:0.00px;top:493.00px;width:213.50px;height:34.00px;background:#0f2e52;"></div>
<div class="t" style="left:-3.00px;top:499.81px;font-size:19.3px;color:#e8f020;transform:scaleX(0.9947);">Radio Brocken AM</div>
<svg class="b" style="left:0px;top:535.1px" width="24" height="25" viewBox="0 0 24 25"><path d="M12.5,1.2 V19.6" stroke="#6cc6ee" stroke-width="2.3" fill="none" stroke-linecap="round"/><path d="M12.4,0.8 C13.6,5.6 20.2,7.4 20.7,12.8 C20.9,14.9 19.7,16.4 18.1,17.2 C19.6,13.2 17.4,9.8 12.6,7.9Z" fill="#6cc6ee"/><ellipse cx="8.6" cy="19.9" rx="5" ry="3.7" fill="#6cc6ee" transform="rotate(-20 8.6 19.9)"/></svg>
<div class="t" style="left:40.60px;top:540.82px;font-size:16px;color:#e6f2ff;transform:scaleX(0.9737);">1A Deutsche Hits</div>
<svg class="b" style="left:0px;top:566.1px" width="24" height="25" viewBox="0 0 24 25"><path d="M12.5,1.2 V19.6" stroke="#6cc6ee" stroke-width="2.3" fill="none" stroke-linecap="round"/><path d="M12.4,0.8 C13.6,5.6 20.2,7.4 20.7,12.8 C20.9,14.9 19.7,16.4 18.1,17.2 C19.6,13.2 17.4,9.8 12.6,7.9Z" fill="#6cc6ee"/><ellipse cx="8.6" cy="19.9" rx="5" ry="3.7" fill="#6cc6ee" transform="rotate(-20 8.6 19.9)"/></svg>
<div class="t" style="left:40.60px;top:571.87px;font-size:16px;color:#e6f2ff;transform:scaleX(0.8852);">89.0 RTL</div>
<svg class="b" style="left:0px;top:597.2px" width="24" height="25" viewBox="0 0 24 25"><path d="M12.5,1.2 V19.6" stroke="#6cc6ee" stroke-width="2.3" fill="none" stroke-linecap="round"/><path d="M12.4,0.8 C13.6,5.6 20.2,7.4 20.7,12.8 C20.9,14.9 19.7,16.4 18.1,17.2 C19.6,13.2 17.4,9.8 12.6,7.9Z" fill="#6cc6ee"/><ellipse cx="8.6" cy="19.9" rx="5" ry="3.7" fill="#6cc6ee" transform="rotate(-20 8.6 19.9)"/></svg>
<div class="t" style="left:40.60px;top:602.92px;font-size:16px;color:#e6f2ff;transform:scaleX(0.9370);">89.0RTL InTheMix</div>
<svg class="b" style="left:0px;top:628.2px" width="24" height="25" viewBox="0 0 24 25"><path d="M12.5,1.2 V19.6" stroke="#6cc6ee" stroke-width="2.3" fill="none" stroke-linecap="round"/><path d="M12.4,0.8 C13.6,5.6 20.2,7.4 20.7,12.8 C20.9,14.9 19.7,16.4 18.1,17.2 C19.6,13.2 17.4,9.8 12.6,7.9Z" fill="#6cc6ee"/><ellipse cx="8.6" cy="19.9" rx="5" ry="3.7" fill="#6cc6ee" transform="rotate(-20 8.6 19.9)"/></svg>
<div class="t" style="left:40.60px;top:633.97px;font-size:16px;color:#e6f2ff;transform:scaleX(0.8979);">EWF Test</div>
<svg class="b" style="left:0px;top:659.3px" width="24" height="25" viewBox="0 0 24 25"><path d="M12.5,1.2 V19.6" stroke="#6cc6ee" stroke-width="2.3" fill="none" stroke-linecap="round"/><path d="M12.4,0.8 C13.6,5.6 20.2,7.4 20.7,12.8 C20.9,14.9 19.7,16.4 18.1,17.2 C19.6,13.2 17.4,9.8 12.6,7.9Z" fill="#6cc6ee"/><ellipse cx="8.6" cy="19.9" rx="5" ry="3.7" fill="#6cc6ee" transform="rotate(-20 8.6 19.9)"/></svg>
<div class="t" style="left:40.60px;top:665.02px;font-size:16px;color:#e6f2ff;transform:scaleX(0.9576);">Radio Brocken</div>
<div class="b" style="left:0.00px;top:687.85px;width:213.50px;height:28.30px;background:#0f2e52;"></div>
<svg class="b" style="left:0px;top:690.4px" width="24" height="25" viewBox="0 0 24 25"><path d="M12.5,1.2 V19.6" stroke="#6cc6ee" stroke-width="2.3" fill="none" stroke-linecap="round"/><path d="M12.4,0.8 C13.6,5.6 20.2,7.4 20.7,12.8 C20.9,14.9 19.7,16.4 18.1,17.2 C19.6,13.2 17.4,9.8 12.6,7.9Z" fill="#6cc6ee"/><ellipse cx="8.6" cy="19.9" rx="5" ry="3.7" fill="#6cc6ee" transform="rotate(-20 8.6 19.9)"/></svg>
<div class="t" style="left:40.60px;top:696.07px;font-size:16px;color:#e8f020;transform:scaleX(0.9810);">Radio Brocken AM</div>
<svg class="b" style="left:0px;top:721.4px" width="24" height="25" viewBox="0 0 24 25"><path d="M12.5,1.2 V19.6" stroke="#6cc6ee" stroke-width="2.3" fill="none" stroke-linecap="round"/><path d="M12.4,0.8 C13.6,5.6 20.2,7.4 20.7,12.8 C20.9,14.9 19.7,16.4 18.1,17.2 C19.6,13.2 17.4,9.8 12.6,7.9Z" fill="#6cc6ee"/><ellipse cx="8.6" cy="19.9" rx="5" ry="3.7" fill="#6cc6ee" transform="rotate(-20 8.6 19.9)"/></svg>
<div class="t" style="left:40.60px;top:727.12px;font-size:16px;color:#e6f2ff;transform:scaleX(0.9421);">Radio Brocken DE</div>
<svg class="b" style="left:0px;top:752.5px" width="24" height="25" viewBox="0 0 24 25"><path d="M12.5,1.2 V19.6" stroke="#6cc6ee" stroke-width="2.3" fill="none" stroke-linecap="round"/><path d="M12.4,0.8 C13.6,5.6 20.2,7.4 20.7,12.8 C20.9,14.9 19.7,16.4 18.1,17.2 C19.6,13.2 17.4,9.8 12.6,7.9Z" fill="#6cc6ee"/><ellipse cx="8.6" cy="19.9" rx="5" ry="3.7" fill="#6cc6ee" transform="rotate(-20 8.6 19.9)"/></svg>
<div class="t" style="left:40.60px;top:758.17px;font-size:16px;color:#e6f2ff;transform:scaleX(0.9649);">Radio Brocken HA</div>
<svg class="b" style="left:0px;top:783.5px" width="24" height="25" viewBox="0 0 24 25"><path d="M12.5,1.2 V19.6" stroke="#6cc6ee" stroke-width="2.3" fill="none" stroke-linecap="round"/><path d="M12.4,0.8 C13.6,5.6 20.2,7.4 20.7,12.8 C20.9,14.9 19.7,16.4 18.1,17.2 C19.6,13.2 17.4,9.8 12.6,7.9Z" fill="#6cc6ee"/><ellipse cx="8.6" cy="19.9" rx="5" ry="3.7" fill="#6cc6ee" transform="rotate(-20 8.6 19.9)"/></svg>
<div class="t" style="left:40.60px;top:789.22px;font-size:16px;color:#e6f2ff;transform:scaleX(0.9756);">Radio Brocken MD</div>
<svg class="b" style="left:0px;top:814.5px" width="24" height="25" viewBox="0 0 24 25"><path d="M12.5,1.2 V19.6" stroke="#6cc6ee" stroke-width="2.3" fill="none" stroke-linecap="round"/><path d="M12.4,0.8 C13.6,5.6 20.2,7.4 20.7,12.8 C20.9,14.9 19.7,16.4 18.1,17.2 C19.6,13.2 17.4,9.8 12.6,7.9Z" fill="#6cc6ee"/><ellipse cx="8.6" cy="19.9" rx="5" ry="3.7" fill="#6cc6ee" transform="rotate(-20 8.6 19.9)"/></svg>
<div class="t" style="left:40.60px;top:820.27px;font-size:16px;color:#e6f2ff;transform:scaleX(0.9489);">radio SAW</div>
<div class="b" style="left:213.50px;top:493.00px;width:5.30px;height:339.00px;background:#e9eff6;"></div>
<div class="b" style="left:218.80px;top:493.00px;width:200.60px;height:339.00px;background:#1b5889;"></div>
<div class="b" style="left:218.80px;top:493.00px;width:200.60px;height:34.00px;background:#0f2e52;"></div>
<div class="t" style="left:224.00px;top:499.81px;font-size:19.3px;color:#f6f6f6;">Service Quality</div>
<div class="t" style="left:228.60px;top:544.29px;font-size:14.2px;color:#f2f6fa;transform:scaleX(0.8888);">SNR (dB)</div>
<div class="b" style="left:348.20px;top:538.30px;width:60.40px;height:24.80px;background:#8c8c8c;"></div>
<div class="b" style="left:348.20px;top:538.30px;width:10.50px;height:24.80px;background:#f01010;"></div>
<div class="t" style="left:370.06px;top:545.26px;font-size:12px;color:#fff;">5.8</div>
<div class="t" style="left:228.60px;top:575.04px;font-size:14.2px;color:#f2f6fa;transform:scaleX(0.8991);">FIC (ok %)</div>
<div class="b" style="left:348.20px;top:569.05px;width:60.40px;height:24.80px;background:#078a07;"></div>
<div class="b" style="left:348.20px;top:569.05px;width:60.40px;height:24.80px;background:#078a07;"></div>
<div class="t" style="left:368.39px;top:576.01px;font-size:12px;color:#fff;">100</div>
<div class="t" style="left:228.60px;top:605.79px;font-size:14.2px;color:#f2f6fa;transform:scaleX(0.9780);">Audio (ok %)</div>
<div class="b" style="left:348.20px;top:599.80px;width:60.40px;height:24.80px;background:#8c8c8c;"></div>
<div class="b" style="left:348.20px;top:599.80px;width:57.80px;height:24.80px;background:#ffa500;"></div>
<div class="t" style="left:371.73px;top:606.76px;font-size:12px;color:#fff;">95</div>
<div class="t" style="left:228.60px;top:636.54px;font-size:14.2px;color:#f2f6fa;transform:scaleX(0.9768);">Null Symbol</div>
<div class="b" style="left:348.20px;top:630.55px;width:60.40px;height:24.80px;background:#078a07;"></div>
<div class="b" style="left:348.20px;top:630.55px;width:60.40px;height:24.80px;background:#078a07;"></div>
<div class="t" style="left:228.60px;top:667.29px;font-size:14.2px;color:#f2f6fa;transform:scaleX(0.9529);">SymbolTime (ms)</div>
<div class="b" style="left:348.20px;top:661.30px;width:60.40px;height:24.80px;background:#8c8c8c;"></div>
<div class="b" style="left:348.20px;top:661.30px;width:9.60px;height:24.80px;background:#078a07;"></div>
<div class="t" style="left:366.72px;top:668.26px;font-size:12px;color:#fff;">0.24</div>
<div class="t" style="left:228.60px;top:698.04px;font-size:14.2px;color:#f2f6fa;transform:scaleX(0.9388);">FrameTime (ms)</div>
<div class="b" style="left:348.20px;top:692.05px;width:60.40px;height:24.80px;background:#8c8c8c;"></div>
<div class="b" style="left:348.20px;top:692.05px;width:39.50px;height:24.80px;background:#078a07;"></div>
<div class="t" style="left:366.72px;top:699.01px;font-size:12px;color:#fff;">95.9</div>
<div class="b" style="left:419.60px;top:493.00px;width:3.60px;height:339.00px;background:#d9e3f0;"></div>
<div class="b" style="left:423.20px;top:493.00px;width:511.20px;height:339.00px;background:#0f2e52;"></div>
<div class="b" style="left:429.40px;top:527.00px;width:505.00px;height:305.00px;background:#1b5889;"></div>
<svg class="b" style="left:430.8px;top:499.7px;overflow:visible" width="63.4" height="27.5" viewBox="0 0 63.4 27.5"><path d="M0,27.5 V2.5 Q0,0 2.5,0 H50.4 C55.9,0 59.6,4 60.4,10.5 L61.0,27.5 Z" fill="#878787"/></svg>
<div class="t" style="left:443.50px;top:507.53px;font-size:17px;color:#c8c8c8;transform:scaleX(0.9128);">Sync</div>
<svg class="b" style="left:534.3px;top:499.7px;overflow:visible" width="74.2" height="27.5" viewBox="0 0 74.2 27.5"><path d="M0,27.5 V2.5 Q0,0 2.5,0 H61.2 C66.7,0 70.4,4 71.2,10.5 L71.8,27.5 Z" fill="#878787"/></svg>
<div class="t" style="left:548.00px;top:507.53px;font-size:17px;color:#c8c8c8;transform:scaleX(1.0349);">Audio</div>
<svg class="b" style="left:605.5px;top:499.7px;overflow:visible" width="81.7" height="27.5" viewBox="0 0 81.7 27.5"><path d="M0,27.5 V2.5 Q0,0 2.5,0 H68.7 C74.2,0 77.9,4 78.7,10.5 L79.3,27.5 Z" fill="#878787"/></svg>
<div class="t" style="left:618.50px;top:507.53px;font-size:17px;color:#c8c8c8;transform:scaleX(0.9261);">Service</div>
<svg class="b" style="left:684.2px;top:499.7px;overflow:visible" width="61.2" height="27.5" viewBox="0 0 61.2 27.5"><path d="M0,27.5 V2.5 Q0,0 2.5,0 H48.2 C53.7,0 57.400000000000006,4 58.2,10.5 L58.800000000000004,27.5 Z" fill="#878787"/></svg>
<div class="t" style="left:697.00px;top:507.53px;font-size:17px;color:#c8c8c8;transform:scaleX(0.8868);">AAC</div>
<svg class="b" style="left:742.4px;top:499.7px;overflow:visible" width="88.6" height="27.5" viewBox="0 0 88.6 27.5"><path d="M0,27.5 V2.5 Q0,0 2.5,0 H75.6 C81.1,0 84.8,4 85.6,10.5 L86.19999999999999,27.5 Z" fill="#878787"/></svg>
<div class="t" style="left:755.50px;top:507.53px;font-size:17px;color:#c8c8c8;transform:scaleX(1.0241);">Options</div>
<svg class="b" style="left:828px;top:499.7px;overflow:visible" width="101" height="27.5" viewBox="0 0 101 27.5"><path d="M0,27.5 V2.5 Q0,0 2.5,0 H88 C93.5,0 97.2,4 98,10.5 L98.6,27.5 Z" fill="#878787"/></svg>
<div class="t" style="left:841.00px;top:507.53px;font-size:17px;color:#c8c8c8;transform:scaleX(0.9524);">Ensemble</div>
<svg class="b" style="left:491.2px;top:499.7px;overflow:visible" width="45.4" height="27.5" viewBox="0 0 45.4 27.5"><path d="M0,27.5 V2.5 Q0,0 2.5,0 H32.4 C37.9,0 41.6,4 42.4,10.5 L43.0,27.5 Z" fill="#1b5889"/></svg>
<div class="t" style="left:503.50px;top:507.53px;font-size:17px;color:#fff;transform:scaleX(0.9329);">TII</div>
<div class="b" style="left:457.30px;top:537.70px;width:9.40px;height:9.40px;background:#f01010;border-radius:50%;"></div>
<div class="b" style="left:486.90px;top:537.90px;width:9.00px;height:9.20px;background:#0f2e52;"></div>
<svg class="b" style="left:530.5px;top:533px" width="15" height="18" viewBox="0 0 15 18"><path d="M0.5,0.5 H9.5 L14.5,5.5 V17.5 H0.5Z" fill="#e8e8ea" stroke="#c9c9c9" stroke-width=".8"/><path d="M9.5,0.5 V5.5 H14.5" fill="#fafafa" stroke="#bdbdbd" stroke-width=".7"/><path d="M3,8 H12 M3,10.5 H12 M3,13 H12 M3,15 H9" stroke="#b9bcc2" stroke-width=".8"/></svg>
<div class="b" style="left:437.50px;top:556.30px;width:394.50px;height:2.00px;background:#6f97bf;"></div>
<div class="b" style="left:437.50px;top:597.40px;width:394.50px;height:2.00px;background:#6f97bf;"></div>
<div class="b" style="left:437.50px;top:638.60px;width:394.50px;height:2.00px;background:#6f97bf;"></div>
<div class="b" style="left:841.20px;top:527.00px;width:1.20px;height:112.50px;background:rgba(150,185,220,0.38);"></div>
<div class="b" style="left:437.15px;top:570.75px;width:13.70px;height:13.70px;background:#e2e2e2;border-radius:50%;"></div>
<div class="t" style="left:462.80px;top:571.69px;font-size:14.2px;color:#f2f6fa;transform:scaleX(0.9775);">Show all entries for this EId on the map</div>
<div class="b" style="left:437.15px;top:611.95px;width:13.70px;height:13.70px;background:#e2e2e2;border-radius:50%;"></div>
<div class="t" style="left:462.80px;top:612.69px;font-size:14.2px;color:#f2f6fa;transform:scaleX(0.9623);">Show Collisions for Sub Id</div>
<div class="b" style="left:633.00px;top:607.60px;width:45.00px;height:21.00px;border:1px solid #6e90b4;border-radius:3px;box-sizing:border-box;"></div>
<div class="t" style="left:636.50px;top:611.92px;font-size:12.5px;color:#fff;">1</div>
<svg class="b" style="left:657.2px;top:616.0px" width="9.5" height="5.2" viewBox="0 0 9.5 5.2"><path d="M0,0 H9.5 L4.75,5.2Z" fill="#fff"/></svg>
<svg class="b" style="left:437.3px;top:658.6px" width="13.4" height="13.4" viewBox="0 0 14 14"><circle cx="7" cy="7" r="6.6" fill="#e6e6e6"/><path d="M4.2,9.8 L9.8,4.2" stroke="#333" stroke-width="2.2" fill="none" stroke-linecap="round"/></svg>
<div class="t" style="left:474.70px;top:657.70px;font-size:15px;color:#f2f6fa;">Main</div>
<div class="t" style="left:527.70px;top:657.70px;font-size:15px;color:#f2f6fa;transform:scaleX(0.9554);">Sub</div>
<div class="t" style="left:573.00px;top:657.70px;font-size:15px;color:#f2f6fa;transform:scaleX(1.0052);">Strength</div>
<div class="t" style="left:649.50px;top:657.70px;font-size:15px;color:#f2f6fa;transform:scaleX(0.9807);">km abs.</div>
<div class="t" style="left:720.20px;top:657.70px;font-size:15px;color:#f2f6fa;">km rel.</div>
<div class="t" style="left:784.30px;top:657.70px;font-size:15px;color:#f2f6fa;">AZM(°)</div>
<div class="b" style="left:437.50px;top:674.30px;width:394.50px;height:1.80px;background:#6f97bf;"></div>
<svg class="b" style="left:437.3px;top:686.1px" width="13.4" height="13.4" viewBox="0 0 14 14"><circle cx="7" cy="7" r="6.6" fill="#e6e6e6"/><path d="M3.4,7.4 L6,10 L10.8,3.6" stroke="#333" stroke-width="1.9" fill="none" stroke-linecap="round" stroke-linejoin="round"/></svg>
<div class="t" style="left:476.30px;top:688.19px;font-size:14px;color:#f2f6fa;transform:scaleX(0.9953);">43</div>
<div class="t" style="left:530.00px;top:688.19px;font-size:14px;color:#f2f6fa;transform:scaleX(0.9632);">4</div>
<div class="t" style="left:575.00px;top:688.19px;font-size:14px;color:#f2f6fa;transform:scaleX(0.9705);">0.910</div>
<div class="t" style="left:651.50px;top:688.19px;font-size:14px;color:#f2f6fa;transform:scaleX(0.9705);">321.6</div>
<div class="t" style="left:722.00px;top:688.19px;font-size:14px;color:#f2f6fa;transform:scaleX(0.9763);">0.0</div>
<div class="t" style="left:786.00px;top:688.19px;font-size:14px;color:#f2f6fa;">211.4</div>
<div class="b" style="left:873.30px;top:558.00px;width:2.30px;height:119.00px;background:#dfe5ec;"></div>
<div class="b" style="left:867.90px;top:657.50px;width:13.00px;height:13.00px;border-radius:50%;background:radial-gradient(circle at 40% 30%,#ececec 0%,#b0b0b0 38%,#707070 78%,#505050 100%);box-shadow:0 0 0 .6px rgba(60,60,60,.7);"></div>
<div class="b" style="left:923.40px;top:558.00px;width:2.30px;height:119.00px;background:#dfe5ec;"></div>
<div class="b" style="left:918.10px;top:653.50px;width:13.00px;height:13.00px;border-radius:50%;background:radial-gradient(circle at 40% 30%,#ececec 0%,#b0b0b0 38%,#707070 78%,#505050 100%);box-shadow:0 0 0 .6px rgba(60,60,60,.7);"></div>
<div class="t" style="left:857.5px;top:603.0px;font-size:13.5px;color:#f2f6fa;transform-origin:0 0;transform:rotate(-90deg) translate(-50%,-50%) scaleX(1.016);">Threshold</div>
<div class="t" style="left:907.5px;top:608.0px;font-size:13.5px;color:#f2f6fa;transform-origin:0 0;transform:rotate(-90deg) translate(-50%,-50%) scaleX(0.999);">Average</div>
<div class="t" style="left:860.25px;top:686.21px;font-size:11.5px;color:#f2f6fa;transform:scaleX(0.9903);">0.062</div>
<div class="t" style="left:917.00px;top:684.71px;font-size:11.5px;color:#f2f6fa;transform:scaleX(0.9168);">10s</div>
<div class="b" style="left:856.70px;top:707.70px;width:13.20px;height:13.20px;background:#e2e2e2;border-radius:50%;"></div>
<div class="t" style="left:873.60px;top:710.91px;font-size:11.5px;color:#f2f6fa;">x10</div>
<div class="b" style="left:934.40px;top:493.00px;width:5.80px;height:339.00px;background:#f4f6f8;"></div>
<div class="b" style="left:940.20px;top:493.00px;width:822.00px;height:339.00px;background:#000;"></div>
<div class="b" style="left:940.20px;top:493.00px;width:822.00px;height:20.00px;background:#0f2e52;"></div>
<div class="t" style="left:1307.50px;top:495.34px;font-size:14.3px;color:#f4f4f4;">Channel Impulse Response (CIR)</div>
<svg class="b" style="left:940px;top:513px" width="822" height="311" viewBox="940 513 822 311" font-family="'Liberation Sans',sans-serif">
<rect x="940" y="513" width="822" height="311" fill="#000"/>
<path d="M1175.5,523.5 H1762 M1175.5,544.33 H1762 M1175.5,565.15 H1762 M1175.5,585.98 H1762 M1175.5,606.8 H1762 M1175.5,627.62 H1762 M1175.5,648.45 H1762 M1175.5,669.27 H1762 M1175.5,690.1 H1762 M1175.5,710.92 H1762 M1175.5,731.75 H1762 M1175.5,773.4 H1762 M1208.8,523.5 V778.4 M1255.8,523.5 V778.4 M1302.8,523.5 V778.4 M1349.8,523.5 V778.4 M1397.1,523.5 V778.4 M1444.4,523.5 V778.4 M1491.7,523.5 V778.4 M1539.0,523.5 V778.4 M1586.3,523.5 V778.4 M1633.6,523.5 V778.4 M1680.9,523.5 V778.4 M1728.2,523.5 V778.4 M1175.5,523.5 V773.4" stroke="#a4a4a2" stroke-width="1" fill="none"/>
<text transform="translate(1165.00,530.55) scale(0.955,1)" font-size="22.5" fill="#e8e8e8" text-anchor="end" >70.0</text>
<text transform="translate(1165.00,572.20) scale(0.955,1)" font-size="22.5" fill="#e8e8e8" text-anchor="end" >60.0</text>
<text transform="translate(1165.00,613.85) scale(0.955,1)" font-size="22.5" fill="#e8e8e8" text-anchor="end" >50.0</text>
<text transform="translate(1165.00,655.50) scale(0.955,1)" font-size="22.5" fill="#e8e8e8" text-anchor="end" >40.0</text>
<text transform="translate(1165.00,697.15) scale(0.955,1)" font-size="22.5" fill="#e8e8e8" text-anchor="end" >30.0</text>
<text transform="translate(1165.00,738.80) scale(0.955,1)" font-size="22.5" fill="#e8e8e8" text-anchor="end" >20.0</text>
<text transform="translate(1208.80,799.10) scale(0.955,1)" font-size="22.5" fill="#e8e8e8" text-anchor="middle" >-60</text>
<text transform="translate(1255.80,799.10) scale(0.955,1)" font-size="22.5" fill="#e8e8e8" text-anchor="middle" >-40</text>
<text transform="translate(1302.80,799.10) scale(0.955,1)" font-size="22.5" fill="#e8e8e8" text-anchor="middle" >-20</text>
<text transform="translate(1349.80,799.10) scale(0.955,1)" font-size="22.5" fill="#e8e8e8" text-anchor="middle" >0</text>
<text transform="translate(1397.10,799.10) scale(0.955,1)" font-size="22.5" fill="#e8e8e8" text-anchor="middle" >20</text>
<text transform="translate(1444.40,799.10) scale(0.955,1)" font-size="22.5" fill="#e8e8e8" text-anchor="middle" >40</text>
<text transform="translate(1491.70,799.10) scale(0.955,1)" font-size="22.5" fill="#e8e8e8" text-anchor="middle" >60</text>
<text transform="translate(1539.00,799.10) scale(0.955,1)" font-size="22.5" fill="#e8e8e8" text-anchor="middle" >80</text>
<text transform="translate(1586.30,799.10) scale(0.955,1)" font-size="22.5" fill="#e8e8e8" text-anchor="middle" >100</text>
<text transform="translate(1633.60,799.10) scale(0.955,1)" font-size="22.5" fill="#e8e8e8" text-anchor="middle" >120</text>
<text transform="translate(1680.90,799.10) scale(0.955,1)" font-size="22.5" fill="#e8e8e8" text-anchor="middle" >140</text>
<text transform="translate(1728.20,799.10) scale(0.955,1)" font-size="22.5" fill="#e8e8e8" text-anchor="middle" >160</text>
<text transform="translate(1756.00,799.10) scale(0.955,1)" font-size="22.5" fill="#e8e8e8" text-anchor="start" >180</text>
<text transform="translate(1524.50,819.50) scale(0.94,1)" font-size="22.5" fill="#e8e8e8" text-anchor="middle" >Distance Difference (km)</text>
<text transform="translate(1130.3,648) rotate(-90) scale(0.955,1)" font-size="22.5" fill="#e8e8e8" text-anchor="middle">Magnitude (dB)</text>
<path d="M1175.5,661.5 L1177.7,662.7 L1180.0,659.2 L1182.4,661.6 L1183.9,660.9 L1185.8,660.0 L1187.5,662.6 L1189.1,662.7 L1190.6,659.1 L1192.2,659.9 L1194.5,660.2 L1196.4,661.7 L1198.7,661.7 L1201.0,660.2 L1202.6,658.8 L1204.6,659.1 L1206.3,660.3 L1208.2,659.5 L1210.0,656.0 L1211.0,613.0 L1212.0,656.0 L1213.2,663.4 L1215.2,653.7 L1217.5,658.5 L1219.8,664.7 L1221.6,661.2 L1223.1,663.1 L1225.4,657.1 L1226.8,659.7 L1229.2,659.7 L1231.1,659.4 L1232.7,659.3 L1235.1,663.0 L1237.0,660.2 L1239.0,663.7 L1240.8,657.3 L1242.3,660.9 L1243.8,662.9 L1245.8,662.8 L1247.4,663.9 L1249.2,665.2 L1251.6,660.6 L1253.7,660.8 L1255.5,658.0 L1257.9,664.9 L1259.8,657.4 L1262.0,664.1 L1264.2,663.3 L1266.3,663.2 L1268.4,659.2 L1270.5,662.6 L1272.9,662.3 L1274.3,661.4 L1276.4,660.7 L1278.4,663.5 L1280.5,663.0 L1282.2,663.9 L1284.3,665.0 L1286.2,661.2 L1288.4,664.7 L1290.5,662.8 L1292.1,663.4 L1294.3,656.0 L1295.4,628.0 L1296.5,656.0 L1297.8,658.1 L1299.8,658.6 L1301.9,657.2 L1303.5,655.4 L1305.1,658.1 L1306.8,661.9 L1308.5,663.4 L1310.2,663.6 L1311.9,657.1 L1313.4,661.4 L1315.4,664.8 L1317.2,663.6 L1319.0,658.0 L1321.0,664.8 L1323.0,659.7 L1324.4,657.7 L1326.4,658.0 L1328.7,660.0 L1330.3,659.2 L1332.1,664.9 L1334.1,659.0 L1336.0,655.0 L1338.0,648.0 L1340.0,640.0 L1341.5,634.0 L1343.0,640.0 L1344.5,628.0 L1346.0,610.0 L1347.5,585.0 L1348.7,548.0 L1349.4,531.0 L1350.2,548.0 L1351.3,585.0 L1352.8,612.0 L1354.5,628.0 L1356.0,646.0 L1357.5,656.0 L1359.0,644.0 L1361.0,650.0 L1363.5,634.0 L1365.0,648.0 L1367.0,660.0 L1368.3,660.1 L1369.9,659.3 L1371.4,663.8 L1373.2,659.2 L1375.6,658.0 L1377.5,661.0 L1379.1,661.7 L1380.5,658.7 L1382.7,664.6 L1385.1,665.2 L1386.5,663.9 L1388.6,664.8 L1390.1,659.3 L1391.7,661.9 L1393.2,658.1 L1395.0,658.2 L1397.2,663.5 L1398.9,661.8 L1401.2,661.9 L1402.8,662.1 L1405.1,661.5 L1406.7,661.4 L1408.9,658.5 L1410.7,663.0 L1412.8,664.0 L1414.3,657.8 L1415.9,664.2 L1417.6,665.7 L1419.1,658.1 L1421.2,663.4 L1423.2,664.9 L1425.0,658.8 L1427.0,659.7 L1428.5,663.8 L1430.7,660.4 L1432.6,661.8 L1434.8,655.5 L1436.4,657.1 L1438.3,662.9 L1440.6,662.0 L1442.4,654.2 L1444.2,660.0 L1445.8,658.9 L1447.3,659.2 L1449.2,657.1 L1451.0,664.7 L1453.0,660.8 L1454.6,662.4 L1456.6,662.9 L1458.2,657.0 L1459.7,660.2 L1461.5,659.4 L1463.2,663.0 L1464.7,658.8 L1467.1,662.2 L1469.4,659.6 L1471.2,657.2 L1473.6,661.2 L1475.1,657.4 L1477.0,662.1 L1478.5,657.7 L1480.3,654.7 L1482.7,658.3 L1484.5,659.4 L1486.0,661.4 L1488.0,664.0 L1489.4,661.3 L1491.3,660.0 L1493.5,664.5 L1495.3,663.7 L1496.8,662.1 L1499.1,655.2 L1500.7,657.5 L1502.7,660.9 L1504.1,658.5 L1505.9,657.6 L1507.6,663.1 L1509.9,662.3 L1511.9,660.5 L1513.9,664.8 L1516.0,659.0 L1517.8,654.6 L1519.5,662.5 L1521.0,663.2 L1522.4,655.8 L1524.6,664.8 L1526.3,660.4 L1528.0,656.9 L1530.2,663.2 L1531.8,662.8 L1534.1,661.6 L1536.5,660.7 L1538.3,663.2 L1540.2,664.9 L1541.7,663.6 L1543.2,665.8 L1545.1,664.2 L1546.7,659.1 L1548.6,659.8 L1550.3,659.8 L1552.7,663.9 L1554.7,663.5 L1556.6,657.1 L1558.1,662.8 L1559.7,663.5 L1561.8,664.1 L1564.0,660.1 L1565.9,658.4 L1567.7,657.0 L1569.4,660.8 L1571.2,665.1 L1573.6,662.6 L1575.5,663.5 L1577.5,662.5 L1579.2,656.0 L1581.2,663.2 L1582.9,664.6 L1585.0,657.4 L1587.1,664.8 L1589.1,663.8 L1591.2,658.6 L1593.4,658.8 L1595.4,659.0 L1597.0,662.3 L1599.3,662.0 L1600.8,662.6 L1602.9,659.9 L1604.5,659.4 L1606.5,664.3 L1608.6,663.2 L1610.0,661.6 L1612.3,662.9 L1614.1,661.2 L1615.8,659.2 L1618.2,654.5 L1620.2,661.9 L1621.8,661.8 L1623.9,662.8 L1626.1,664.8 L1628.3,662.2 L1630.0,662.7 L1631.8,657.6 L1633.4,658.7 L1634.9,663.2 L1637.1,663.6 L1639.4,664.8 L1641.8,653.3 L1643.4,659.9 L1645.5,662.1 L1647.4,660.9 L1649.2,662.5 L1651.6,667.3 L1653.7,659.1 L1655.5,663.0 L1657.2,659.2 L1659.3,663.4 L1661.0,659.6 L1662.9,657.2 L1664.6,660.1 L1666.1,660.8 L1668.0,660.0 L1669.5,659.8 L1670.9,663.2 L1672.3,658.9 L1674.1,658.3 L1676.5,660.5 L1678.0,659.1 L1680.1,660.0 L1682.2,660.5 L1684.5,662.2 L1686.0,657.0 L1687.8,664.1 L1690.1,660.0 L1692.3,667.1 L1694.1,665.0 L1695.7,660.3 L1697.6,659.2 L1699.1,658.2 L1700.6,660.0 L1702.9,661.7 L1705.2,659.2 L1707.5,661.5 L1709.4,659.0 L1711.1,663.5 L1713.5,658.8 L1715.6,659.9 L1717.4,661.7 L1719.1,661.6 L1721.0,662.8 L1723.1,656.9 L1724.9,661.0 L1727.1,657.3 L1728.6,660.0 L1730.0,659.3 L1732.1,664.6 L1734.0,662.8 L1736.3,665.1 L1737.9,664.1 L1740.0,661.2 L1742.4,659.3 L1744.6,658.0 L1746.5,661.6 L1748.3,655.7 L1749.9,664.9 L1751.6,663.4 L1753.2,663.8 L1755.0,662.1 L1756.7,664.2 L1759.0,653.8 L1761.1,656.9" stroke="#e9e92a" stroke-width="1.3" fill="none" stroke-linejoin="round"/>
<rect x="1175.5" y="523.5" width="33.0" height="249.9" fill="#808080" opacity="0.48"/>
<text transform="translate(1344.50,537.80) scale(0.955,1)" font-size="22.5" fill="#f0f0f0" text-anchor="middle" xml:space="preserve">43 4</text>
</svg>
<div class="b" style="left:949.55px;top:524.25px;width:13.50px;height:13.50px;background:#e2e2e2;border-radius:50%;"></div>
<div class="t" style="left:967.00px;top:525.96px;font-size:12px;color:#f4f4f4;transform:scaleX(0.9103);">Freeze</div>
<div class="b" style="left:1021.05px;top:524.25px;width:13.50px;height:13.50px;background:#e2e2e2;border-radius:50%;"></div>
<div class="t" style="left:1038.00px;top:525.96px;font-size:12px;color:#f4f4f4;">Gradient</div>
<div class="t" style="left:954.70px;top:572.96px;font-size:12px;color:#f4f4f4;transform:scaleX(0.9900);">Smoothing Level</div>
<div class="b" style="left:955.50px;top:591.00px;width:134.00px;height:3.60px;background:repeating-linear-gradient(90deg,#9c9c9c 0 1px,transparent 1px 4.17px);"></div>
<div class="b" style="left:950.50px;top:600.80px;width:144.00px;height:2.20px;background:#dedede;"></div>
<div class="b" style="left:967.75px;top:595.55px;width:12.50px;height:12.50px;border-radius:50%;background:radial-gradient(circle at 40% 30%,#ececec 0%,#b0b0b0 38%,#707070 78%,#505050 100%);box-shadow:0 0 0 .6px rgba(60,60,60,.7);"></div>
<div class="t" style="left:954.70px;top:627.16px;font-size:12px;color:#f4f4f4;">Zoom X</div>
<div class="b" style="left:950.50px;top:650.50px;width:144.00px;height:2.20px;background:#dedede;"></div>
<div class="b" style="left:950.45px;top:645.25px;width:12.50px;height:12.50px;border-radius:50%;background:radial-gradient(circle at 40% 30%,#ececec 0%,#b0b0b0 38%,#707070 78%,#505050 100%);box-shadow:0 0 0 .6px rgba(60,60,60,.7);"></div>
<div class="t" style="left:954.70px;top:677.46px;font-size:12px;color:#f4f4f4;transform:scaleX(0.9796);">x-Axis</div>
<div class="b" style="left:961.00px;top:696.00px;width:12.00px;height:12.00px;background:#f4f4f4;border-radius:50%;"></div>
<div class="t" style="left:979.00px;top:696.76px;font-size:12px;color:#f4f4f4;transform:scaleX(0.9424);">Samples</div>
<div class="b" style="left:961.00px;top:716.20px;width:12.00px;height:12.00px;background:#f4f4f4;border-radius:50%;"></div>
<div class="b" style="left:963.80px;top:719.00px;width:6.40px;height:6.40px;background:#111;border-radius:50%;"></div>
<div class="t" style="left:979.00px;top:716.96px;font-size:12px;color:#f4f4f4;transform:scaleX(0.9745);">Distance</div>
<div class="b" style="left:961.00px;top:736.00px;width:12.00px;height:12.00px;background:#f4f4f4;border-radius:50%;"></div>
<div class="t" style="left:979.00px;top:736.76px;font-size:12px;color:#f4f4f4;transform:scaleX(0.9725);">Time</div>
<div class="b" style="left:940.20px;top:823.60px;width:822.00px;height:4.60px;background:#8a8a8a;"></div>
<div class="b" style="left:940.20px;top:828.20px;width:822.00px;height:4.00px;background:#0f2e52;"></div>
</body></html>
